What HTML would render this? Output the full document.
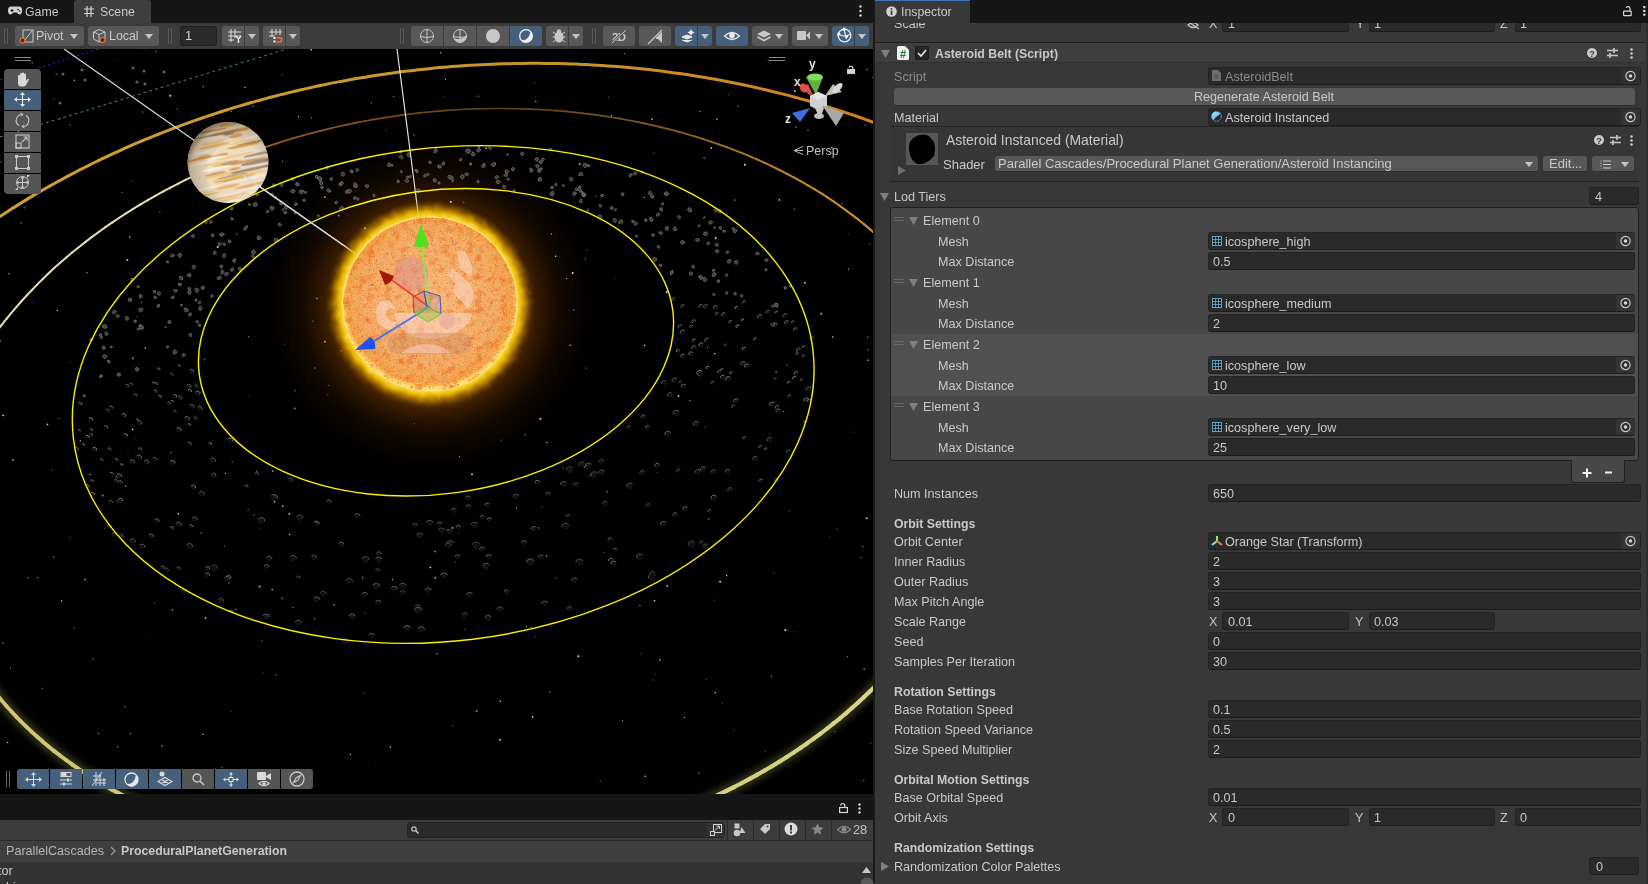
<!DOCTYPE html><html><head><meta charset="utf-8"><style>
*{margin:0;padding:0;box-sizing:border-box}
html,body{width:1648px;height:884px;overflow:hidden;background:#191919;font-family:"Liberation Sans",sans-serif;font-size:12px;color:#d2d2d2}
.a{position:absolute}
.t{position:absolute;white-space:nowrap;line-height:14px;font-size:12.6px;color:#c8c8c8}
.b{font-size:12.3px}
.b{font-weight:bold}
.fld{position:absolute;background:#2a2a2a;border:1px solid #232323;border-bottom-color:#1c1c1c;border-radius:3px}
.btn{position:absolute;background:#585858;border-radius:3px;border-bottom:1px solid #2f2f2f}
.tb{position:absolute;background:#555;border-radius:3px;top:26px;height:20px}
.tbb{position:absolute;background:#46607c;border-radius:3px;top:26px;height:20px}
svg{position:absolute;overflow:visible}
</style></head><body><div id="root" style="position:absolute;left:0;top:0;width:1648px;height:884px;overflow:hidden;will-change:transform"><div class="a" style="left:875px;top:23px;width:773px;height:861px;background:#383838;"></div>
<div class="t" style="left:894px;top:17px;">Scale</div>
<svg style="left:1186px;top:20px" width="14" height="10" viewBox="0 0 14 10"><path d="M2 5 Q7 0 12 5 Q7 10 2 5Z" fill="none" stroke="#c4c4c4" stroke-width="1.3"/><path d="M1 1 L13 9" stroke="#c4c4c4" stroke-width="1.3"/></svg>
<div class="t" style="left:1209px;top:17px;color:#c4c4c4">X</div>
<div class="fld" style="left:1222px;top:14px;width:127px;height:18px;"></div>
<div class="t" style="left:1228px;top:17px;">1</div>
<div class="t" style="left:1356px;top:17px;color:#c4c4c4">Y</div>
<div class="fld" style="left:1369px;top:14px;width:126px;height:18px;"></div>
<div class="t" style="left:1374px;top:17px;">1</div>
<div class="t" style="left:1500px;top:17px;color:#c4c4c4">Z</div>
<div class="fld" style="left:1515px;top:14px;width:126px;height:18px;"></div>
<div class="t" style="left:1520px;top:17px;">1</div>
<div class="a" style="left:875px;top:42px;width:773px;height:1px;background:#1f1f1f;"></div>
<div class="a" style="left:875px;top:43px;width:773px;height:20px;background:#3e3e3e;"></div>
<div class="a" style="left:875px;top:62px;width:773px;height:1px;background:#303030;"></div>
<svg style="left:881px;top:50px" width="9" height="8" viewBox="0 0 9 8"><path d="M0 0 H9 L4.5 8Z" fill="#7f7f7f"/></svg>
<svg style="left:897px;top:46px" width="12" height="14" viewBox="0 0 12 14"><path d="M0 1.5 Q0 0 1.5 0 H8 L12 4 V12.5 Q12 14 10.5 14 H1.5 Q0 14 0 12.5Z" fill="#f0f0f0"/><text x="6" y="12" font-family="Liberation Sans" font-weight="bold" font-size="11" fill="#1d7a2a" text-anchor="middle">#</text></svg>
<div class="a" style="left:915px;top:46px;width:14px;height:14px;background:#262626;border-radius:2px;border:1px solid #1c1c1c"></div>
<svg style="left:917px;top:49px" width="10" height="8" viewBox="0 0 10 8"><path d="M1 4 L4 7 L9 1" fill="none" stroke="#e6e6e6" stroke-width="1.6"/></svg>
<div class="t b" style="left:935px;top:47px;">Asteroid Belt (Script)</div>
<svg style="left:1587px;top:48px" width="10" height="10" viewBox="0 0 10 10"><circle cx="5" cy="5" r="5" fill="#c8c8c8"/><text x="5" y="8.6" font-family="Liberation Sans" font-weight="bold" font-size="9" fill="#3e3e3e" text-anchor="middle">?</text></svg>
<svg style="left:1607px;top:48px" width="11" height="10" viewBox="0 0 11 10"><path d="M0 2.5H11M0 7.5H11" stroke="#c8c8c8" stroke-width="1.3"/><path d="M7 0V5M3 5V10" stroke="#c8c8c8" stroke-width="1.6"/></svg>
<svg style="left:1630px;top:48px" width="3" height="11" viewBox="0 0 3 11"><circle cx="1.5" cy="1.5" r="1.3" fill="#c8c8c8"/><circle cx="1.5" cy="5.5" r="1.3" fill="#c8c8c8"/><circle cx="1.5" cy="9.5" r="1.3" fill="#c8c8c8"/></svg>
<div class="t" style="left:894px;top:70px;color:#8a8a8a">Script</div>
<div class="fld" style="left:1208px;top:67px;width:433px;height:18px;"></div>
<svg style="left:1212px;top:70px" width="9" height="11" viewBox="0 0 9 11"><path d="M0 0H6L9 3V11H0Z" fill="#6c6c6c"/><text x="4.5" y="9" font-family="Liberation Sans" font-size="7" fill="#2a5a2a" text-anchor="middle">#</text></svg>
<div class="t" style="left:1225px;top:70px;color:#8a8a8a">AsteroidBelt</div>
<div class="a" style="left:1621px;top:68px;width:19px;height:16px;background:#2f2f2f;"></div>
<svg style="left:1625px;top:70px" width="12" height="12" viewBox="0 0 12 12"><circle cx="5.5" cy="6" r="4.6" fill="none" stroke="#c8c8c8" stroke-width="1.2"/><circle cx="5.5" cy="6" r="1.7" fill="#d8d8d8"/></svg>
<div class="btn" style="left:894px;top:88px;width:741px;height:18px"></div>
<div class="t" style="left:1194px;top:90px;">Regenerate Asteroid Belt</div>
<div class="t" style="left:894px;top:111px;">Material</div>
<div class="fld" style="left:1208px;top:108px;width:433px;height:18px;"></div>
<svg style="left:1211px;top:111px" width="11" height="11" viewBox="0 0 11 11"><circle cx="5.5" cy="5.5" r="4.8" fill="#2a2a2a" stroke="#6ec4f0" stroke-width="1" stroke-dasharray="1.5 1"/><path d="M5.5 0.7 A4.8 4.8 0 0 0 0.7 5.5 Q0.7 8 2.5 9 Q4 7 5 6 L6 5.5 Q8 4 9.5 2.5 Q8 0.7 5.5 0.7Z" fill="#78ccf4"/><path d="M0.7 5.5 Q2 4 5.5 4.5 V0.7 A4.8 4.8 0 0 0 0.7 5.5Z" fill="#8ad6fa"/></svg>
<div class="t" style="left:1225px;top:111px;">Asteroid Instanced</div>
<div class="a" style="left:1621px;top:109px;width:19px;height:16px;background:#333;"></div>
<svg style="left:1625px;top:111px" width="12" height="12" viewBox="0 0 12 12"><circle cx="5.5" cy="6" r="4.6" fill="none" stroke="#c8c8c8" stroke-width="1.2"/><circle cx="5.5" cy="6" r="1.7" fill="#d8d8d8"/></svg>
<div class="a" style="left:890px;top:126px;width:749px;height:56px;background:#363636;border-top:1px solid #262626;border-bottom:1px solid #242424"></div>
<div class="a" style="left:906px;top:133px;width:32px;height:32px;background:#575757;"></div>
<svg style="left:907px;top:133px" width="31" height="31" viewBox="0 0 31 31"><path d="M6 5 Q14 -1 22 3 L27 9 Q29 16 27 23 Q22 29 15 31 L10 31 Q5 28 3 22 Q1 14 3 9Z" fill="#000"/></svg>
<svg style="left:898px;top:166px" width="8" height="9" viewBox="0 0 8 9"><path d="M0 0 L8 4.5 L0 9Z" fill="#6f6f6f"/></svg>
<div class="t" style="left:946px;top:133px;font-size:13.9px;color:#c8c8c8">Asteroid Instanced (Material)</div>
<svg style="left:1594px;top:135px" width="10" height="10" viewBox="0 0 10 10"><circle cx="5" cy="5" r="5" fill="#c8c8c8"/><text x="5" y="8.6" font-family="Liberation Sans" font-weight="bold" font-size="9" fill="#383838" text-anchor="middle">?</text></svg>
<svg style="left:1610px;top:135px" width="11" height="10" viewBox="0 0 11 10"><path d="M0 2.5H11M0 7.5H11" stroke="#c8c8c8" stroke-width="1.3"/><path d="M7 0V5M3 5V10" stroke="#c8c8c8" stroke-width="1.6"/></svg>
<svg style="left:1630px;top:135px" width="3" height="11" viewBox="0 0 3 11"><circle cx="1.5" cy="1.5" r="1.3" fill="#c8c8c8"/><circle cx="1.5" cy="5.5" r="1.3" fill="#c8c8c8"/><circle cx="1.5" cy="9.5" r="1.3" fill="#c8c8c8"/></svg>
<div class="t" style="left:943px;top:158px;font-size:13px;color:#c8c8c8">Shader</div>
<div class="btn" style="left:995px;top:156px;width:543px;height:16px"></div>
<div class="t" style="left:998px;top:157px;font-size:13px">Parallel Cascades/Procedural Planet Generation/Asteroid Instancing</div>
<svg style="left:1525px;top:162px" width="8" height="5" viewBox="0 0 8 5"><path d="M0 0H8L4 5Z" fill="#c8c8c8"/></svg>
<div class="btn" style="left:1543px;top:156px;width:44px;height:16px"></div>
<div class="t" style="left:1549px;top:157px;font-size:13px">Edit...</div>
<div class="btn" style="left:1592px;top:156px;width:42px;height:16px"></div>
<svg style="left:1600px;top:160px" width="11" height="9" viewBox="0 0 11 9"><path d="M3 1H11M3 4.5H11M3 8H11" stroke="#c8c8c8" stroke-width="1.2"/><path d="M1 0.5V8.5" stroke="#c8c8c8" stroke-width="1" stroke-dasharray="1 1.5"/></svg>
<svg style="left:1621px;top:162px" width="8" height="5" viewBox="0 0 8 5"><path d="M0 0H8L4 5Z" fill="#c8c8c8"/></svg>
<svg style="left:880px;top:193px" width="9" height="8" viewBox="0 0 9 8"><path d="M0 0 H9 L4.5 8Z" fill="#7f7f7f"/></svg>
<div class="t" style="left:894px;top:190px;">Lod Tiers</div>
<div class="fld" style="left:1589px;top:187px;width:50px;height:18px;"></div>
<div class="t" style="left:1595px;top:190px;">4</div>
<div class="a" style="left:890px;top:207px;width:749px;height:254px;background:#474747;border:1px solid #1f1f1f;border-radius:3px"></div>
<div class="a" style="left:891px;top:334px;width:747px;height:62px;background:#505050;"></div>
<svg style="left:894px;top:217px" width="10" height="4" viewBox="0 0 10 4"><path d="M0 0.5H10M0 3.5H10" stroke="#6a6a6a" stroke-width="1"/></svg>
<svg style="left:909px;top:217px" width="9" height="8" viewBox="0 0 9 8"><path d="M0 0 H9 L4.5 8Z" fill="#7f7f7f"/></svg>
<div class="t" style="left:923px;top:214px;">Element 0</div>
<div class="t" style="left:938px;top:235px;">Mesh</div>
<div class="fld" style="left:1208px;top:232px;width:427px;height:18px;"></div>
<svg style="left:1212px;top:236px" width="10" height="10" viewBox="0 0 10 10"><rect x="0.5" y="0.5" width="9" height="9" fill="#1c1c1c" stroke="#5aa0c8" stroke-width="1"/><path d="M3.5 0V10M0 3.5H10" stroke="#5aa0c8" stroke-width="0.9"/><path d="M6.5 0V10M0 6.5H10" stroke="#5aa0c8" stroke-width="0.9"/></svg>
<div class="t" style="left:1225px;top:235px;">icosphere_high</div>
<div class="a" style="left:1616px;top:233px;width:19px;height:16px;background:#333;"></div>
<svg style="left:1620px;top:235px" width="12" height="12" viewBox="0 0 12 12"><circle cx="5.5" cy="6" r="4.6" fill="none" stroke="#c8c8c8" stroke-width="1.2"/><circle cx="5.5" cy="6" r="1.7" fill="#d8d8d8"/></svg>
<div class="t" style="left:938px;top:255px;">Max Distance</div>
<div class="fld" style="left:1208px;top:252px;width:427px;height:18px;"></div>
<div class="t" style="left:1213px;top:255px;">0.5</div>
<svg style="left:894px;top:279px" width="10" height="4" viewBox="0 0 10 4"><path d="M0 0.5H10M0 3.5H10" stroke="#6a6a6a" stroke-width="1"/></svg>
<svg style="left:909px;top:279px" width="9" height="8" viewBox="0 0 9 8"><path d="M0 0 H9 L4.5 8Z" fill="#7f7f7f"/></svg>
<div class="t" style="left:923px;top:276px;">Element 1</div>
<div class="t" style="left:938px;top:297px;">Mesh</div>
<div class="fld" style="left:1208px;top:294px;width:427px;height:18px;"></div>
<svg style="left:1212px;top:298px" width="10" height="10" viewBox="0 0 10 10"><rect x="0.5" y="0.5" width="9" height="9" fill="#1c1c1c" stroke="#5aa0c8" stroke-width="1"/><path d="M3.5 0V10M0 3.5H10" stroke="#5aa0c8" stroke-width="0.9"/><path d="M6.5 0V10M0 6.5H10" stroke="#5aa0c8" stroke-width="0.9"/></svg>
<div class="t" style="left:1225px;top:297px;">icosphere_medium</div>
<div class="a" style="left:1616px;top:295px;width:19px;height:16px;background:#333;"></div>
<svg style="left:1620px;top:297px" width="12" height="12" viewBox="0 0 12 12"><circle cx="5.5" cy="6" r="4.6" fill="none" stroke="#c8c8c8" stroke-width="1.2"/><circle cx="5.5" cy="6" r="1.7" fill="#d8d8d8"/></svg>
<div class="t" style="left:938px;top:317px;">Max Distance</div>
<div class="fld" style="left:1208px;top:314px;width:427px;height:18px;"></div>
<div class="t" style="left:1213px;top:317px;">2</div>
<svg style="left:894px;top:341px" width="10" height="4" viewBox="0 0 10 4"><path d="M0 0.5H10M0 3.5H10" stroke="#6a6a6a" stroke-width="1"/></svg>
<svg style="left:909px;top:341px" width="9" height="8" viewBox="0 0 9 8"><path d="M0 0 H9 L4.5 8Z" fill="#7f7f7f"/></svg>
<div class="t" style="left:923px;top:338px;">Element 2</div>
<div class="t" style="left:938px;top:359px;">Mesh</div>
<div class="fld" style="left:1208px;top:356px;width:427px;height:18px;"></div>
<svg style="left:1212px;top:360px" width="10" height="10" viewBox="0 0 10 10"><rect x="0.5" y="0.5" width="9" height="9" fill="#1c1c1c" stroke="#5aa0c8" stroke-width="1"/><path d="M3.5 0V10M0 3.5H10" stroke="#5aa0c8" stroke-width="0.9"/><path d="M6.5 0V10M0 6.5H10" stroke="#5aa0c8" stroke-width="0.9"/></svg>
<div class="t" style="left:1225px;top:359px;">icosphere_low</div>
<div class="a" style="left:1616px;top:357px;width:19px;height:16px;background:#333;"></div>
<svg style="left:1620px;top:359px" width="12" height="12" viewBox="0 0 12 12"><circle cx="5.5" cy="6" r="4.6" fill="none" stroke="#c8c8c8" stroke-width="1.2"/><circle cx="5.5" cy="6" r="1.7" fill="#d8d8d8"/></svg>
<div class="t" style="left:938px;top:379px;">Max Distance</div>
<div class="fld" style="left:1208px;top:376px;width:427px;height:18px;"></div>
<div class="t" style="left:1213px;top:379px;">10</div>
<svg style="left:894px;top:403px" width="10" height="4" viewBox="0 0 10 4"><path d="M0 0.5H10M0 3.5H10" stroke="#6a6a6a" stroke-width="1"/></svg>
<svg style="left:909px;top:403px" width="9" height="8" viewBox="0 0 9 8"><path d="M0 0 H9 L4.5 8Z" fill="#7f7f7f"/></svg>
<div class="t" style="left:923px;top:400px;">Element 3</div>
<div class="t" style="left:938px;top:421px;">Mesh</div>
<div class="fld" style="left:1208px;top:418px;width:427px;height:18px;"></div>
<svg style="left:1212px;top:422px" width="10" height="10" viewBox="0 0 10 10"><rect x="0.5" y="0.5" width="9" height="9" fill="#1c1c1c" stroke="#5aa0c8" stroke-width="1"/><path d="M3.5 0V10M0 3.5H10" stroke="#5aa0c8" stroke-width="0.9"/><path d="M6.5 0V10M0 6.5H10" stroke="#5aa0c8" stroke-width="0.9"/></svg>
<div class="t" style="left:1225px;top:421px;">icosphere_very_low</div>
<div class="a" style="left:1616px;top:419px;width:19px;height:16px;background:#333;"></div>
<svg style="left:1620px;top:421px" width="12" height="12" viewBox="0 0 12 12"><circle cx="5.5" cy="6" r="4.6" fill="none" stroke="#c8c8c8" stroke-width="1.2"/><circle cx="5.5" cy="6" r="1.7" fill="#d8d8d8"/></svg>
<div class="t" style="left:938px;top:441px;">Max Distance</div>
<div class="fld" style="left:1208px;top:438px;width:427px;height:18px;"></div>
<div class="t" style="left:1213px;top:441px;">25</div>
<div class="a" style="left:1571px;top:460px;width:54px;height:23px;background:#474747;border:1px solid #1f1f1f;border-top:none;border-radius:0 0 3px 3px"></div>
<svg style="left:1582px;top:468px" width="10" height="10" viewBox="0 0 10 10"><path d="M5 0.5V9.5M0.5 5H9.5" stroke="#f0f0f0" stroke-width="2"/></svg>
<svg style="left:1605px;top:471px" width="8" height="3" viewBox="0 0 8 3"><path d="M0 1.5H7" stroke="#f0f0f0" stroke-width="2"/></svg>
<div class="t" style="left:894px;top:487px;">Num Instances</div>
<div class="fld" style="left:1208px;top:484px;width:433px;height:18px;"></div>
<div class="t" style="left:1213px;top:487px;">650</div>
<div class="t" style="left:894px;top:535px;">Orbit Center</div>
<div class="fld" style="left:1208px;top:532px;width:433px;height:18px;"></div>
<div class="t" style="left:1225px;top:535px;">Orange Star (Transform)</div>
<div class="t" style="left:894px;top:555px;">Inner Radius</div>
<div class="fld" style="left:1208px;top:552px;width:433px;height:18px;"></div>
<div class="t" style="left:1213px;top:555px;">2</div>
<div class="t" style="left:894px;top:575px;">Outer Radius</div>
<div class="fld" style="left:1208px;top:572px;width:433px;height:18px;"></div>
<div class="t" style="left:1213px;top:575px;">3</div>
<div class="t" style="left:894px;top:595px;">Max Pitch Angle</div>
<div class="fld" style="left:1208px;top:592px;width:433px;height:18px;"></div>
<div class="t" style="left:1213px;top:595px;">3</div>
<div class="t" style="left:894px;top:635px;">Seed</div>
<div class="fld" style="left:1208px;top:632px;width:433px;height:18px;"></div>
<div class="t" style="left:1213px;top:635px;">0</div>
<div class="t" style="left:894px;top:655px;">Samples Per Iteration</div>
<div class="fld" style="left:1208px;top:652px;width:433px;height:18px;"></div>
<div class="t" style="left:1213px;top:655px;">30</div>
<div class="t" style="left:894px;top:703px;">Base Rotation Speed</div>
<div class="fld" style="left:1208px;top:700px;width:433px;height:18px;"></div>
<div class="t" style="left:1213px;top:703px;">0.1</div>
<div class="t" style="left:894px;top:723px;">Rotation Speed Variance</div>
<div class="fld" style="left:1208px;top:720px;width:433px;height:18px;"></div>
<div class="t" style="left:1213px;top:723px;">0.5</div>
<div class="t" style="left:894px;top:743px;">Size Speed Multiplier</div>
<div class="fld" style="left:1208px;top:740px;width:433px;height:18px;"></div>
<div class="t" style="left:1213px;top:743px;">2</div>
<div class="t" style="left:894px;top:791px;">Base Orbital Speed</div>
<div class="fld" style="left:1208px;top:788px;width:433px;height:18px;"></div>
<div class="t" style="left:1213px;top:791px;">0.01</div>
<svg style="left:1211px;top:536px" width="12" height="10" viewBox="0 0 12 10"><path d="M6 0V5.5" stroke="#a8e05a" stroke-width="2"/><path d="M5.5 5.5L1 9" stroke="#7fd4f8" stroke-width="2.2"/><path d="M6.5 5.5L11 9" stroke="#f07a3a" stroke-width="2.2"/></svg>
<div class="a" style="left:1621px;top:533px;width:19px;height:16px;background:#333;"></div>
<svg style="left:1625px;top:535px" width="12" height="12" viewBox="0 0 12 12"><circle cx="5.5" cy="6" r="4.6" fill="none" stroke="#c8c8c8" stroke-width="1.2"/><circle cx="5.5" cy="6" r="1.7" fill="#d8d8d8"/></svg>
<div class="t b" style="left:894px;top:517px;">Orbit Settings</div>
<div class="t b" style="left:894px;top:685px;">Rotation Settings</div>
<div class="t b" style="left:894px;top:773px;">Orbital Motion Settings</div>
<div class="t b" style="left:894px;top:841px;">Randomization Settings</div>
<div class="t" style="left:894px;top:615px;">Scale Range</div>
<div class="t" style="left:1209px;top:615px;color:#c4c4c4">X</div>
<div class="fld" style="left:1222px;top:612px;width:127px;height:18px;"></div>
<div class="t" style="left:1228px;top:615px;">0.01</div>
<div class="t" style="left:1355px;top:615px;color:#c4c4c4">Y</div>
<div class="fld" style="left:1369px;top:612px;width:126px;height:18px;"></div>
<div class="t" style="left:1374px;top:615px;">0.03</div>
<div class="t" style="left:894px;top:811px;">Orbit Axis</div>
<div class="t" style="left:1209px;top:811px;color:#c4c4c4">X</div>
<div class="fld" style="left:1222px;top:808px;width:127px;height:18px;"></div>
<div class="t" style="left:1228px;top:811px;">0</div>
<div class="t" style="left:1355px;top:811px;color:#c4c4c4">Y</div>
<div class="fld" style="left:1369px;top:808px;width:126px;height:18px;"></div>
<div class="t" style="left:1374px;top:811px;">1</div>
<div class="t" style="left:1500px;top:811px;color:#c4c4c4">Z</div>
<div class="fld" style="left:1515px;top:808px;width:126px;height:18px;"></div>
<div class="t" style="left:1520px;top:811px;">0</div>
<svg style="left:881px;top:862px" width="8" height="9" viewBox="0 0 8 9"><path d="M0 0 L8 4.5 L0 9Z" fill="#7f7f7f"/></svg>
<div class="t" style="left:894px;top:860px;">Randomization Color Palettes</div>
<div class="fld" style="left:1589px;top:857px;width:50px;height:18px;"></div>
<div class="t" style="left:1596px;top:860px;">0</div>
<div class="a" style="left:1645px;top:23px;width:3px;height:861px;background:#3a3a3a;"></div>
<div class="a" style="left:1646px;top:23px;width:2px;height:861px;background:#2e2e2e;"></div>
<div class="a" style="left:0px;top:0px;width:1648px;height:23px;background:#161616;"></div>
<div class="a" style="left:74px;top:0px;width:77px;height:23px;background:#3e3e3e;border-radius:3px 3px 0 0"></div>
<div class="t" style="left:25px;top:5px;font-size:12.3px">Game</div>
<div class="t" style="left:100px;top:5px;font-size:12.3px">Scene</div>
<div class="a" style="left:875px;top:0px;width:95px;height:23px;background:#383838;border-radius:3px 3px 0 0"></div>
<div class="a" style="left:875px;top:0px;width:95px;height:1px;background:#3a79bb;"></div>
<div class="t" style="left:901px;top:5px;font-size:12.3px">Inspector</div>
<div class="a" style="left:0px;top:23px;width:873px;height:26px;background:#3b3b3b;"></div>
<div class="a" style="left:873px;top:0px;width:2px;height:884px;background:#191919;"></div>
<div class="a" style="left:4px;top:28px;width:1px;height:16px;background:#585858;"></div>
<div class="a" style="left:7px;top:28px;width:1px;height:16px;background:#585858;"></div>
<div class="a" style="left:15px;top:26px;width:69px;height:20px;background:#585858;border-radius:3px"></div>
<svg style="left:19px;top:29px" width="15" height="15" viewBox="0 0 15 15"><rect x="4" y="1" width="10" height="12" fill="none" stroke="#c8c8c8" stroke-width="1"/><path d="M5 12 L13 2" stroke="#c8c8c8" stroke-width="1"/><circle cx="3.5" cy="11.5" r="2.5" fill="#383838" stroke="#f26c3a" stroke-width="1.2"/></svg>
<div class="t" style="left:36px;top:29px;font-size:12.4px;color:#c8c8c8">Pivot</div>
<svg style="left:70px;top:34px" width="8" height="5" viewBox="0 0 8 5"><path d="M0 0H8L4 5Z" fill="#c4c4c4"/></svg>
<div class="a" style="left:88px;top:26px;width:71px;height:20px;background:#585858;border-radius:3px"></div>
<svg style="left:92px;top:28px" width="16" height="16" viewBox="0 0 16 16"><path d="M1.5 4 L7 1.5 L13 4 V11 L7 14 L1.5 11Z M1.5 4 L7 6.5 L13 4 M7 6.5 V14" fill="none" stroke="#c8c8c8" stroke-width="1"/><circle cx="10.5" cy="12" r="2.5" fill="#383838" stroke="#f26c3a" stroke-width="1.2"/></svg>
<div class="t" style="left:109px;top:29px;font-size:12.4px;color:#c8c8c8">Local</div>
<svg style="left:145px;top:34px" width="8" height="5" viewBox="0 0 8 5"><path d="M0 0H8L4 5Z" fill="#c4c4c4"/></svg>
<div class="a" style="left:168px;top:28px;width:1px;height:16px;background:#585858;"></div>
<div class="a" style="left:171px;top:28px;width:1px;height:16px;background:#585858;"></div>
<div class="a" style="left:180px;top:26px;width:37px;height:20px;background:#2a2a2a;border:1px solid #202020;border-radius:3px"></div>
<div class="t" style="left:185px;top:29px;font-size:13px;color:#d2d2d2">1</div>
<div class="a" style="left:222px;top:26px;width:22px;height:20px;background:#585858;border-radius:3px 0 0 3px"></div>
<div class="a" style="left:245px;top:26px;width:14px;height:20px;background:#585858;border-radius:0 3px 3px 0"></div>
<svg style="left:228px;top:29px" width="14" height="14" viewBox="0 0 14 14"><path d="M3 0V13M7 0V9M0 3H13M0 7H13M0 11H6" stroke="#d8d8d8" stroke-width="1.1"/><path d="M8 7 L10.5 10 L13 7 M10.5 10 V14" fill="none" stroke="#e8e8e8" stroke-width="1.4"/></svg>
<svg style="left:248px;top:34px" width="8" height="5" viewBox="0 0 8 5"><path d="M0 0H8L4 5Z" fill="#c4c4c4"/></svg>
<div class="a" style="left:263px;top:26px;width:22px;height:20px;background:#585858;border-radius:3px 0 0 3px"></div>
<div class="a" style="left:286px;top:26px;width:14px;height:20px;background:#585858;border-radius:0 3px 3px 0"></div>
<svg style="left:269px;top:29px" width="14" height="14" viewBox="0 0 14 14"><path d="M3 0V8M7 0V6M11 0V6M0 3H13M0 7H6" stroke="#d8d8d8" stroke-width="1.1"/><rect x="4.5" y="8" width="2" height="2" fill="#fff"/><rect x="4.5" y="11.5" width="2" height="2" fill="#fff"/><path d="M8 8.7 H10.5 A2.1 2.1 0 0 1 10.5 13 H8" fill="none" stroke="#f26c3a" stroke-width="1.7"/></svg>
<svg style="left:289px;top:34px" width="8" height="5" viewBox="0 0 8 5"><path d="M0 0H8L4 5Z" fill="#c4c4c4"/></svg>
<div class="a" style="left:400px;top:28px;width:1px;height:16px;background:#585858;"></div>
<div class="a" style="left:403px;top:28px;width:1px;height:16px;background:#585858;"></div>
<div class="a" style="left:411px;top:26px;width:32px;height:20px;background:#585858;border-radius:3px 0 0 3px"></div>
<div class="a" style="left:444px;top:26px;width:32px;height:20px;background:#585858;border-radius:0"></div>
<div class="a" style="left:477px;top:26px;width:32px;height:20px;background:#585858;border-radius:0"></div>
<div class="a" style="left:510px;top:26px;width:32px;height:20px;background:#46607c;border-radius:0 3px 3px 0"></div>
<svg style="left:420px;top:29px" width="14" height="14" viewBox="0 0 14 14"><circle cx="7" cy="7" r="6.5" fill="none" stroke="#c8c8c8" stroke-width="1"/><path d="M0.5 7.5 Q7 9.5 13.5 7.5 M7 0.5 V13.5" fill="none" stroke="#c8c8c8" stroke-width="1"/></svg>
<svg style="left:453px;top:29px" width="14" height="14" viewBox="0 0 14 14"><circle cx="7" cy="7" r="6.5" fill="none" stroke="#c8c8c8" stroke-width="1"/><path d="M0.5 7.5 Q7 9.5 13.5 7.5 M7 0.5 V13.5" fill="none" stroke="#c8c8c8" stroke-width="1"/><path d="M13.5 7 A6.5 6.5 0 0 1 1 9 Q7 12 13 7Z" fill="#c8c8c8"/></svg>
<svg style="left:486px;top:29px" width="14" height="14" viewBox="0 0 14 14"><circle cx="7" cy="7" r="7" fill="#c8c8c8"/></svg>
<svg style="left:519px;top:29px" width="14" height="14" viewBox="0 0 14 14"><circle cx="7" cy="7" r="6.3" fill="none" stroke="#f0f0f0" stroke-width="1.3"/><path d="M13.3 7 A6.3 6.3 0 0 1 2 11 Q9 12.5 11.5 3 Q13.3 5 13.3 7Z" fill="#f0f0f0"/></svg>
<div class="a" style="left:546px;top:26px;width:22px;height:20px;background:#585858;border-radius:3px 0 0 3px"></div>
<div class="a" style="left:569px;top:26px;width:14px;height:20px;background:#585858;border-radius:0 3px 3px 0"></div>
<svg style="left:552px;top:29px" width="14" height="14" viewBox="0 0 14 14"><ellipse cx="7" cy="8" rx="4.5" ry="5.5" fill="#c8c8c8"/><path d="M1 3 L4 5 M13 3 L10 5 M0.5 8H3 M11 8H13.5 M1 13 L3.5 11 M13 13 L10.5 11" stroke="#c8c8c8" stroke-width="1"/><circle cx="7" cy="2.5" r="2.2" fill="#c8c8c8"/></svg>
<svg style="left:572px;top:34px" width="8" height="5" viewBox="0 0 8 5"><path d="M0 0H8L4 5Z" fill="#c4c4c4"/></svg>
<div class="a" style="left:592px;top:28px;width:1px;height:16px;background:#585858;"></div>
<div class="a" style="left:595px;top:28px;width:1px;height:16px;background:#585858;"></div>
<div class="a" style="left:603px;top:26px;width:32px;height:20px;background:#585858;border-radius:3px"></div>
<div class="t" style="left:612px;top:30px;font-size:11.5px;font-weight:bold;color:#c8c8c8;letter-spacing:-0.6px">2D</div>
<svg style="left:610px;top:29px" width="18" height="14" viewBox="0 0 18 14"><path d="M2 14 L16 1" stroke="#555" stroke-width="2.4"/><path d="M2 14 L16 1" stroke="#c8c8c8" stroke-width="1"/></svg>
<div class="a" style="left:639px;top:26px;width:32px;height:20px;background:#585858;border-radius:3px"></div>
<svg style="left:647px;top:29px" width="16" height="15" viewBox="0 0 16 15"><rect x="9" y="5" width="3" height="5" fill="#c8c8c8"/><path d="M11 5 L15 1 V14 L11 10Z" fill="#c8c8c8"/><path d="M1 15 L15 1" stroke="#555" stroke-width="2.4"/><path d="M1 15 L15 1" stroke="#c8c8c8" stroke-width="1.2"/></svg>
<div class="a" style="left:675px;top:26px;width:22px;height:20px;background:#46607c;border-radius:3px 0 0 3px"></div>
<div class="a" style="left:698px;top:26px;width:14px;height:20px;background:#46607c;border-radius:0 3px 3px 0"></div>
<svg style="left:681px;top:29px" width="14" height="14" viewBox="0 0 14 14"><path d="M1 8 L6 6 L11 8 L6 10Z M1 11 L6 13 L11 11" fill="#e8e8e8" stroke="#e8e8e8" stroke-width="1"/><path d="M10 0 Q10.6 3 13.5 3.5 Q10.6 4 10 7 Q9.4 4 6.5 3.5 Q9.4 3 10 0Z" fill="#f0f0f0"/></svg>
<svg style="left:701px;top:34px" width="8" height="5" viewBox="0 0 8 5"><path d="M0 0H8L4 5Z" fill="#c4c4c4"/></svg>
<div class="a" style="left:716px;top:26px;width:32px;height:20px;background:#46607c;border-radius:3px"></div>
<svg style="left:724px;top:31px" width="16" height="10" viewBox="0 0 16 10"><path d="M0.5 5 Q8 -2 15.5 5 Q8 12 0.5 5Z" fill="none" stroke="#e8e8e8" stroke-width="1.2"/><circle cx="8" cy="4.5" r="2.8" fill="#e8e8e8"/></svg>
<div class="a" style="left:752px;top:26px;width:36px;height:20px;background:#585858;border-radius:3px"></div>
<svg style="left:757px;top:30px" width="14" height="12" viewBox="0 0 14 12"><path d="M0 4 L7 0.5 L14 4 L7 7.5Z" fill="#c8c8c8"/><path d="M0.5 7 L7 10.5 L13.5 7" fill="none" stroke="#c8c8c8" stroke-width="1.8"/></svg>
<svg style="left:775px;top:34px" width="8" height="5" viewBox="0 0 8 5"><path d="M0 0H8L4 5Z" fill="#c4c4c4"/></svg>
<div class="a" style="left:792px;top:26px;width:36px;height:20px;background:#585858;border-radius:3px"></div>
<svg style="left:797px;top:30px" width="13" height="11" viewBox="0 0 13 11"><rect x="0" y="1" width="9" height="9" rx="1" fill="#c8c8c8"/><path d="M9 5.5 L13 1.5 V9.5Z" fill="#c8c8c8"/></svg>
<svg style="left:815px;top:34px" width="8" height="5" viewBox="0 0 8 5"><path d="M0 0H8L4 5Z" fill="#c4c4c4"/></svg>
<div class="a" style="left:832px;top:26px;width:22px;height:20px;background:#46607c;border-radius:3px 0 0 3px"></div>
<div class="a" style="left:855px;top:26px;width:14px;height:20px;background:#46607c;border-radius:0 3px 3px 0"></div>
<svg style="left:837px;top:28px" width="15" height="15" viewBox="0 0 15 15"><circle cx="7.5" cy="7.5" r="6.3" fill="none" stroke="#f0f0f0" stroke-width="1.3"/><path d="M1.5 6 Q7.5 10 13.5 6 M7 1 L9.5 11" fill="none" stroke="#f0f0f0" stroke-width="1.2"/><circle cx="1.8" cy="6" r="1.6" fill="#fff"/><circle cx="7" cy="1.2" r="1.6" fill="#fff"/><circle cx="9.5" cy="8.5" r="1.6" fill="#fff"/></svg>
<svg style="left:858px;top:34px" width="8" height="5" viewBox="0 0 8 5"><path d="M0 0H8L4 5Z" fill="#c4c4c4"/></svg>
<svg style="left:8px;top:6px" width="14" height="9" viewBox="0 0 14 9"><path d="M3 0.5 H11 Q14 0.5 14 4.5 Q14 8.5 11.5 8.5 Q10 8.5 9 6.5 H5 Q4 8.5 2.5 8.5 Q0 8.5 0 4.5 Q0 0.5 3 0.5Z" fill="#d2d2d2"/><path d="M2.5 4.5H5.5M4 3V6" stroke="#191919" stroke-width="1"/><circle cx="10" cy="3.5" r="0.8" fill="#191919"/><circle cx="11.5" cy="5" r="0.8" fill="#191919"/></svg>
<svg style="left:84px;top:6px" width="10" height="11" viewBox="0 0 10 11"><path d="M3 0V11M7 0V11M0 3H10M0 7.5H10" stroke="#d2d2d2" stroke-width="1.2"/></svg>
<svg style="left:859px;top:5px" width="3" height="12" viewBox="0 0 3 12"><circle cx="1.5" cy="1.5" r="1.2" fill="#d8d8d8"/><circle cx="1.5" cy="6" r="1.2" fill="#d8d8d8"/><circle cx="1.5" cy="10.5" r="1.2" fill="#d8d8d8"/></svg>
<svg style="left:886px;top:6px" width="11" height="11" viewBox="0 0 11 11"><circle cx="5.5" cy="5.5" r="5.3" fill="#d2d2d2"/><rect x="4.7" y="4.5" width="1.7" height="4.5" fill="#383838"/><circle cx="5.5" cy="2.8" r="0.9" fill="#383838"/></svg>
<svg style="left:1623px;top:6px" width="9" height="10" viewBox="0 0 9 10"><rect x="0.6" y="5.1" width="7.6" height="4.6" rx="0.6" fill="none" stroke="#d8d8d8" stroke-width="1.2"/><path d="M7 5 V2.6 A2.1 2.1 0 0 0 3 1.8" fill="none" stroke="#d8d8d8" stroke-width="1.2"/></svg>
<svg style="left:1643px;top:6px" width="3" height="10" viewBox="0 0 3 10"><rect x="0.2" y="0" width="2.2" height="2.2" fill="#d8d8d8"/><rect x="0.2" y="3.8" width="2.2" height="2.2" fill="#d8d8d8"/><rect x="0.2" y="7.6" width="2.2" height="2.2" fill="#d8d8d8"/></svg>
<div class="a" style="left:0;top:49px;width:873px;height:745px;background:#000;overflow:hidden"><svg style="left:0;top:0" width="873" height="745" viewBox="0 0 873 745"><defs><radialGradient id="glow" cx="430" cy="257" r="175" gradientUnits="userSpaceOnUse"><stop offset="0.5" stop-color="#9a5000" stop-opacity="0.85"/><stop offset="0.6" stop-color="#6a3400" stop-opacity="0.55"/><stop offset="0.75" stop-color="#3a1c00" stop-opacity="0.3"/><stop offset="0.9" stop-color="#1a0c00" stop-opacity="0.12"/><stop offset="1" stop-color="#000" stop-opacity="0"/></radialGradient><radialGradient id="corona" cx="430" cy="255" r="104" gradientUnits="userSpaceOnUse"><stop offset="0.82" stop-color="#ffe860" stop-opacity="1"/><stop offset="0.88" stop-color="#f8c800" stop-opacity="0.9"/><stop offset="0.94" stop-color="#c08800" stop-opacity="0.45"/><stop offset="1" stop-color="#503000" stop-opacity="0"/></radialGradient><radialGradient id="sund" cx="430" cy="251" r="88" gradientUnits="userSpaceOnUse"><stop offset="0" stop-color="#f6b878"/><stop offset="0.75" stop-color="#f3aa62"/><stop offset="0.95" stop-color="#f0a244"/><stop offset="1" stop-color="#ffe070"/></radialGradient><filter id="noise" x="0" y="0" width="100%" height="100%" filterUnits="objectBoundingBox" color-interpolation-filters="sRGB"><feTurbulence type="fractalNoise" baseFrequency="0.12" numOctaves="3" seed="4" result="m"/><feColorMatrix in="m" type="matrix" values="0 0 0 0 0.92  0 0 0 0 0.42  0 0 0 0 0.14  2.2 0 0 0 -1.1" result="patch"/><feTurbulence type="fractalNoise" baseFrequency="0.45" numOctaves="2" seed="3" result="n"/><feColorMatrix in="n" type="matrix" values="0 0 0 0 0.9  0 0 0 0 0.34  0 0 0 0 0.1  3.2 0 0 0 -1.95" result="dark"/><feTurbulence type="fractalNoise" baseFrequency="0.9" numOctaves="1" seed="11" result="n2"/><feColorMatrix in="n2" type="matrix" values="0 0 0 0 1  0 0 0 0 0.86  0 0 0 0 0.72  3.2 0 0 0 -1.85" result="light"/><feMerge><feMergeNode in="patch"/><feMergeNode in="dark"/><feMergeNode in="light"/></feMerge></filter><filter id="blur06"><feGaussianBlur stdDeviation="0.7"/></filter><filter id="corfx" x="-20%" y="-20%" width="140%" height="140%"><feTurbulence type="fractalNoise" baseFrequency="0.12" numOctaves="2" seed="9" result="t"/><feDisplacementMap in="SourceGraphic" in2="t" scale="5" xChannelSelector="R" yChannelSelector="G"/><feGaussianBlur stdDeviation="0.8"/></filter><filter id="blur1"><feGaussianBlur stdDeviation="1.2"/></filter><filter id="blur3"><feGaussianBlur stdDeviation="3"/></filter><radialGradient id="planet" cx="215" cy="96" r="55" gradientUnits="userSpaceOnUse"><stop offset="0" stop-color="#f4ead8"/><stop offset="0.6" stop-color="#e8d2b0"/><stop offset="1" stop-color="#b89060"/></radialGradient><linearGradient id="ringD" x1="0" y1="0" x2="873" y2="0" gradientUnits="userSpaceOnUse"><stop offset="0" stop-color="#ece6bc"/><stop offset="0.22" stop-color="#e8dcae"/><stop offset="0.3" stop-color="#8a5418"/><stop offset="0.6" stop-color="#8a5a1c"/><stop offset="0.85" stop-color="#c88a2c"/><stop offset="1" stop-color="#d8a030"/></linearGradient><linearGradient id="ringC" x1="0" y1="10" x2="0" y2="750" gradientUnits="userSpaceOnUse"><stop offset="0" stop-color="#d8a02c"/><stop offset="0.25" stop-color="#d4a83a"/><stop offset="0.7" stop-color="#d8cf78"/><stop offset="1" stop-color="#e0da8c"/></linearGradient><radialGradient id="plshade" cx="236" cy="122" r="50" gradientUnits="userSpaceOnUse"><stop offset="0.55" stop-color="#000" stop-opacity="0"/><stop offset="0.9" stop-color="#3a2a10" stop-opacity="0.25"/><stop offset="1" stop-color="#2a1a08" stop-opacity="0.5"/></radialGradient><clipPath id="sunclip"><circle cx="430" cy="304" r="87"/></clipPath><clipPath id="plclip"><circle cx="228" cy="113.5" r="40.5"/></clipPath></defs><rect x="0" y="0" width="873" height="745" fill="#000"/><rect x="0" y="0" width="873" height="745" fill="url(#glow)"/><circle cx="282.7" cy="112.4" r="0.55" fill="#b8b0a0"/><circle cx="717.0" cy="70.1" r="1.0" fill="#7a7a7a"/><circle cx="794.2" cy="160.0" r="0.55" fill="#e0d8c8"/><circle cx="365.1" cy="179.3" r="1.0" fill="#e0d8c8"/><circle cx="51.6" cy="421.3" r="0.65" fill="#7a7a7a"/><circle cx="503.8" cy="295.5" r="0.65" fill="#7a7a7a"/><circle cx="486.0" cy="99.2" r="0.85" fill="#c8c8b8"/><circle cx="472.0" cy="425.3" r="1.0" fill="#c8c8b8"/><circle cx="90.0" cy="425.5" r="0.65" fill="#d8d8d8"/><circle cx="85.1" cy="530.5" r="1.0" fill="#7a7a7a"/><circle cx="540.4" cy="369.8" r="1.0" fill="#e0d8c8"/><circle cx="678.5" cy="346.9" r="0.85" fill="#d8d8d8"/><circle cx="261.7" cy="591.8" r="0.65" fill="#b8b0a0"/><circle cx="501.5" cy="391.3" r="0.75" fill="#605850"/><circle cx="251.4" cy="730.2" r="0.55" fill="#505050"/><circle cx="365.0" cy="564.1" r="0.65" fill="#605850"/><circle cx="368.1" cy="716.7" r="0.55" fill="#505050"/><circle cx="500.3" cy="652.2" r="0.75" fill="#d8d8d8"/><circle cx="607.0" cy="442.8" r="1.0" fill="#605850"/><circle cx="60.0" cy="69.7" r="0.75" fill="#605850"/><circle cx="608.5" cy="48.4" r="0.75" fill="#605850"/><circle cx="248.5" cy="287.4" r="0.75" fill="#7a7a7a"/><circle cx="821.2" cy="264.8" r="1.0" fill="#b8b0a0"/><circle cx="431.0" cy="162.6" r="0.75" fill="#c8c8b8"/><circle cx="644.6" cy="296.4" r="0.85" fill="#b8b0a0"/><circle cx="145.2" cy="299.2" r="0.75" fill="#c8c8b8"/><circle cx="715.2" cy="643.7" r="0.75" fill="#e0d8c8"/><circle cx="861.2" cy="508.6" r="0.85" fill="#3a5aa0"/><circle cx="131.8" cy="131.3" r="0.65" fill="#3a5aa0"/><circle cx="10.5" cy="619.2" r="0.65" fill="#908070"/><circle cx="246.1" cy="108.5" r="1.0" fill="#d8d8d8"/><circle cx="532.4" cy="237.4" r="0.65" fill="#505050"/><circle cx="829.5" cy="488.0" r="0.55" fill="#605850"/><circle cx="785.3" cy="581.1" r="1.0" fill="#e0d8c8"/><circle cx="347.5" cy="293.6" r="0.85" fill="#e0d8c8"/><circle cx="54.3" cy="50.2" r="0.65" fill="#605850"/><circle cx="141.7" cy="253.3" r="0.55" fill="#b8b0a0"/><circle cx="0.2" cy="112.7" r="0.55" fill="#d8d8d8"/><circle cx="535.8" cy="52.4" r="0.65" fill="#e0d8c8"/><circle cx="129.7" cy="187.9" r="0.75" fill="#d8d8d8"/><circle cx="413.9" cy="85.9" r="0.85" fill="#605850"/><circle cx="419.4" cy="232.3" r="0.65" fill="#b8b0a0"/><circle cx="654.5" cy="551.6" r="0.85" fill="#c8c8b8"/><circle cx="450.8" cy="152.9" r="1.0" fill="#d8d8d8"/><circle cx="128.0" cy="404.7" r="0.55" fill="#505050"/><circle cx="260.2" cy="479.0" r="0.55" fill="#908070"/><circle cx="452.6" cy="676.7" r="0.75" fill="#3a5aa0"/><circle cx="465.0" cy="580.4" r="0.75" fill="#3a5aa0"/><circle cx="535.3" cy="587.4" r="0.65" fill="#3a5aa0"/><circle cx="714.4" cy="551.2" r="0.65" fill="#3a5aa0"/><circle cx="451.9" cy="264.9" r="0.55" fill="#7a7a7a"/><circle cx="689.8" cy="351.8" r="0.65" fill="#d8d8d8"/><circle cx="390.4" cy="698.1" r="0.75" fill="#d8d8d8"/><circle cx="70.3" cy="76.1" r="0.85" fill="#3a5aa0"/><circle cx="294.8" cy="359.6" r="1.0" fill="#7a7a7a"/><circle cx="418.6" cy="486.5" r="0.55" fill="#b8b0a0"/><circle cx="794.2" cy="582.8" r="0.65" fill="#605850"/><circle cx="776.1" cy="323.3" r="0.75" fill="#b8b0a0"/><circle cx="699.1" cy="723.9" r="0.85" fill="#605850"/><circle cx="350.4" cy="705.4" r="0.65" fill="#c8c8b8"/><circle cx="867.0" cy="20.5" r="1.0" fill="#605850"/><circle cx="704.1" cy="108.9" r="1.0" fill="#605850"/><circle cx="573.8" cy="261.1" r="1.0" fill="#505050"/><circle cx="114.3" cy="10.6" r="0.55" fill="#505050"/><circle cx="654.3" cy="103.7" r="0.65" fill="#3a5aa0"/><circle cx="24.4" cy="158.5" r="1.0" fill="#3a5aa0"/><circle cx="666.7" cy="242.9" r="1.0" fill="#e0d8c8"/><circle cx="728.3" cy="45.4" r="0.75" fill="#605850"/><circle cx="578.3" cy="607.2" r="1.0" fill="#e0d8c8"/><circle cx="722.1" cy="654.2" r="0.65" fill="#505050"/><circle cx="132.6" cy="380.4" r="0.85" fill="#c8c8b8"/><circle cx="531.3" cy="578.1" r="0.65" fill="#c8c8b8"/><circle cx="123.6" cy="461.2" r="0.55" fill="#505050"/><circle cx="53.9" cy="508.3" r="1.0" fill="#505050"/><circle cx="421.2" cy="578.5" r="1.0" fill="#7a7a7a"/><circle cx="216.9" cy="206.3" r="0.55" fill="#505050"/><circle cx="394.7" cy="20.8" r="0.55" fill="#605850"/><circle cx="284.3" cy="725.2" r="1.0" fill="#505050"/><circle cx="174.1" cy="206.5" r="1.0" fill="#505050"/><circle cx="704.8" cy="378.3" r="0.65" fill="#505050"/><circle cx="765.2" cy="701.9" r="0.75" fill="#505050"/><circle cx="779.4" cy="150.9" r="0.85" fill="#c8c8b8"/><circle cx="363.7" cy="292.3" r="0.75" fill="#b8b0a0"/><circle cx="585.9" cy="319.1" r="0.65" fill="#908070"/><circle cx="684.4" cy="668.3" r="0.65" fill="#d8d8d8"/><circle cx="124.8" cy="657.7" r="0.85" fill="#3a5aa0"/><circle cx="651.9" cy="70.1" r="0.85" fill="#c8c8b8"/><circle cx="864.2" cy="620.2" r="0.65" fill="#e0d8c8"/><circle cx="867.8" cy="300.8" r="0.85" fill="#3a5aa0"/><circle cx="311.3" cy="68.7" r="0.75" fill="#7a7a7a"/><circle cx="295.1" cy="341.7" r="0.55" fill="#e0d8c8"/><circle cx="289.4" cy="464.8" r="1.0" fill="#b8b0a0"/><circle cx="98.5" cy="684.3" r="0.65" fill="#b8b0a0"/><circle cx="73.4" cy="202.6" r="0.65" fill="#908070"/><circle cx="659.8" cy="610.7" r="0.75" fill="#e0d8c8"/><circle cx="130.4" cy="684.8" r="1.0" fill="#605850"/><circle cx="611.5" cy="66.6" r="0.55" fill="#c8c8b8"/><circle cx="371.3" cy="53.9" r="0.55" fill="#b8b0a0"/><circle cx="699.8" cy="62.4" r="0.65" fill="#b8b0a0"/><circle cx="230.9" cy="90.6" r="0.55" fill="#d8d8d8"/><circle cx="868.0" cy="311.2" r="0.75" fill="#c8c8b8"/><circle cx="37.7" cy="528.6" r="0.55" fill="#c8c8b8"/><circle cx="228.6" cy="135.0" r="0.75" fill="#908070"/><circle cx="463.6" cy="153.4" r="0.85" fill="#505050"/><circle cx="586.8" cy="201.5" r="0.55" fill="#908070"/><circle cx="32.3" cy="13.7" r="1.0" fill="#505050"/><circle cx="853.8" cy="383.1" r="0.65" fill="#605850"/><circle cx="92.8" cy="610.1" r="0.85" fill="#605850"/><circle cx="476.6" cy="662.1" r="1.0" fill="#908070"/><circle cx="600.4" cy="731.9" r="0.75" fill="#3a5aa0"/><circle cx="726.6" cy="526.5" r="0.65" fill="#e0d8c8"/><circle cx="863.8" cy="731.5" r="0.65" fill="#7a7a7a"/><circle cx="61.7" cy="552.0" r="0.75" fill="#e0d8c8"/><circle cx="142.5" cy="62.9" r="0.85" fill="#505050"/><circle cx="585.4" cy="210.0" r="0.65" fill="#908070"/><circle cx="39.5" cy="138.1" r="0.75" fill="#605850"/><circle cx="3.2" cy="271.3" r="0.75" fill="#505050"/><circle cx="282.4" cy="25.7" r="0.75" fill="#3a5aa0"/><circle cx="311.3" cy="0.8" r="0.85" fill="#b8b0a0"/><circle cx="414.4" cy="374.6" r="0.65" fill="#3a5aa0"/><circle cx="440.6" cy="3.7" r="0.75" fill="#b8b0a0"/><circle cx="125.6" cy="437.2" r="0.85" fill="#7a7a7a"/><circle cx="261.6" cy="469.1" r="0.55" fill="#505050"/><circle cx="744.9" cy="115.7" r="1.0" fill="#e0d8c8"/><circle cx="667.2" cy="536.9" r="0.85" fill="#c8c8b8"/><circle cx="248.1" cy="460.9" r="0.65" fill="#7a7a7a"/><circle cx="720.1" cy="532.7" r="1.0" fill="#e0d8c8"/><circle cx="640.7" cy="605.1" r="0.65" fill="#505050"/><circle cx="657.3" cy="423.5" r="0.55" fill="#3a5aa0"/><circle cx="74.3" cy="31.2" r="0.75" fill="#b8b0a0"/><circle cx="328.8" cy="336.3" r="0.55" fill="#7a7a7a"/><circle cx="546.7" cy="507.1" r="0.85" fill="#908070"/><circle cx="2.9" cy="594.3" r="1.0" fill="#505050"/><circle cx="80.3" cy="391.9" r="0.85" fill="#908070"/><circle cx="706.4" cy="630.4" r="0.65" fill="#3a5aa0"/><circle cx="201.4" cy="484.2" r="0.85" fill="#605850"/><circle cx="738.1" cy="57.2" r="0.75" fill="#7a7a7a"/><circle cx="538.6" cy="478.9" r="0.55" fill="#c8c8b8"/><circle cx="289.6" cy="485.4" r="0.75" fill="#c8c8b8"/><circle cx="10.9" cy="45.2" r="0.75" fill="#b8b0a0"/><circle cx="604.3" cy="503.4" r="0.75" fill="#505050"/><circle cx="249.3" cy="347.1" r="0.55" fill="#505050"/><circle cx="173.9" cy="728.7" r="0.85" fill="#7a7a7a"/><circle cx="252.8" cy="57.0" r="1.0" fill="#605850"/><circle cx="867.7" cy="288.2" r="0.65" fill="#b8b0a0"/><circle cx="507.6" cy="105.6" r="1.0" fill="#908070"/><circle cx="831.7" cy="98.8" r="1.0" fill="#908070"/><circle cx="774.2" cy="524.0" r="0.65" fill="#605850"/><circle cx="783.7" cy="362.2" r="0.55" fill="#c8c8b8"/><circle cx="3.1" cy="366.3" r="0.85" fill="#e0d8c8"/><circle cx="263.6" cy="104.8" r="0.75" fill="#e0d8c8"/><circle cx="275.9" cy="626.0" r="0.55" fill="#d8d8d8"/><circle cx="655.4" cy="625.1" r="0.55" fill="#3a5aa0"/><circle cx="622.5" cy="671.7" r="0.75" fill="#908070"/><circle cx="324.9" cy="292.7" r="1.0" fill="#b8b0a0"/><circle cx="314.9" cy="318.9" r="0.75" fill="#7a7a7a"/><circle cx="245.0" cy="38.5" r="0.75" fill="#c8c8b8"/><circle cx="217.7" cy="198.0" r="1.0" fill="#d8d8d8"/><circle cx="165.7" cy="278.1" r="0.85" fill="#7a7a7a"/><circle cx="708.8" cy="470.0" r="1.0" fill="#505050"/><circle cx="177.6" cy="60.0" r="0.85" fill="#605850"/><circle cx="536.8" cy="103.2" r="0.75" fill="#605850"/><circle cx="42.8" cy="690.4" r="0.65" fill="#c8c8b8"/><circle cx="412.2" cy="256.0" r="0.75" fill="#908070"/><circle cx="645.2" cy="727.3" r="0.75" fill="#e0d8c8"/><circle cx="572.7" cy="224.1" r="1.0" fill="#e0d8c8"/><circle cx="104.5" cy="479.2" r="0.55" fill="#3a5aa0"/><circle cx="437.0" cy="604.8" r="1.0" fill="#3a5aa0"/><circle cx="395.5" cy="248.0" r="0.85" fill="#e0d8c8"/><circle cx="121.9" cy="143.3" r="0.55" fill="#c8c8b8"/><circle cx="298.5" cy="67.9" r="0.65" fill="#d8d8d8"/><circle cx="225.5" cy="424.4" r="0.55" fill="#e0d8c8"/><circle cx="334.2" cy="555.7" r="0.65" fill="#e0d8c8"/><circle cx="235.9" cy="560.3" r="0.85" fill="#908070"/><circle cx="501.3" cy="268.3" r="1.0" fill="#505050"/><circle cx="549.7" cy="642.8" r="0.65" fill="#b8b0a0"/><circle cx="236.6" cy="185.1" r="0.85" fill="#605850"/><circle cx="377.0" cy="232.5" r="0.55" fill="#c8c8b8"/><circle cx="28.1" cy="528.6" r="0.85" fill="#605850"/><circle cx="0.2" cy="291.7" r="1.0" fill="#605850"/><circle cx="848.8" cy="185.1" r="0.55" fill="#3a5aa0"/><circle cx="134.8" cy="389.2" r="0.55" fill="#605850"/><circle cx="74.2" cy="578.8" r="0.55" fill="#c8c8b8"/><circle cx="203.0" cy="685.3" r="0.75" fill="#c8c8b8"/><circle cx="546.9" cy="393.5" r="0.85" fill="#b8b0a0"/><circle cx="86.8" cy="223.8" r="1.0" fill="#3a5aa0"/><circle cx="338.8" cy="166.6" r="1.0" fill="#7a7a7a"/><circle cx="9.1" cy="224.6" r="0.85" fill="#908070"/><circle cx="837.2" cy="480.2" r="0.65" fill="#605850"/><circle cx="459.4" cy="407.5" r="0.55" fill="#e0d8c8"/><circle cx="615.2" cy="229.0" r="0.55" fill="#3a5aa0"/><circle cx="435.0" cy="502.5" r="0.85" fill="#b8b0a0"/><circle cx="224.6" cy="497.2" r="0.75" fill="#3a5aa0"/><circle cx="430.3" cy="518.4" r="0.85" fill="#d8d8d8"/><circle cx="595.9" cy="147.6" r="0.75" fill="#505050"/><circle cx="58.9" cy="369.3" r="0.65" fill="#908070"/><circle cx="668.6" cy="144.5" r="0.85" fill="#3a5aa0"/><circle cx="231.4" cy="662.6" r="0.55" fill="#605850"/><circle cx="532.6" cy="667.9" r="0.85" fill="#e0d8c8"/><circle cx="794.8" cy="42.0" r="1.0" fill="#c8c8b8"/><circle cx="804.8" cy="40.5" r="0.55" fill="#c8c8b8"/><circle cx="362.6" cy="528.8" r="0.65" fill="#e0d8c8"/><circle cx="392.5" cy="530.5" r="0.75" fill="#b8b0a0"/><circle cx="870.8" cy="694.0" r="0.75" fill="#3a5aa0"/><circle cx="162.0" cy="697.2" r="0.85" fill="#7a7a7a"/><circle cx="272.2" cy="540.4" r="0.75" fill="#d8d8d8"/><circle cx="386.2" cy="81.2" r="0.55" fill="#908070"/><circle cx="70.5" cy="313.0" r="0.55" fill="#505050"/><circle cx="841.8" cy="154.5" r="0.75" fill="#908070"/><circle cx="717.6" cy="322.2" r="0.55" fill="#605850"/><circle cx="170.9" cy="403.4" r="0.85" fill="#3a5aa0"/><circle cx="282.2" cy="549.3" r="0.85" fill="#7a7a7a"/><circle cx="551.4" cy="184.8" r="0.85" fill="#7a7a7a"/><circle cx="327.9" cy="345.7" r="0.55" fill="#908070"/><circle cx="170.2" cy="46.8" r="1.0" fill="#d8d8d8"/><circle cx="316.9" cy="249.6" r="1.0" fill="#7a7a7a"/><circle cx="228.9" cy="533.9" r="0.75" fill="#908070"/><circle cx="259.6" cy="537.6" r="1.0" fill="#b8b0a0"/><circle cx="21.2" cy="174.2" r="0.85" fill="#605850"/><circle cx="832.8" cy="288.0" r="0.75" fill="#e0d8c8"/><circle cx="711.3" cy="98.9" r="0.85" fill="#c8c8b8"/><circle cx="7.6" cy="693.6" r="0.75" fill="#c8c8b8"/><circle cx="530.1" cy="244.2" r="0.75" fill="#605850"/><circle cx="315.9" cy="582.8" r="0.55" fill="#505050"/><circle cx="172.3" cy="560.9" r="0.65" fill="#e0d8c8"/><circle cx="56.5" cy="25.2" r="1.0" fill="#505050"/><circle cx="284.4" cy="730.3" r="0.55" fill="#b8b0a0"/><circle cx="231.3" cy="62.6" r="0.55" fill="#e0d8c8"/><circle cx="435.2" cy="528.8" r="0.85" fill="#c8c8b8"/><circle cx="204.5" cy="310.5" r="1.0" fill="#3a5aa0"/><circle cx="653.0" cy="631.0" r="0.55" fill="#908070"/><circle cx="256.5" cy="422.3" r="0.75" fill="#908070"/><circle cx="644.3" cy="148.4" r="0.65" fill="#c8c8b8"/><circle cx="214.2" cy="114.2" r="1.0" fill="#3a5aa0"/><circle cx="284.9" cy="295.1" r="0.65" fill="#505050"/><circle cx="459.5" cy="484.0" r="0.55" fill="#605850"/><circle cx="865.1" cy="76.2" r="0.85" fill="#3a5aa0"/><circle cx="733.8" cy="681.2" r="0.55" fill="#908070"/><circle cx="203.3" cy="37.5" r="1.0" fill="#3a5aa0"/><circle cx="812.0" cy="277.3" r="0.65" fill="#605850"/><circle cx="526.5" cy="577.4" r="0.55" fill="#b8b0a0"/><circle cx="556.5" cy="528.7" r="0.75" fill="#3a5aa0"/><circle cx="32.7" cy="253.3" r="0.55" fill="#3a5aa0"/><circle cx="872.9" cy="28.5" r="0.65" fill="#7a7a7a"/><circle cx="714.8" cy="304.7" r="0.75" fill="#c8c8b8"/><circle cx="542.1" cy="58.1" r="0.55" fill="#605850"/><circle cx="478.4" cy="47.1" r="0.55" fill="#e0d8c8"/><circle cx="579.7" cy="115.1" r="1.0" fill="#b8b0a0"/><circle cx="570.1" cy="296.3" r="0.75" fill="#e0d8c8"/><circle cx="862.7" cy="497.5" r="0.85" fill="#7a7a7a"/><circle cx="272.7" cy="422.1" r="0.75" fill="#e0d8c8"/><circle cx="363.6" cy="643.9" r="0.75" fill="#3a5aa0"/><circle cx="341.1" cy="301.7" r="0.55" fill="#e0d8c8"/><circle cx="787.1" cy="315.7" r="0.55" fill="#e0d8c8"/><circle cx="504.4" cy="271.7" r="0.65" fill="#c8c8b8"/><circle cx="13.0" cy="410.9" r="0.85" fill="#b8b0a0"/><circle cx="500.1" cy="690.8" r="1.0" fill="#c8c8b8"/><circle cx="127.4" cy="211.1" r="1.0" fill="#c8c8b8"/><circle cx="808.0" cy="81.1" r="0.85" fill="#3a5aa0"/><circle cx="263.3" cy="623.8" r="0.55" fill="#605850"/><circle cx="274.6" cy="452.7" r="0.85" fill="#b8b0a0"/><circle cx="789.4" cy="462.2" r="0.65" fill="#3a5aa0"/><circle cx="542.2" cy="458.0" r="0.65" fill="#605850"/><circle cx="159.7" cy="162.5" r="0.85" fill="#505050"/><circle cx="136.6" cy="267.6" r="0.65" fill="#3a5aa0"/><circle cx="847.4" cy="607.7" r="0.65" fill="#7a7a7a"/><circle cx="771.6" cy="627.7" r="0.55" fill="#d8d8d8"/><circle cx="102.8" cy="446.6" r="1.0" fill="#908070"/><circle cx="566.6" cy="229.6" r="0.65" fill="#e0d8c8"/><circle cx="339.8" cy="273.8" r="1.0" fill="#605850"/><circle cx="156.1" cy="2.6" r="0.85" fill="#605850"/><circle cx="205.4" cy="568.9" r="0.85" fill="#c8c8b8"/><circle cx="707.6" cy="298.3" r="0.55" fill="#c8c8b8"/><circle cx="313.0" cy="272.2" r="0.85" fill="#505050"/><circle cx="445.4" cy="30.4" r="0.65" fill="#b8b0a0"/><circle cx="805.0" cy="233.7" r="1.0" fill="#b8b0a0"/><circle cx="47.4" cy="375.4" r="0.85" fill="#c8c8b8"/><circle cx="22.6" cy="49.5" r="1.0" fill="#b8b0a0"/><circle cx="169.1" cy="731.4" r="0.85" fill="#908070"/><circle cx="835.1" cy="682.5" r="0.65" fill="#3a5aa0"/><circle cx="57.2" cy="261.4" r="0.75" fill="#c8c8b8"/><circle cx="282.7" cy="457.1" r="0.85" fill="#c8c8b8"/><circle cx="221.9" cy="718.4" r="0.85" fill="#3a5aa0"/><circle cx="516.7" cy="458.8" r="0.65" fill="#d8d8d8"/><circle cx="325.0" cy="148.2" r="0.85" fill="#c8c8b8"/><circle cx="555.7" cy="207.3" r="0.75" fill="#e0d8c8"/><circle cx="147.3" cy="584.7" r="0.55" fill="#505050"/><circle cx="42.4" cy="639.4" r="0.85" fill="#505050"/><circle cx="455.2" cy="513.1" r="0.55" fill="#908070"/><circle cx="866.8" cy="469.2" r="0.85" fill="#d8d8d8"/><circle cx="231.1" cy="737.9" r="1.0" fill="#c8c8b8"/><circle cx="314.5" cy="569.7" r="0.85" fill="#3a5aa0"/><circle cx="154.3" cy="554.0" r="0.55" fill="#908070"/><circle cx="715.7" cy="189.0" r="1.0" fill="#d8d8d8"/><circle cx="639.9" cy="556.6" r="0.65" fill="#c8c8b8"/><circle cx="254.0" cy="466.1" r="0.85" fill="#505050"/><circle cx="317.9" cy="35.6" r="0.85" fill="#3a5aa0"/><circle cx="534.7" cy="34.0" r="0.55" fill="#7a7a7a"/><circle cx="495.1" cy="226.3" r="1.0" fill="#d8d8d8"/><circle cx="466.3" cy="307.9" r="0.75" fill="#c8c8b8"/><circle cx="178.3" cy="464.8" r="0.85" fill="#c8c8b8"/><circle cx="117.6" cy="697.8" r="0.65" fill="#c8c8b8"/><circle cx="393.6" cy="47.4" r="0.65" fill="#908070"/><circle cx="350.9" cy="196.9" r="0.55" fill="#7a7a7a"/><circle cx="563.0" cy="418.9" r="0.75" fill="#605850"/><circle cx="525.4" cy="385.6" r="0.85" fill="#3a5aa0"/><circle cx="144.1" cy="0.3" r="0.55" fill="#505050"/><circle cx="22.0" cy="138.3" r="0.65" fill="#7a7a7a"/><circle cx="796.0" cy="78.2" r="1.0" fill="#505050"/><circle cx="573.4" cy="147.0" r="0.85" fill="#3a5aa0"/><circle cx="452.4" cy="478.8" r="0.85" fill="#c8c8b8"/><circle cx="444.0" cy="47.5" r="0.55" fill="#605850"/><circle cx="624.5" cy="4.7" r="0.85" fill="#605850"/><circle cx="70.3" cy="488.4" r="0.65" fill="#3a5aa0"/><circle cx="870.0" cy="194.8" r="0.55" fill="#b8b0a0"/><circle cx="292.9" cy="558.5" r="0.75" fill="#7a7a7a"/><circle cx="232.2" cy="412.6" r="0.85" fill="#505050"/><circle cx="848.5" cy="220.2" r="0.65" fill="#b8b0a0"/><circle cx="768.3" cy="11.3" r="0.75" fill="#3a5aa0"/><circle cx="734.8" cy="151.1" r="0.65" fill="#d8d8d8"/><path d="M568.9 475.9 L568.6 479.6 L565.4 480.9 L562.8 479.2 L562.8 476.0 L565.6 475.2Z" fill="#121211"/><path d="M562.0 478.0 A3.5 3.0 0 0 1 568.7 476.3" fill="none" stroke="rgb(84,82,70)" stroke-width="1.0"/><path d="M809.8 338.3 L811.5 339.7 L811.0 342.0 L808.8 342.2 L807.6 340.9 L808.0 339.1Z" fill="#121211"/><path d="M807.0 341.4 A2.5 2.1 0 0 1 811.1 338.6" fill="none" stroke="rgb(97,95,83)" stroke-width="1.0"/><path d="M235.3 211.9 L234.6 213.5 L233.1 212.6 L232.7 211.4 L233.5 210.4 L235.4 209.9Z" fill="#3c3a36" stroke="rgb(134,132,120)" stroke-width="0.8"/><path d="M433.7 129.9 L435.6 129.9 L436.6 131.6 L435.5 132.9 L434.0 132.8 L433.4 131.6Z" fill="#3c3a36" stroke="rgb(133,131,119)" stroke-width="0.8"/><path d="M808.6 352.6 L806.5 353.6 L804.7 352.4 L805.0 350.4 L806.6 348.9 L808.6 350.2Z" fill="#121211"/><path d="M804.4 352.3 A2.4 2.0 0 0 1 808.3 349.7" fill="none" stroke="rgb(125,123,111)" stroke-width="1.0"/><path d="M434.4 101.7 L434.7 99.9 L436.6 99.6 L437.1 101.3 L437.0 102.8 L435.4 102.7Z" fill="#3c3a36" stroke="rgb(125,123,111)" stroke-width="0.8"/><path d="M200.5 357.9 L201.4 359.7 L200.6 361.5 L198.5 361.7 L197.6 359.9 L198.3 357.8Z" fill="#121211"/><path d="M197.7 358.3 A2.3 2.0 0 0 1 201.7 360.6" fill="none" stroke="rgb(111,109,97)" stroke-width="1.0"/><path d="M299.2 134.9 L298.8 136.6 L297.2 136.7 L295.6 135.9 L296.0 133.8 L297.9 134.0Z" fill="#3c3a36" stroke="rgb(134,132,120)" stroke-width="0.8"/><path d="M649.6 527.8 L651.7 525.8 L654.2 527.1 L655.7 530.2 L652.6 532.6 L649.3 531.0Z" fill="#121211"/><path d="M648.5 529.3 A3.6 3.1 0 0 1 655.3 527.1" fill="none" stroke="rgb(89,87,75)" stroke-width="1.0"/><path d="M362.7 508.2 L366.3 508.4 L368.9 510.3 L367.9 513.8 L364.4 514.5 L362.9 511.7Z" fill="#121211"/><path d="M361.9 510.1 A3.7 3.2 0 0 1 369.2 510.9" fill="none" stroke="rgb(76,74,62)" stroke-width="1.0"/><path d="M157.0 256.5 L158.0 255.4 L159.6 255.8 L159.6 257.4 L158.6 258.2 L157.2 257.9Z" fill="#3c3a36" stroke="rgb(130,128,116)" stroke-width="0.8"/><path d="M212.7 184.6 L214.0 185.6 L214.1 187.1 L212.6 188.1 L211.3 187.1 L211.4 185.5Z" fill="#3c3a36" stroke="rgb(113,111,99)" stroke-width="0.8"/><path d="M301.9 469.3 L301.0 472.2 L297.9 471.8 L296.6 469.5 L297.8 467.1 L300.6 466.8Z" fill="#121211"/><path d="M296.0 467.9 A3.5 3.0 0 0 1 302.7 469.6" fill="none" stroke="rgb(82,80,68)" stroke-width="1.0"/><path d="M662.7 184.0 L661.4 185.3 L660.0 185.0 L658.7 183.7 L660.2 182.6 L661.4 183.0Z" fill="#3c3a36" stroke="rgb(130,128,116)" stroke-width="0.8"/><path d="M489.7 566.6 L491.0 569.4 L489.4 572.2 L486.2 571.7 L485.0 569.0 L486.9 566.9Z" fill="#121211"/><path d="M484.8 568.9 A3.2 2.7 0 0 1 491.1 568.4" fill="none" stroke="rgb(89,87,75)" stroke-width="1.0"/><path d="M565.7 434.0 L566.2 436.6 L564.1 438.7 L561.7 437.0 L560.6 434.3 L563.3 432.7Z" fill="#121211"/><path d="M560.5 435.9 A3.2 2.7 0 0 1 566.5 434.1" fill="none" stroke="rgb(80,78,66)" stroke-width="1.0"/><path d="M798.3 323.1 L798.4 325.2 L797.1 326.2 L795.1 326.4 L794.4 324.2 L796.2 323.2Z" fill="#121211"/><path d="M794.7 325.7 A2.2 1.9 0 0 1 798.2 323.2" fill="none" stroke="rgb(110,108,96)" stroke-width="1.0"/><path d="M456.9 480.8 L456.2 478.5 L457.6 477.0 L459.6 477.0 L460.1 478.9 L459.4 481.0Z" fill="#121211"/><path d="M456.0 478.5 A2.4 2.1 0 0 1 460.8 478.2" fill="none" stroke="rgb(101,99,87)" stroke-width="1.0"/><path d="M262.3 475.0 L258.9 475.1 L257.7 471.7 L259.8 469.1 L263.0 469.5 L263.8 472.4Z" fill="#121211"/><path d="M258.0 470.5 A3.4 2.9 0 0 1 264.5 472.5" fill="none" stroke="rgb(92,90,78)" stroke-width="1.0"/><path d="M706.8 186.0 L705.4 186.6 L703.6 185.8 L703.9 183.6 L706.0 182.8 L707.7 184.2Z" fill="#3c3a36" stroke="rgb(121,119,107)" stroke-width="0.8"/><path d="M189.1 375.0 L190.2 375.8 L189.8 377.3 L188.2 377.7 L187.5 376.4 L187.7 375.1Z" fill="#121211"/><path d="M187.5 375.2 A1.6 1.3 0 0 1 190.2 376.7" fill="none" stroke="rgb(125,123,111)" stroke-width="1.0"/><path d="M585.0 114.2 L587.1 115.4 L586.6 117.6 L584.8 118.9 L583.4 117.3 L582.9 115.2Z" fill="#3c3a36" stroke="rgb(109,107,95)" stroke-width="0.8"/><path d="M274.6 134.8 L275.4 136.3 L275.1 137.9 L273.5 137.9 L272.4 136.9 L272.9 135.3Z" fill="#3c3a36" stroke="rgb(121,119,107)" stroke-width="0.8"/><path d="M168.6 274.3 L167.7 272.7 L168.9 271.6 L170.2 271.8 L171.0 272.9 L170.3 274.4Z" fill="#3c3a36" stroke="rgb(133,131,119)" stroke-width="0.8"/><path d="M118.1 265.7 L119.3 266.5 L119.0 268.0 L117.5 268.6 L116.2 267.5 L116.3 265.6Z" fill="#3c3a36" stroke="rgb(99,97,85)" stroke-width="0.8"/><path d="M759.4 432.0 L760.3 430.6 L762.1 430.0 L763.2 431.9 L762.0 433.3 L760.4 433.4Z" fill="#121211"/><path d="M759.1 432.6 A2.2 1.8 0 0 1 762.8 430.7" fill="none" stroke="rgb(104,102,90)" stroke-width="1.0"/><path d="M152.7 486.0 L152.5 488.1 L150.9 489.1 L149.0 488.5 L148.7 486.2 L150.7 485.5Z" fill="#121211"/><path d="M148.8 486.0 A2.4 2.0 0 0 1 153.1 487.8" fill="none" stroke="rgb(102,100,88)" stroke-width="1.0"/><path d="M320.3 546.6 L320.8 543.7 L323.2 543.0 L325.2 544.1 L325.3 546.7 L323.0 547.2Z" fill="#121211"/><path d="M320.4 544.3 A2.8 2.4 0 0 1 325.9 545.2" fill="none" stroke="rgb(82,80,68)" stroke-width="1.0"/><path d="M774.6 356.9 L772.5 358.2 L770.9 356.5 L771.0 354.5 L772.8 353.4 L774.4 354.8Z" fill="#121211"/><path d="M770.3 356.6 A2.6 2.2 0 0 1 774.5 353.9" fill="none" stroke="rgb(126,124,112)" stroke-width="1.0"/><path d="M469.9 116.0 L469.5 114.9 L470.0 113.9 L471.2 113.9 L471.9 115.1 L471.1 116.1Z" fill="#3c3a36" stroke="rgb(132,130,118)" stroke-width="0.8"/><path d="M792.2 273.4 L792.7 272.4 L794.0 272.0 L794.4 273.3 L794.2 274.8 L792.8 274.4Z" fill="#121211"/><path d="M792.0 274.1 A1.5 1.3 0 0 1 794.3 272.2" fill="none" stroke="rgb(106,104,92)" stroke-width="1.0"/><path d="M729.5 272.7 L730.7 272.1 L731.9 272.7 L732.4 274.2 L730.9 274.9 L729.3 274.3Z" fill="#121211"/><path d="M729.3 274.2 A1.7 1.5 0 0 1 732.0 272.0" fill="none" stroke="rgb(115,113,101)" stroke-width="1.0"/><path d="M732.7 356.4 L734.5 356.3 L734.8 358.0 L734.1 359.0 L732.6 359.3 L731.8 357.8Z" fill="#121211"/><path d="M731.8 358.6 A1.8 1.5 0 0 1 734.8 356.7" fill="none" stroke="rgb(98,96,84)" stroke-width="1.0"/><path d="M616.9 500.2 L617.4 502.2 L615.4 502.5 L613.9 501.6 L613.8 499.6 L615.7 498.6Z" fill="#121211"/><path d="M613.4 501.1 A2.2 1.8 0 0 1 617.4 499.9" fill="none" stroke="rgb(86,84,72)" stroke-width="1.0"/><path d="M138.6 277.1 L139.9 275.6 L141.5 276.1 L142.4 277.6 L141.1 278.7 L139.8 278.2Z" fill="#3c3a36" stroke="rgb(132,130,118)" stroke-width="0.8"/><path d="M282.3 155.7 L280.3 155.7 L279.8 154.1 L280.1 152.6 L282.1 152.0 L283.0 153.9Z" fill="#3c3a36" stroke="rgb(135,133,121)" stroke-width="0.8"/><path d="M230.1 394.0 L227.8 393.6 L227.5 391.2 L229.2 389.4 L231.6 390.3 L232.4 392.8Z" fill="#121211"/><path d="M227.4 390.3 A2.8 2.4 0 0 1 232.4 392.7" fill="none" stroke="rgb(121,119,107)" stroke-width="1.0"/><path d="M683.6 195.1 L681.7 194.9 L680.5 193.7 L681.2 192.0 L683.1 191.6 L684.6 193.1Z" fill="#3c3a36" stroke="rgb(124,122,110)" stroke-width="0.8"/><path d="M637.4 186.5 L637.7 187.8 L636.7 188.5 L635.7 188.1 L635.2 187.0 L636.1 185.9Z" fill="#3c3a36" stroke="rgb(92,90,78)" stroke-width="0.8"/><path d="M580.5 123.1 L582.0 124.1 L583.2 126.1 L581.0 126.6 L578.7 126.7 L579.3 124.5Z" fill="#3c3a36" stroke="rgb(105,103,91)" stroke-width="0.8"/><path d="M512.4 121.8 L511.4 120.6 L511.6 119.2 L512.9 118.4 L514.3 119.4 L514.1 121.2Z" fill="#3c3a36" stroke="rgb(126,124,112)" stroke-width="0.8"/><path d="M139.0 238.6 L137.7 238.5 L136.7 237.6 L137.6 236.7 L138.6 236.5 L139.3 237.3Z" fill="#3c3a36" stroke="rgb(123,121,109)" stroke-width="0.8"/><path d="M450.8 130.5 L450.1 129.2 L450.2 127.2 L452.4 127.2 L453.6 128.9 L452.4 130.4Z" fill="#3c3a36" stroke="rgb(111,109,97)" stroke-width="0.8"/><path d="M692.8 492.6 L695.3 494.9 L694.0 498.0 L690.9 498.7 L688.7 496.4 L689.7 493.4Z" fill="#121211"/><path d="M688.4 496.4 A3.5 3.0 0 0 1 694.8 493.9" fill="none" stroke="rgb(79,77,65)" stroke-width="1.0"/><path d="M209.2 520.8 L207.7 522.3 L205.5 521.6 L205.4 519.3 L207.1 518.5 L208.9 518.8Z" fill="#121211"/><path d="M205.3 519.0 A2.3 2.0 0 0 1 209.7 520.4" fill="none" stroke="rgb(113,111,99)" stroke-width="1.0"/><path d="M131.9 310.0 L132.0 308.9 L132.7 307.9 L133.8 308.7 L134.0 309.8 L133.0 310.3Z" fill="#3c3a36" stroke="rgb(106,104,92)" stroke-width="0.8"/><path d="M514.3 450.2 L513.1 447.3 L515.4 445.5 L518.3 445.3 L518.9 448.2 L517.4 450.8Z" fill="#121211"/><path d="M513.2 447.9 A3.1 2.6 0 0 1 519.1 446.7" fill="none" stroke="rgb(80,78,66)" stroke-width="1.0"/><path d="M224.5 224.4 L226.2 223.6 L228.4 223.8 L228.0 225.9 L226.6 226.7 L224.9 226.4Z" fill="#3c3a36" stroke="rgb(100,98,86)" stroke-width="0.8"/><path d="M157.6 246.1 L157.2 243.9 L158.3 242.7 L159.7 242.8 L160.7 244.0 L160.0 245.9Z" fill="#3c3a36" stroke="rgb(96,94,82)" stroke-width="0.8"/><path d="M92.4 398.9 L94.8 398.6 L95.7 400.5 L95.2 402.3 L93.3 402.6 L92.3 401.1Z" fill="#121211"/><path d="M92.2 399.3 A2.4 2.0 0 0 1 96.2 401.6" fill="none" stroke="rgb(128,126,114)" stroke-width="1.0"/><path d="M696.1 192.3 L695.1 190.6 L696.8 189.6 L699.0 189.3 L699.7 191.7 L697.7 192.5Z" fill="#3c3a36" stroke="rgb(99,97,85)" stroke-width="0.8"/><path d="M198.1 276.4 L199.0 275.0 L200.5 275.4 L200.8 276.6 L200.2 277.6 L199.2 277.3Z" fill="#3c3a36" stroke="rgb(132,130,118)" stroke-width="0.8"/><path d="M572.0 532.1 L572.8 529.5 L575.5 529.1 L577.2 531.1 L576.4 533.7 L573.5 534.6Z" fill="#121211"/><path d="M571.4 531.7 A3.2 2.7 0 0 1 577.5 530.4" fill="none" stroke="rgb(85,83,71)" stroke-width="1.0"/><path d="M735.5 180.5 L737.4 181.5 L736.0 183.1 L734.4 184.1 L733.2 182.4 L733.5 180.3Z" fill="#3c3a36" stroke="rgb(112,110,98)" stroke-width="0.8"/><path d="M479.9 97.8 L479.6 99.5 L478.0 98.7 L477.6 97.5 L478.4 96.6 L479.7 96.6Z" fill="#3c3a36" stroke="rgb(132,130,118)" stroke-width="0.8"/><path d="M110.2 455.1 L108.5 454.6 L108.7 452.8 L110.2 451.5 L111.6 452.7 L111.6 454.4Z" fill="#121211"/><path d="M108.5 452.4 A2.1 1.8 0 0 1 112.2 454.2" fill="none" stroke="rgb(90,88,76)" stroke-width="1.0"/><path d="M152.9 408.9 L155.1 408.3 L156.3 410.1 L155.9 412.2 L153.9 412.1 L152.3 411.0Z" fill="#121211"/><path d="M152.7 409.2 A2.2 1.8 0 0 1 156.5 411.2" fill="none" stroke="rgb(91,89,77)" stroke-width="1.0"/><path d="M726.6 245.4 L725.5 244.9 L725.6 243.7 L726.4 242.5 L728.0 243.2 L727.5 244.6Z" fill="#3c3a36" stroke="rgb(102,100,88)" stroke-width="0.8"/><path d="M228.1 193.2 L228.3 191.2 L230.1 191.1 L231.3 192.0 L230.8 193.3 L229.7 194.0Z" fill="#3c3a36" stroke="rgb(113,111,99)" stroke-width="0.8"/><path d="M416.3 478.6 L413.9 478.6 L412.7 476.3 L414.2 474.3 L416.7 474.4 L417.2 476.6Z" fill="#121211"/><path d="M412.9 476.0 A2.5 2.1 0 0 1 417.7 476.1" fill="none" stroke="rgb(87,85,73)" stroke-width="1.0"/><path d="M677.7 466.1 L676.4 467.9 L674.0 468.0 L672.9 465.8 L674.4 464.0 L676.5 464.3Z" fill="#121211"/><path d="M673.1 466.5 A2.4 2.0 0 0 1 677.4 464.7" fill="none" stroke="rgb(81,79,67)" stroke-width="1.0"/><path d="M402.7 542.0 L405.0 542.9 L404.4 545.3 L402.4 546.6 L399.8 545.4 L400.9 543.0Z" fill="#121211"/><path d="M399.8 543.5 A2.8 2.4 0 0 1 405.3 543.7" fill="none" stroke="rgb(73,71,59)" stroke-width="1.0"/><path d="M323.8 138.1 L323.0 139.5 L322.0 140.2 L321.0 139.4 L320.6 137.9 L322.3 137.0Z" fill="#3c3a36" stroke="rgb(129,127,115)" stroke-width="0.8"/><path d="M478.3 103.0 L476.5 102.1 L477.3 100.1 L479.0 100.1 L481.0 100.9 L479.8 102.6Z" fill="#3c3a36" stroke="rgb(116,114,102)" stroke-width="0.8"/><path d="M465.8 457.1 L468.2 456.2 L470.6 456.2 L471.0 458.9 L468.9 460.1 L466.4 459.8Z" fill="#121211"/><path d="M465.9 457.8 A2.6 2.2 0 0 1 471.0 457.3" fill="none" stroke="rgb(75,73,61)" stroke-width="1.0"/><path d="M223.4 196.1 L222.8 195.0 L223.5 193.9 L225.0 193.9 L225.7 195.3 L224.8 196.8Z" fill="#3c3a36" stroke="rgb(101,99,87)" stroke-width="0.8"/><path d="M648.1 380.8 L646.3 379.9 L646.1 378.1 L647.5 376.5 L649.0 377.8 L649.7 379.5Z" fill="#121211"/><path d="M645.7 379.4 A2.1 1.8 0 0 1 649.5 377.5" fill="none" stroke="rgb(97,95,83)" stroke-width="1.0"/><path d="M306.5 143.5 L306.4 144.5 L305.4 144.7 L304.3 143.9 L304.8 142.7 L306.2 142.3Z" fill="#3c3a36" stroke="rgb(118,116,104)" stroke-width="0.8"/><path d="M89.7 290.1 L90.8 289.5 L92.3 289.6 L92.3 291.2 L91.2 292.5 L89.7 291.7Z" fill="#3c3a36" stroke="rgb(105,103,91)" stroke-width="0.8"/><path d="M692.2 279.5 L690.8 278.9 L690.2 277.6 L691.2 276.5 L693.0 276.5 L693.2 278.3Z" fill="#121211"/><path d="M690.2 278.7 A1.7 1.5 0 0 1 692.9 276.7" fill="none" stroke="rgb(97,95,83)" stroke-width="1.0"/><path d="M806.7 372.2 L807.3 373.6 L806.2 374.7 L804.7 374.4 L804.1 373.0 L805.3 372.2Z" fill="#121211"/><path d="M804.2 373.9 A1.6 1.3 0 0 1 806.8 372.2" fill="none" stroke="rgb(125,123,111)" stroke-width="1.0"/><path d="M784.0 238.0 L785.3 237.7 L786.4 238.3 L786.6 239.6 L785.2 240.4 L784.1 239.4Z" fill="#3c3a36" stroke="rgb(131,129,117)" stroke-width="0.8"/><path d="M417.0 556.1 L419.3 556.3 L420.4 558.7 L418.6 560.5 L415.8 560.5 L415.4 557.8Z" fill="#121211"/><path d="M414.9 557.7 A2.9 2.4 0 0 1 420.6 557.8" fill="none" stroke="rgb(79,77,65)" stroke-width="1.0"/><path d="M101.7 413.0 L99.9 413.0 L99.6 411.2 L100.4 409.7 L101.9 410.4 L103.0 411.7Z" fill="#121211"/><path d="M99.7 410.3 A1.8 1.5 0 0 1 102.8 412.0" fill="none" stroke="rgb(89,87,75)" stroke-width="1.0"/><path d="M614.4 160.3 L615.3 159.7 L616.5 159.8 L616.6 161.1 L615.8 162.1 L614.7 161.4Z" fill="#3c3a36" stroke="rgb(93,91,79)" stroke-width="0.8"/><path d="M440.9 117.0 L440.9 118.8 L439.2 119.0 L438.0 118.3 L437.8 116.5 L439.5 116.1Z" fill="#3c3a36" stroke="rgb(135,133,121)" stroke-width="0.8"/><path d="M553.9 144.7 L553.3 146.6 L551.1 146.7 L549.9 144.8 L551.2 143.1 L552.9 143.4Z" fill="#3c3a36" stroke="rgb(129,127,115)" stroke-width="0.8"/><path d="M582.6 142.1 L582.8 143.3 L582.2 144.2 L581.1 144.1 L580.5 143.1 L581.2 142.0Z" fill="#3c3a36" stroke="rgb(118,116,104)" stroke-width="0.8"/><path d="M274.8 192.8 L274.1 191.0 L275.5 189.2 L277.6 190.2 L278.0 192.1 L276.5 193.3Z" fill="#3c3a36" stroke="rgb(124,122,110)" stroke-width="0.8"/><path d="M540.4 132.0 L538.5 131.7 L538.4 129.5 L540.2 128.3 L541.4 129.8 L541.6 131.2Z" fill="#3c3a36" stroke="rgb(134,132,120)" stroke-width="0.8"/><path d="M644.6 170.4 L646.0 169.6 L647.2 170.8 L646.6 172.2 L645.3 172.7 L644.6 171.6Z" fill="#3c3a36" stroke="rgb(115,113,101)" stroke-width="0.8"/><path d="M283.3 161.9 L282.2 161.5 L282.0 160.2 L283.0 159.2 L283.9 160.2 L284.1 161.1Z" fill="#3c3a36" stroke="rgb(91,89,77)" stroke-width="0.8"/><path d="M192.1 436.4 L194.2 437.3 L195.1 439.1 L193.8 440.7 L191.9 440.2 L191.0 438.4Z" fill="#121211"/><path d="M190.9 437.4 A2.5 2.1 0 0 1 195.4 439.3" fill="none" stroke="rgb(116,114,102)" stroke-width="1.0"/><path d="M263.0 567.6 L265.2 565.9 L268.0 565.6 L268.6 568.4 L266.8 570.1 L264.3 570.2Z" fill="#121211"/><path d="M263.2 566.9 A3.0 2.5 0 0 1 269.0 568.2" fill="none" stroke="rgb(107,105,93)" stroke-width="1.0"/><path d="M705.4 420.9 L704.6 423.3 L702.0 422.9 L700.4 420.6 L702.3 418.6 L704.6 419.0Z" fill="#121211"/><path d="M700.7 421.6 A2.8 2.4 0 0 1 705.7 419.1" fill="none" stroke="rgb(105,103,91)" stroke-width="1.0"/><path d="M678.4 277.1 L680.3 275.7 L682.2 276.9 L682.1 278.8 L680.7 279.8 L678.8 279.3Z" fill="#121211"/><path d="M678.5 279.1 A2.3 1.9 0 0 1 682.1 276.4" fill="none" stroke="rgb(96,94,82)" stroke-width="1.0"/><path d="M650.2 456.1 L649.9 457.9 L648.1 458.4 L646.5 457.3 L647.0 455.4 L648.9 454.7Z" fill="#121211"/><path d="M646.5 457.1 A2.0 1.7 0 0 1 650.2 455.6" fill="none" stroke="rgb(75,73,61)" stroke-width="1.0"/><path d="M200.8 253.6 L199.8 255.0 L198.1 254.7 L198.3 253.1 L198.9 252.3 L200.3 252.2Z" fill="#3c3a36" stroke="rgb(101,99,87)" stroke-width="0.8"/><path d="M708.7 292.4 L707.6 293.7 L705.8 293.2 L705.4 291.4 L706.6 289.8 L708.4 290.7Z" fill="#121211"/><path d="M705.1 292.9 A2.3 2.0 0 0 1 708.7 290.2" fill="none" stroke="rgb(105,103,91)" stroke-width="1.0"/><path d="M797.9 307.0 L796.2 306.1 L796.8 304.5 L797.9 303.4 L799.4 304.3 L799.3 306.0Z" fill="#121211"/><path d="M796.3 305.9 A1.8 1.5 0 0 1 799.1 303.8" fill="none" stroke="rgb(110,108,96)" stroke-width="1.0"/><path d="M203.3 446.7 L201.3 448.0 L199.6 446.5 L198.8 443.9 L201.5 443.0 L203.6 444.3Z" fill="#121211"/><path d="M198.9 443.9 A3.0 2.5 0 0 1 204.3 446.2" fill="none" stroke="rgb(80,78,66)" stroke-width="1.0"/><path d="M203.8 172.2 L205.2 170.9 L206.9 171.7 L207.4 173.5 L205.9 174.6 L204.5 173.8Z" fill="#3c3a36" stroke="rgb(110,108,96)" stroke-width="0.8"/><path d="M506.5 129.8 L507.7 128.9 L509.0 129.3 L509.6 130.6 L508.3 131.3 L507.2 131.0Z" fill="#3c3a36" stroke="rgb(96,94,82)" stroke-width="0.8"/><path d="M522.3 494.1 L522.6 491.7 L525.2 491.5 L527.0 493.4 L526.1 496.0 L523.4 496.1Z" fill="#121211"/><path d="M521.7 493.8 A2.6 2.2 0 0 1 526.7 493.0" fill="none" stroke="rgb(89,87,75)" stroke-width="1.0"/><path d="M110.6 479.5 L108.4 480.1 L107.4 478.4 L107.3 476.3 L109.6 475.8 L111.2 477.4Z" fill="#121211"/><path d="M107.1 476.6 A2.3 1.9 0 0 1 111.2 478.5" fill="none" stroke="rgb(99,97,85)" stroke-width="1.0"/><path d="M775.3 328.9 L776.7 329.3 L776.8 330.6 L775.9 331.4 L774.5 331.4 L774.6 330.0Z" fill="#121211"/><path d="M774.3 330.9 A1.5 1.2 0 0 1 776.7 329.3" fill="none" stroke="rgb(93,91,79)" stroke-width="1.0"/><path d="M724.1 181.2 L725.2 181.4 L725.8 182.6 L724.6 183.3 L723.4 182.9 L722.8 181.6Z" fill="#3c3a36" stroke="rgb(125,123,111)" stroke-width="0.8"/><path d="M133.5 412.7 L133.4 414.8 L131.4 416.1 L129.4 414.5 L129.5 411.9 L131.9 411.7Z" fill="#121211"/><path d="M129.7 411.9 A2.5 2.2 0 0 1 134.1 414.3" fill="none" stroke="rgb(113,111,99)" stroke-width="1.0"/><path d="M330.3 141.2 L330.6 142.4 L329.5 143.1 L328.0 142.8 L328.3 141.3 L329.3 140.2Z" fill="#3c3a36" stroke="rgb(135,133,121)" stroke-width="0.8"/><path d="M190.7 475.8 L192.4 476.5 L192.8 478.5 L191.0 479.4 L189.6 478.5 L189.3 476.8Z" fill="#121211"/><path d="M189.2 476.6 A2.0 1.7 0 0 1 192.8 478.0" fill="none" stroke="rgb(108,106,94)" stroke-width="1.0"/><path d="M81.0 354.8 L81.2 356.6 L79.4 357.3 L77.7 356.2 L78.0 354.2 L79.8 353.6Z" fill="#121211"/><path d="M78.2 354.1 A1.9 1.6 0 0 1 81.4 356.2" fill="none" stroke="rgb(121,119,107)" stroke-width="1.0"/><path d="M291.8 131.2 L291.3 130.0 L291.5 128.7 L292.8 128.9 L293.7 129.8 L293.2 131.2Z" fill="#3c3a36" stroke="rgb(121,119,107)" stroke-width="0.8"/><path d="M222.8 217.2 L222.4 218.5 L221.1 219.1 L219.9 218.2 L220.1 216.5 L221.8 216.1Z" fill="#3c3a36" stroke="rgb(114,112,100)" stroke-width="0.8"/><path d="M111.9 357.3 L112.5 359.2 L111.4 360.4 L109.5 360.8 L108.6 358.8 L109.9 357.3Z" fill="#121211"/><path d="M109.2 357.6 A2.0 1.7 0 0 1 112.6 359.8" fill="none" stroke="rgb(100,98,86)" stroke-width="1.0"/><path d="M578.2 435.8 L577.7 437.7 L575.8 437.9 L574.1 436.7 L575.1 434.9 L577.0 433.9Z" fill="#121211"/><path d="M573.9 436.5 A2.4 2.1 0 0 1 578.5 435.1" fill="none" stroke="rgb(80,78,66)" stroke-width="1.0"/><path d="M138.9 374.0 L140.1 373.9 L140.6 375.1 L139.7 375.9 L138.5 376.0 L138.0 374.7Z" fill="#121211"/><path d="M138.3 374.0 A1.4 1.2 0 0 1 140.6 375.4" fill="none" stroke="rgb(120,118,106)" stroke-width="1.0"/><path d="M133.3 490.8 L134.3 493.1 L133.3 495.6 L130.8 494.8 L129.2 492.9 L130.9 491.1Z" fill="#121211"/><path d="M129.4 491.3 A3.0 2.6 0 0 1 134.9 493.7" fill="none" stroke="rgb(87,85,73)" stroke-width="1.0"/><path d="M647.0 170.9 L646.9 172.2 L645.5 172.6 L644.7 171.5 L644.9 170.1 L646.2 170.2Z" fill="#3c3a36" stroke="rgb(95,93,81)" stroke-width="0.8"/><path d="M85.5 439.8 L84.7 437.7 L85.5 435.7 L87.9 435.5 L88.7 437.7 L87.8 439.8Z" fill="#121211"/><path d="M84.7 436.2 A2.4 2.0 0 0 1 88.9 438.4" fill="none" stroke="rgb(107,105,93)" stroke-width="1.0"/><path d="M397.2 541.7 L394.4 542.4 L392.0 541.6 L392.2 539.0 L394.3 537.4 L397.3 538.3Z" fill="#121211"/><path d="M391.2 539.4 A3.2 2.7 0 0 1 397.5 539.8" fill="none" stroke="rgb(94,92,80)" stroke-width="1.0"/><path d="M83.9 345.7 L85.1 345.9 L85.2 347.2 L84.4 348.1 L83.3 347.5 L83.1 346.5Z" fill="#3c3a36" stroke="rgb(121,119,107)" stroke-width="0.8"/><path d="M703.3 495.2 L701.4 496.1 L699.7 494.8 L700.4 492.9 L701.9 492.6 L703.2 493.4Z" fill="#121211"/><path d="M699.8 494.4 A2.0 1.7 0 0 1 703.4 492.9" fill="none" stroke="rgb(84,82,70)" stroke-width="1.0"/><path d="M157.6 474.0 L155.6 474.2 L153.9 472.8 L154.9 470.7 L157.3 469.8 L158.9 472.0Z" fill="#121211"/><path d="M154.2 471.0 A2.5 2.2 0 0 1 158.8 473.0" fill="none" stroke="rgb(105,103,91)" stroke-width="1.0"/><path d="M173.4 362.1 L174.7 361.8 L175.5 362.7 L175.3 363.8 L174.3 364.1 L173.2 363.6Z" fill="#121211"/><path d="M173.4 362.2 A1.4 1.2 0 0 1 175.9 363.6" fill="none" stroke="rgb(104,102,90)" stroke-width="1.0"/><path d="M615.6 173.6 L613.5 173.1 L613.1 171.4 L613.5 169.3 L615.8 169.6 L616.7 171.6Z" fill="#3c3a36" stroke="rgb(91,89,77)" stroke-width="0.8"/><path d="M137.6 400.6 L139.0 399.5 L140.6 399.7 L141.3 401.4 L139.9 402.3 L138.1 402.5Z" fill="#121211"/><path d="M137.9 399.7 A2.0 1.7 0 0 1 141.4 401.6" fill="none" stroke="rgb(108,106,94)" stroke-width="1.0"/><path d="M365.5 137.8 L365.3 136.1 L366.9 135.8 L368.6 136.1 L368.3 138.0 L366.8 138.9Z" fill="#3c3a36" stroke="rgb(120,118,106)" stroke-width="0.8"/><path d="M575.8 145.7 L573.9 145.9 L572.4 144.5 L573.7 142.9 L575.2 142.8 L576.4 144.0Z" fill="#3c3a36" stroke="rgb(124,122,110)" stroke-width="0.8"/><path d="M442.4 485.4 L439.3 484.0 L439.3 481.0 L441.2 478.7 L444.3 479.7 L444.3 482.8Z" fill="#121211"/><path d="M438.4 481.4 A3.4 2.9 0 0 1 445.1 481.2" fill="none" stroke="rgb(76,74,62)" stroke-width="1.0"/><path d="M148.0 412.3 L148.4 414.7 L146.2 415.9 L144.0 414.9 L144.5 412.7 L146.0 411.3Z" fill="#121211"/><path d="M144.2 412.0 A2.4 2.1 0 0 1 148.4 414.2" fill="none" stroke="rgb(114,112,100)" stroke-width="1.0"/><path d="M92.1 370.3 L91.6 372.0 L89.9 372.6 L88.6 371.2 L88.9 369.2 L90.8 369.3Z" fill="#121211"/><path d="M88.9 369.4 A2.0 1.7 0 0 1 92.2 371.5" fill="none" stroke="rgb(133,131,119)" stroke-width="1.0"/><path d="M190.2 358.5 L190.1 357.0 L191.3 355.5 L193.4 356.3 L193.2 358.5 L191.6 359.3Z" fill="#121211"/><path d="M189.8 356.2 A2.2 1.8 0 0 1 193.5 358.4" fill="none" stroke="rgb(103,101,89)" stroke-width="1.0"/><path d="M700.4 259.0 L699.3 257.3 L700.7 255.6 L702.7 255.9 L702.9 257.8 L702.1 259.1Z" fill="#121211"/><path d="M699.6 258.6 A2.1 1.8 0 0 1 702.8 256.0" fill="none" stroke="rgb(96,94,82)" stroke-width="1.0"/><path d="M486.9 516.4 L488.4 518.4 L487.4 520.7 L484.8 521.2 L483.8 518.9 L484.1 516.2Z" fill="#121211"/><path d="M483.0 518.4 A2.9 2.5 0 0 1 488.7 517.9" fill="none" stroke="rgb(81,79,67)" stroke-width="1.0"/><path d="M472.6 497.9 L473.6 494.4 L476.7 493.8 L479.1 495.4 L478.5 498.3 L475.7 500.6Z" fill="#121211"/><path d="M472.4 496.2 A3.8 3.2 0 0 1 479.9 495.5" fill="none" stroke="rgb(70,68,56)" stroke-width="1.0"/><path d="M652.2 149.2 L650.4 148.0 L650.9 146.3 L652.2 145.3 L653.2 146.4 L654.1 148.1Z" fill="#3c3a36" stroke="rgb(128,126,114)" stroke-width="0.8"/><path d="M140.9 375.1 L139.1 376.4 L137.1 375.3 L136.8 373.0 L138.8 371.6 L140.8 372.9Z" fill="#121211"/><path d="M137.2 372.6 A2.3 2.0 0 0 1 141.1 374.9" fill="none" stroke="rgb(90,88,76)" stroke-width="1.0"/><path d="M187.5 394.9 L188.6 393.7 L190.4 393.7 L190.7 395.4 L189.9 397.1 L187.9 396.7Z" fill="#121211"/><path d="M187.5 393.9 A2.0 1.7 0 0 1 191.1 395.7" fill="none" stroke="rgb(105,103,91)" stroke-width="1.0"/><path d="M311.8 509.1 L312.6 507.3 L314.9 506.5 L316.2 508.7 L315.2 510.9 L312.8 511.2Z" fill="#121211"/><path d="M311.4 508.0 A2.5 2.2 0 0 1 316.3 509.0" fill="none" stroke="rgb(83,81,69)" stroke-width="1.0"/><path d="M725.0 267.3 L723.1 267.8 L721.8 266.2 L722.9 264.7 L724.3 264.4 L725.5 265.5Z" fill="#121211"/><path d="M722.1 266.8 A1.9 1.7 0 0 1 725.1 264.4" fill="none" stroke="rgb(116,114,102)" stroke-width="1.0"/><path d="M200.3 261.8 L198.9 260.4 L198.9 259.0 L200.0 257.1 L201.6 258.6 L201.7 260.3Z" fill="#3c3a36" stroke="rgb(126,124,112)" stroke-width="0.8"/><path d="M582.8 147.6 L581.8 145.8 L582.7 143.9 L584.9 144.0 L585.7 145.8 L585.0 147.8Z" fill="#3c3a36" stroke="rgb(130,128,116)" stroke-width="0.8"/><path d="M551.8 99.6 L551.8 100.9 L550.8 101.7 L549.4 101.5 L549.0 99.9 L550.4 99.1Z" fill="#3c3a36" stroke="rgb(97,95,83)" stroke-width="0.8"/><path d="M135.6 273.4 L134.2 273.0 L134.0 271.8 L134.6 271.0 L135.7 271.0 L136.6 272.2Z" fill="#3c3a36" stroke="rgb(134,132,120)" stroke-width="0.8"/><path d="M292.3 143.7 L290.6 142.6 L291.8 140.7 L293.9 140.3 L295.1 142.2 L293.9 143.7Z" fill="#3c3a36" stroke="rgb(132,130,118)" stroke-width="0.8"/><path d="M682.5 285.8 L681.2 284.2 L681.4 282.3 L683.3 281.9 L684.7 283.0 L684.2 284.8Z" fill="#121211"/><path d="M680.7 284.7 A2.5 2.1 0 0 1 684.6 281.8" fill="none" stroke="rgb(107,105,93)" stroke-width="1.0"/><path d="M765.9 402.2 L765.1 401.0 L765.0 399.8 L766.3 399.4 L767.4 400.1 L767.5 401.6Z" fill="#121211"/><path d="M764.6 401.2 A1.7 1.4 0 0 1 767.4 399.5" fill="none" stroke="rgb(110,108,96)" stroke-width="1.0"/><path d="M744.7 317.3 L742.2 317.1 L741.8 315.0 L742.5 313.1 L744.9 313.1 L746.2 315.2Z" fill="#121211"/><path d="M741.4 316.1 A2.4 2.0 0 0 1 745.2 313.4" fill="none" stroke="rgb(113,111,99)" stroke-width="1.0"/><path d="M165.0 520.0 L166.9 519.8 L168.3 521.3 L167.4 523.4 L165.3 523.0 L164.5 521.6Z" fill="#121211"/><path d="M164.1 520.4 A2.2 1.9 0 0 1 168.3 521.9" fill="none" stroke="rgb(79,77,65)" stroke-width="1.0"/><path d="M539.5 510.5 L538.1 508.1 L540.0 506.5 L542.5 505.9 L543.4 508.5 L541.9 510.2Z" fill="#121211"/><path d="M538.2 508.3 A2.7 2.3 0 0 1 543.4 507.3" fill="none" stroke="rgb(82,80,68)" stroke-width="1.0"/><path d="M166.8 211.9 L168.0 211.9 L168.8 212.8 L168.3 213.9 L167.1 213.9 L166.4 213.1Z" fill="#3c3a36" stroke="rgb(112,110,98)" stroke-width="0.8"/><path d="M422.5 486.6 L421.9 489.6 L418.8 489.8 L416.1 487.5 L417.5 484.1 L421.1 483.9Z" fill="#121211"/><path d="M416.5 486.3 A3.5 3.0 0 0 1 423.3 486.4" fill="none" stroke="rgb(73,71,59)" stroke-width="1.0"/><path d="M464.0 126.4 L464.1 128.6 L462.3 129.9 L460.6 128.8 L460.6 127.0 L461.9 125.6Z" fill="#3c3a36" stroke="rgb(118,116,104)" stroke-width="0.8"/><path d="M733.7 178.8 L734.9 179.3 L734.2 180.4 L733.1 181.3 L731.9 180.2 L732.4 178.7Z" fill="#3c3a36" stroke="rgb(108,106,94)" stroke-width="0.8"/><path d="M668.2 179.6 L667.5 181.4 L665.7 180.5 L665.1 179.0 L666.3 177.6 L668.1 177.9Z" fill="#3c3a36" stroke="rgb(120,118,106)" stroke-width="0.8"/><path d="M403.3 580.0 L404.8 576.7 L408.4 576.0 L409.6 579.1 L408.8 581.7 L406.1 581.8Z" fill="#121211"/><path d="M403.6 578.8 A3.5 2.9 0 0 1 410.4 579.0" fill="none" stroke="rgb(103,101,89)" stroke-width="1.0"/><path d="M797.0 300.9 L798.6 300.7 L799.5 301.6 L799.7 303.1 L798.1 303.8 L796.8 302.6Z" fill="#121211"/><path d="M796.9 302.8 A1.7 1.4 0 0 1 799.5 300.8" fill="none" stroke="rgb(101,99,87)" stroke-width="1.0"/><path d="M779.1 360.3 L776.9 360.5 L775.6 358.9 L776.6 357.4 L778.4 356.5 L779.2 358.3Z" fill="#121211"/><path d="M775.7 359.4 A2.1 1.8 0 0 1 779.2 357.2" fill="none" stroke="rgb(103,101,89)" stroke-width="1.0"/><path d="M415.9 120.9 L417.5 120.9 L418.3 122.0 L418.1 123.7 L416.4 123.8 L415.7 122.4Z" fill="#3c3a36" stroke="rgb(108,106,94)" stroke-width="0.8"/><path d="M251.4 206.9 L253.0 205.8 L254.1 207.1 L255.0 208.7 L253.2 209.0 L252.0 208.5Z" fill="#3c3a36" stroke="rgb(97,95,83)" stroke-width="0.8"/><path d="M790.6 238.1 L789.4 237.7 L789.3 236.5 L790.1 235.4 L791.3 236.2 L791.7 237.4Z" fill="#3c3a36" stroke="rgb(114,112,100)" stroke-width="0.8"/><path d="M673.3 223.4 L672.6 224.8 L670.9 225.8 L670.4 223.9 L670.6 222.4 L672.6 221.3Z" fill="#3c3a36" stroke="rgb(134,132,120)" stroke-width="0.8"/><path d="M536.8 435.4 L535.4 433.9 L536.5 432.1 L538.5 432.0 L539.8 433.7 L539.1 436.1Z" fill="#121211"/><path d="M535.1 434.0 A2.5 2.1 0 0 1 539.9 432.8" fill="none" stroke="rgb(103,101,89)" stroke-width="1.0"/><path d="M405.8 132.8 L404.9 131.4 L406.3 130.0 L408.2 130.6 L408.7 132.6 L407.1 133.7Z" fill="#3c3a36" stroke="rgb(109,107,95)" stroke-width="0.8"/><path d="M489.5 516.6 L487.8 519.6 L484.9 519.1 L482.8 517.0 L484.7 514.8 L487.5 513.9Z" fill="#121211"/><path d="M482.7 516.6 A3.4 2.9 0 0 1 489.2 516.0" fill="none" stroke="rgb(93,91,79)" stroke-width="1.0"/><path d="M191.9 471.4 L192.6 469.0 L194.9 468.2 L196.6 470.1 L195.9 472.3 L193.7 473.1Z" fill="#121211"/><path d="M192.0 469.3 A2.7 2.3 0 0 1 197.0 471.3" fill="none" stroke="rgb(96,94,82)" stroke-width="1.0"/><path d="M209.6 527.4 L207.4 528.3 L205.4 527.7 L205.0 525.4 L207.0 524.6 L209.2 524.9Z" fill="#121211"/><path d="M205.1 525.2 A2.4 2.0 0 0 1 209.6 526.7" fill="none" stroke="rgb(108,106,94)" stroke-width="1.0"/><path d="M232.7 158.4 L233.1 159.9 L232.5 161.1 L231.0 161.0 L230.0 159.7 L231.3 158.9Z" fill="#3c3a36" stroke="rgb(125,123,111)" stroke-width="0.8"/><path d="M426.9 126.4 L426.8 125.1 L427.4 123.9 L428.5 124.5 L429.5 125.6 L428.3 126.8Z" fill="#3c3a36" stroke="rgb(100,98,86)" stroke-width="0.8"/><path d="M211.8 171.8 L212.3 173.1 L211.4 174.4 L210.0 173.9 L209.6 172.6 L210.4 171.3Z" fill="#3c3a36" stroke="rgb(105,103,91)" stroke-width="0.8"/><path d="M157.9 322.0 L157.1 320.9 L157.1 319.5 L158.6 319.1 L159.4 320.3 L159.3 321.6Z" fill="#121211"/><path d="M157.1 319.5 A1.6 1.4 0 0 1 159.7 321.3" fill="none" stroke="rgb(120,118,106)" stroke-width="1.0"/><path d="M693.1 271.7 L695.0 271.0 L696.0 272.6 L695.8 274.4 L694.1 274.5 L692.8 273.5Z" fill="#121211"/><path d="M692.6 274.0 A2.1 1.8 0 0 1 695.8 271.5" fill="none" stroke="rgb(112,110,98)" stroke-width="1.0"/><path d="M189.6 245.2 L188.0 244.4 L188.0 242.4 L189.8 241.4 L191.0 242.7 L191.0 244.3Z" fill="#3c3a36" stroke="rgb(115,113,101)" stroke-width="0.8"/><path d="M700.3 226.2 L701.8 227.1 L702.9 228.8 L701.2 230.6 L699.3 229.3 L698.7 227.3Z" fill="#3c3a36" stroke="rgb(126,124,112)" stroke-width="0.8"/><path d="M452.5 482.4 L451.0 485.2 L448.4 485.0 L446.8 483.2 L447.2 480.3 L450.1 480.7Z" fill="#121211"/><path d="M446.1 482.4 A3.2 2.7 0 0 1 452.3 482.2" fill="none" stroke="rgb(74,72,60)" stroke-width="1.0"/><path d="M172.9 412.1 L174.6 413.2 L174.3 415.6 L171.8 416.1 L170.4 414.4 L170.5 411.9Z" fill="#121211"/><path d="M170.5 412.4 A2.4 2.0 0 0 1 174.7 414.5" fill="none" stroke="rgb(122,120,108)" stroke-width="1.0"/><path d="M488.3 472.9 L487.1 471.0 L488.4 469.3 L490.6 468.6 L491.8 470.9 L490.3 472.5Z" fill="#121211"/><path d="M486.8 470.8 A2.6 2.2 0 0 1 491.8 470.2" fill="none" stroke="rgb(101,99,87)" stroke-width="1.0"/><path d="M91.4 385.1 L92.2 386.3 L91.8 388.0 L90.0 387.9 L88.9 386.5 L89.7 384.8Z" fill="#121211"/><path d="M89.3 385.2 A1.8 1.5 0 0 1 92.4 387.0" fill="none" stroke="rgb(100,98,86)" stroke-width="1.0"/><path d="M224.9 208.5 L222.8 208.2 L222.5 206.3 L223.3 204.7 L225.4 204.7 L225.9 206.7Z" fill="#3c3a36" stroke="rgb(99,97,85)" stroke-width="0.8"/><path d="M177.0 521.2 L176.5 519.4 L178.0 518.2 L179.6 518.8 L180.0 520.4 L178.8 522.0Z" fill="#121211"/><path d="M176.5 518.9 A2.2 1.8 0 0 1 180.5 520.3" fill="none" stroke="rgb(89,87,75)" stroke-width="1.0"/><path d="M728.5 202.7 L728.5 203.9 L727.4 204.6 L726.2 203.7 L726.3 202.3 L727.6 202.3Z" fill="#3c3a36" stroke="rgb(122,120,108)" stroke-width="0.8"/><path d="M787.1 403.7 L787.3 402.2 L788.8 401.1 L790.2 402.4 L789.8 404.1 L788.2 405.0Z" fill="#121211"/><path d="M786.7 403.8 A1.9 1.6 0 0 1 790.0 401.9" fill="none" stroke="rgb(83,81,69)" stroke-width="1.0"/><path d="M581.6 150.0 L582.2 151.7 L582.2 153.6 L579.9 153.9 L579.3 152.0 L579.8 150.5Z" fill="#3c3a36" stroke="rgb(97,95,83)" stroke-width="0.8"/><path d="M352.8 123.8 L350.9 123.8 L350.1 122.3 L350.9 120.8 L352.4 121.0 L353.0 122.1Z" fill="#3c3a36" stroke="rgb(127,125,113)" stroke-width="0.8"/><path d="M698.6 327.2 L698.7 325.0 L700.7 324.6 L702.1 325.5 L702.2 327.2 L700.5 328.4Z" fill="#121211"/><path d="M698.7 327.1 A2.1 1.8 0 0 1 702.2 324.8" fill="none" stroke="rgb(113,111,99)" stroke-width="1.0"/><path d="M665.2 146.2 L663.9 145.0 L664.8 143.5 L666.6 142.5 L667.8 144.4 L666.7 145.9Z" fill="#3c3a36" stroke="rgb(122,120,108)" stroke-width="0.8"/><path d="M713.0 244.3 L714.4 244.6 L715.0 245.5 L714.5 246.5 L713.3 246.7 L712.5 245.7Z" fill="#3c3a36" stroke="rgb(98,96,84)" stroke-width="0.8"/><path d="M721.3 320.2 L722.7 320.4 L723.7 321.4 L722.8 322.6 L721.4 323.1 L720.3 321.7Z" fill="#121211"/><path d="M720.5 322.3 A1.8 1.5 0 0 1 723.4 320.3" fill="none" stroke="rgb(113,111,99)" stroke-width="1.0"/><path d="M651.6 185.0 L653.1 184.7 L654.3 185.1 L654.5 186.7 L653.1 187.5 L651.5 186.7Z" fill="#3c3a36" stroke="rgb(103,101,89)" stroke-width="0.8"/><path d="M182.4 256.3 L181.9 257.1 L180.9 257.2 L180.5 256.3 L180.9 255.3 L182.0 255.2Z" fill="#3c3a36" stroke="rgb(117,115,103)" stroke-width="0.8"/><path d="M588.4 115.4 L589.5 116.0 L589.7 117.3 L588.4 117.7 L587.5 117.2 L587.0 115.8Z" fill="#3c3a36" stroke="rgb(123,121,109)" stroke-width="0.8"/><path d="M171.4 477.6 L172.9 478.4 L173.3 480.0 L171.9 480.7 L170.7 480.1 L170.1 478.7Z" fill="#121211"/><path d="M170.1 478.4 A1.8 1.5 0 0 1 173.4 479.7" fill="none" stroke="rgb(112,110,98)" stroke-width="1.0"/><path d="M563.3 137.6 L562.4 137.3 L562.1 136.1 L563.2 135.6 L564.1 136.1 L564.4 137.2Z" fill="#3c3a36" stroke="rgb(102,100,88)" stroke-width="0.8"/><path d="M706.0 318.5 L707.6 317.3 L709.4 318.0 L709.6 319.8 L708.2 320.7 L706.9 320.1Z" fill="#121211"/><path d="M706.3 320.0 A1.9 1.6 0 0 1 709.3 317.9" fill="none" stroke="rgb(125,123,111)" stroke-width="1.0"/><path d="M643.6 366.4 L645.0 367.1 L645.6 368.9 L643.8 370.2 L642.1 368.9 L641.9 367.0Z" fill="#121211"/><path d="M641.7 368.6 A2.1 1.8 0 0 1 645.3 366.6" fill="none" stroke="rgb(104,102,90)" stroke-width="1.0"/><path d="M277.8 175.7 L279.1 173.8 L280.8 174.7 L281.7 176.0 L280.6 177.1 L279.2 177.1Z" fill="#3c3a36" stroke="rgb(101,99,87)" stroke-width="0.8"/><path d="M452.9 130.3 L453.7 131.1 L453.8 132.1 L452.8 133.1 L451.6 132.2 L452.2 131.1Z" fill="#3c3a36" stroke="rgb(104,102,90)" stroke-width="0.8"/><path d="M478.4 131.0 L479.0 132.3 L479.1 133.7 L477.6 133.9 L476.6 132.8 L477.4 131.8Z" fill="#3c3a36" stroke="rgb(114,112,100)" stroke-width="0.8"/><path d="M798.7 302.0 L797.6 300.8 L798.7 299.6 L800.4 299.1 L800.8 300.8 L800.2 302.2Z" fill="#121211"/><path d="M797.7 301.7 A1.9 1.6 0 0 1 800.7 299.4" fill="none" stroke="rgb(92,90,78)" stroke-width="1.0"/><path d="M175.4 476.1 L176.9 473.7 L179.4 473.9 L181.1 475.8 L179.6 477.9 L177.4 477.8Z" fill="#121211"/><path d="M175.9 474.4 A2.9 2.4 0 0 1 181.1 476.5" fill="none" stroke="rgb(102,100,88)" stroke-width="1.0"/><path d="M110.1 426.0 L109.6 424.4 L111.0 423.5 L112.5 423.9 L112.8 425.5 L111.6 426.5Z" fill="#121211"/><path d="M110.0 423.9 A1.7 1.4 0 0 1 112.9 425.5" fill="none" stroke="rgb(115,113,101)" stroke-width="1.0"/><path d="M253.7 200.8 L255.1 202.3 L255.4 204.1 L253.7 205.1 L251.6 204.3 L252.0 202.1Z" fill="#3c3a36" stroke="rgb(126,124,112)" stroke-width="0.8"/><path d="M755.9 205.7 L755.5 203.8 L757.2 203.0 L758.7 203.6 L759.5 205.4 L757.6 206.0Z" fill="#3c3a36" stroke="rgb(93,91,79)" stroke-width="0.8"/><path d="M253.2 156.4 L253.3 154.6 L254.9 153.4 L257.1 154.4 L256.8 156.9 L254.6 157.5Z" fill="#3c3a36" stroke="rgb(120,118,106)" stroke-width="0.8"/><path d="M191.8 286.2 L191.1 287.9 L189.6 286.9 L188.5 285.5 L189.9 284.5 L191.5 284.7Z" fill="#3c3a36" stroke="rgb(108,106,94)" stroke-width="0.8"/><path d="M472.0 478.1 L471.7 475.2 L473.8 473.4 L476.7 474.2 L477.8 477.5 L475.0 480.0Z" fill="#121211"/><path d="M470.7 475.9 A3.7 3.1 0 0 1 477.8 475.2" fill="none" stroke="rgb(82,80,68)" stroke-width="1.0"/><path d="M704.9 228.5 L706.7 229.9 L706.2 232.3 L703.9 232.3 L703.1 230.9 L702.6 228.8Z" fill="#3c3a36" stroke="rgb(105,103,91)" stroke-width="0.8"/><path d="M666.7 382.4 L669.7 382.8 L671.0 385.4 L669.4 387.7 L666.9 387.0 L665.3 385.0Z" fill="#121211"/><path d="M665.4 386.1 A2.9 2.4 0 0 1 670.4 383.4" fill="none" stroke="rgb(103,101,89)" stroke-width="1.0"/><path d="M456.9 510.3 L455.1 508.9 L455.8 506.5 L458.3 505.6 L460.1 507.7 L458.8 509.6Z" fill="#121211"/><path d="M455.0 508.0 A2.5 2.2 0 0 1 460.0 507.7" fill="none" stroke="rgb(80,78,66)" stroke-width="1.0"/><path d="M247.8 176.9 L247.6 178.1 L247.1 178.9 L246.1 178.6 L245.6 177.6 L246.5 177.0Z" fill="#3c3a36" stroke="rgb(122,120,108)" stroke-width="0.8"/><path d="M191.0 226.6 L189.6 227.7 L188.3 227.6 L186.9 226.4 L188.2 225.1 L190.1 224.7Z" fill="#3c3a36" stroke="rgb(133,131,119)" stroke-width="0.8"/><path d="M610.6 489.3 L612.4 490.1 L612.0 492.2 L610.1 492.7 L608.0 491.9 L608.6 489.5Z" fill="#121211"/><path d="M608.0 491.2 A2.4 2.0 0 0 1 612.5 489.9" fill="none" stroke="rgb(94,92,80)" stroke-width="1.0"/><path d="M74.8 403.0 L73.8 401.0 L74.9 399.4 L76.8 398.9 L78.4 400.7 L76.9 402.4Z" fill="#121211"/><path d="M74.1 399.3 A2.4 2.0 0 0 1 78.1 401.7" fill="none" stroke="rgb(106,104,92)" stroke-width="1.0"/><path d="M503.2 136.1 L505.1 136.5 L506.2 138.1 L504.9 139.7 L503.2 139.2 L502.3 137.8Z" fill="#3c3a36" stroke="rgb(104,102,90)" stroke-width="0.8"/><path d="M418.2 583.1 L418.3 579.7 L420.9 577.9 L424.2 578.8 L424.1 582.4 L421.4 583.7Z" fill="#121211"/><path d="M417.5 580.3 A3.7 3.1 0 0 1 424.8 580.4" fill="none" stroke="rgb(90,88,76)" stroke-width="1.0"/><path d="M717.5 197.5 L716.0 196.8 L715.2 195.9 L715.7 194.5 L717.3 194.4 L718.4 195.8Z" fill="#3c3a36" stroke="rgb(113,111,99)" stroke-width="0.8"/><path d="M356.9 138.4 L355.2 138.4 L353.6 137.7 L354.0 135.6 L356.0 135.5 L357.6 136.5Z" fill="#3c3a36" stroke="rgb(127,125,113)" stroke-width="0.8"/><path d="M229.2 561.7 L231.1 560.8 L232.7 562.1 L232.6 564.3 L230.7 564.5 L229.4 563.6Z" fill="#121211"/><path d="M229.0 562.1 A2.1 1.7 0 0 1 232.9 563.1" fill="none" stroke="rgb(106,104,92)" stroke-width="1.0"/><path d="M358.0 119.6 L358.9 121.2 L357.7 122.4 L356.2 122.4 L355.7 121.1 L356.2 119.5Z" fill="#3c3a36" stroke="rgb(96,94,82)" stroke-width="0.8"/><path d="M356.1 148.3 L355.9 149.6 L354.8 150.6 L353.1 149.7 L354.0 148.2 L355.0 147.8Z" fill="#3c3a36" stroke="rgb(124,122,110)" stroke-width="0.8"/><path d="M185.3 258.8 L186.7 259.5 L187.0 261.0 L185.7 261.4 L184.6 261.1 L184.0 259.8Z" fill="#3c3a36" stroke="rgb(110,108,96)" stroke-width="0.8"/><path d="M809.1 353.8 L807.6 352.6 L808.3 350.8 L810.0 350.0 L811.4 351.4 L811.0 353.3Z" fill="#121211"/><path d="M807.8 352.8 A1.9 1.6 0 0 1 810.9 350.6" fill="none" stroke="rgb(126,124,112)" stroke-width="1.0"/><path d="M180.8 230.9 L179.4 229.5 L179.9 227.3 L182.0 227.8 L182.8 229.0 L182.7 230.8Z" fill="#3c3a36" stroke="rgb(118,116,104)" stroke-width="0.8"/><path d="M121.9 433.6 L121.2 435.4 L119.4 435.3 L118.0 434.2 L118.8 432.4 L120.6 432.1Z" fill="#121211"/><path d="M118.2 432.6 A2.1 1.8 0 0 1 122.0 434.5" fill="none" stroke="rgb(104,102,90)" stroke-width="1.0"/><path d="M369.1 585.9 L371.2 584.8 L373.6 585.1 L373.6 587.5 L371.9 589.1 L370.0 588.0Z" fill="#121211"/><path d="M369.1 586.1 A2.4 2.1 0 0 1 373.9 586.5" fill="none" stroke="rgb(88,86,74)" stroke-width="1.0"/><path d="M715.7 226.3 L714.4 227.7 L712.4 227.1 L712.4 225.1 L713.6 223.6 L715.6 224.3Z" fill="#3c3a36" stroke="rgb(121,119,107)" stroke-width="0.8"/><path d="M120.0 486.7 L121.3 486.2 L122.9 487.0 L122.1 488.5 L120.7 489.6 L119.8 488.0Z" fill="#121211"/><path d="M119.5 486.5 A1.9 1.6 0 0 1 122.9 488.0" fill="none" stroke="rgb(107,105,93)" stroke-width="1.0"/><path d="M474.0 106.9 L471.8 106.6 L471.7 104.5 L472.6 102.8 L474.2 103.9 L475.4 105.3Z" fill="#3c3a36" stroke="rgb(124,122,110)" stroke-width="0.8"/><path d="M240.5 218.3 L241.4 219.8 L240.4 221.1 L238.8 221.1 L238.0 219.7 L238.9 218.4Z" fill="#3c3a36" stroke="rgb(106,104,92)" stroke-width="0.8"/><path d="M391.6 114.9 L392.7 115.5 L393.3 116.6 L392.2 117.3 L390.9 117.2 L390.8 115.9Z" fill="#3c3a36" stroke="rgb(109,107,95)" stroke-width="0.8"/><path d="M720.2 164.0 L718.9 163.2 L718.7 161.5 L720.2 160.3 L721.4 161.8 L721.5 163.2Z" fill="#3c3a36" stroke="rgb(129,127,115)" stroke-width="0.8"/><path d="M540.1 123.2 L538.0 122.8 L537.5 121.3 L538.1 120.1 L539.9 119.4 L540.7 121.2Z" fill="#3c3a36" stroke="rgb(125,123,111)" stroke-width="0.8"/><path d="M789.4 332.9 L790.5 333.6 L790.4 335.1 L788.9 335.6 L787.9 334.5 L788.1 333.1Z" fill="#121211"/><path d="M787.8 334.7 A1.5 1.3 0 0 1 790.2 333.0" fill="none" stroke="rgb(129,127,115)" stroke-width="1.0"/><path d="M116.9 430.3 L115.4 430.2 L115.4 428.8 L116.1 427.6 L117.6 427.9 L117.8 429.4Z" fill="#121211"/><path d="M115.3 428.2 A1.5 1.3 0 0 1 117.9 429.5" fill="none" stroke="rgb(124,122,110)" stroke-width="1.0"/><path d="M104.8 275.5 L106.7 276.6 L106.7 279.0 L104.6 279.2 L102.7 278.6 L102.6 276.2Z" fill="#3c3a36" stroke="rgb(121,119,107)" stroke-width="0.8"/><path d="M772.2 275.2 L773.9 274.3 L775.4 275.5 L775.3 277.6 L773.3 278.6 L771.4 277.2Z" fill="#121211"/><path d="M771.6 277.3 A2.3 1.9 0 0 1 775.1 274.6" fill="none" stroke="rgb(112,110,98)" stroke-width="1.0"/><path d="M755.4 289.0 L756.5 289.8 L757.0 291.2 L755.6 291.7 L754.6 291.1 L754.2 289.9Z" fill="#121211"/><path d="M754.1 291.2 A1.6 1.3 0 0 1 756.6 289.3" fill="none" stroke="rgb(123,121,109)" stroke-width="1.0"/><path d="M160.8 518.5 L162.1 517.5 L163.4 518.2 L163.9 519.6 L162.7 520.6 L160.9 520.3Z" fill="#121211"/><path d="M160.8 518.1 A1.8 1.5 0 0 1 164.2 519.4" fill="none" stroke="rgb(108,106,94)" stroke-width="1.0"/><path d="M433.6 102.5 L434.6 101.7 L435.8 101.8 L436.6 103.0 L435.4 103.8 L433.9 103.9Z" fill="#3c3a36" stroke="rgb(95,93,81)" stroke-width="0.8"/><path d="M662.4 332.5 L664.7 331.9 L666.5 333.3 L666.1 335.6 L663.9 336.4 L662.3 334.8Z" fill="#121211"/><path d="M662.0 335.0 A2.4 2.1 0 0 1 666.1 332.5" fill="none" stroke="rgb(85,83,71)" stroke-width="1.0"/><path d="M265.9 162.4 L267.0 161.5 L268.3 161.2 L269.0 162.5 L268.1 163.7 L266.5 163.9Z" fill="#3c3a36" stroke="rgb(100,98,86)" stroke-width="0.8"/><path d="M233.5 221.0 L232.2 222.4 L230.2 221.3 L231.1 219.5 L232.3 218.6 L233.6 219.4Z" fill="#3c3a36" stroke="rgb(114,112,100)" stroke-width="0.8"/><path d="M379.0 522.6 L377.6 524.1 L375.5 523.1 L375.9 520.9 L377.5 519.8 L379.7 520.5Z" fill="#121211"/><path d="M375.2 521.2 A2.4 2.0 0 0 1 379.9 521.6" fill="none" stroke="rgb(82,80,68)" stroke-width="1.0"/><path d="M708.5 192.5 L709.7 193.2 L709.7 194.5 L708.5 196.0 L706.7 194.9 L707.3 193.1Z" fill="#3c3a36" stroke="rgb(100,98,86)" stroke-width="0.8"/><path d="M720.0 180.7 L719.1 179.6 L719.0 177.8 L721.0 177.2 L721.6 179.0 L721.5 180.4Z" fill="#3c3a36" stroke="rgb(93,91,79)" stroke-width="0.8"/><path d="M591.2 425.4 L593.8 424.7 L595.3 426.7 L595.2 429.3 L592.7 429.2 L590.7 428.0Z" fill="#121211"/><path d="M590.4 427.8 A2.8 2.3 0 0 1 595.5 426.0" fill="none" stroke="rgb(96,94,82)" stroke-width="1.0"/><path d="M513.3 142.7 L512.7 141.8 L513.4 141.0 L514.7 140.5 L515.1 141.9 L514.4 143.0Z" fill="#3c3a36" stroke="rgb(125,123,111)" stroke-width="0.8"/><path d="M679.9 332.5 L681.5 332.1 L682.4 333.6 L681.4 334.9 L679.8 335.1 L679.0 333.7Z" fill="#121211"/><path d="M679.1 334.3 A1.7 1.4 0 0 1 681.9 332.5" fill="none" stroke="rgb(91,89,77)" stroke-width="1.0"/><path d="M258.3 186.7 L259.9 187.5 L261.2 189.3 L259.3 190.6 L257.2 190.0 L257.3 188.1Z" fill="#3c3a36" stroke="rgb(124,122,110)" stroke-width="0.8"/><path d="M694.3 217.3 L694.5 218.8 L692.8 219.1 L691.7 217.9 L692.1 216.4 L693.7 215.9Z" fill="#3c3a36" stroke="rgb(108,106,94)" stroke-width="0.8"/><path d="M258.3 426.1 L256.8 427.1 L255.2 426.3 L255.2 424.5 L256.6 423.3 L258.4 424.1Z" fill="#121211"/><path d="M255.1 424.3 A1.9 1.6 0 0 1 258.6 425.6" fill="none" stroke="rgb(97,95,83)" stroke-width="1.0"/><path d="M795.2 282.1 L794.3 280.9 L794.8 279.3 L796.4 279.6 L797.3 280.7 L796.7 282.0Z" fill="#121211"/><path d="M794.2 281.6 A1.8 1.5 0 0 1 797.0 279.4" fill="none" stroke="rgb(129,127,115)" stroke-width="1.0"/><path d="M298.7 527.1 L300.0 528.5 L299.6 530.2 L298.0 530.6 L296.5 529.7 L296.7 527.6Z" fill="#121211"/><path d="M296.3 528.3 A2.1 1.8 0 0 1 300.4 529.2" fill="none" stroke="rgb(75,73,61)" stroke-width="1.0"/><path d="M213.3 246.4 L212.8 247.9 L211.6 248.6 L210.7 247.6 L210.7 246.4 L211.9 245.5Z" fill="#3c3a36" stroke="rgb(104,102,90)" stroke-width="0.8"/><path d="M275.6 451.7 L272.2 452.0 L271.6 448.9 L272.4 446.1 L275.7 445.9 L277.3 448.9Z" fill="#121211"/><path d="M271.0 447.4 A3.3 2.8 0 0 1 277.2 449.3" fill="none" stroke="rgb(107,105,93)" stroke-width="1.0"/><path d="M584.4 146.0 L584.0 147.1 L582.7 147.0 L582.2 145.9 L582.8 144.7 L584.1 144.8Z" fill="#3c3a36" stroke="rgb(131,129,117)" stroke-width="0.8"/><path d="M700.5 421.8 L699.9 424.3 L698.0 424.9 L696.3 424.0 L696.4 422.0 L698.2 420.9Z" fill="#121211"/><path d="M695.6 423.8 A2.5 2.2 0 0 1 700.1 421.6" fill="none" stroke="rgb(92,90,78)" stroke-width="1.0"/><path d="M137.1 346.7 L135.8 348.1 L134.3 347.9 L133.2 346.7 L134.2 345.5 L135.9 345.1Z" fill="#121211"/><path d="M133.5 345.4 A2.0 1.7 0 0 1 136.8 347.4" fill="none" stroke="rgb(100,98,86)" stroke-width="1.0"/><path d="M154.1 335.8 L154.8 334.0 L156.5 334.1 L157.9 335.0 L157.2 336.7 L155.6 336.7Z" fill="#121211"/><path d="M154.7 334.1 A1.8 1.6 0 0 1 157.7 336.1" fill="none" stroke="rgb(95,93,81)" stroke-width="1.0"/><path d="M327.0 140.2 L328.9 139.6 L330.1 141.2 L329.6 142.9 L328.0 142.7 L326.6 142.0Z" fill="#3c3a36" stroke="rgb(102,100,88)" stroke-width="0.8"/><path d="M459.2 111.7 L459.4 110.0 L460.4 109.4 L462.0 109.3 L462.2 111.0 L460.9 112.1Z" fill="#3c3a36" stroke="rgb(97,95,83)" stroke-width="0.8"/><path d="M339.4 160.0 L340.3 158.2 L342.0 156.9 L343.6 158.6 L342.7 160.3 L341.1 160.8Z" fill="#3c3a36" stroke="rgb(111,109,97)" stroke-width="0.8"/><path d="M606.9 452.5 L607.9 454.9 L606.2 456.5 L603.7 456.8 L603.4 454.4 L604.5 452.5Z" fill="#121211"/><path d="M602.8 455.0 A2.6 2.2 0 0 1 607.6 453.4" fill="none" stroke="rgb(75,73,61)" stroke-width="1.0"/><path d="M771.6 257.9 L771.7 256.4 L772.9 255.6 L773.8 256.5 L774.3 257.9 L772.9 258.1Z" fill="#3c3a36" stroke="rgb(92,90,78)" stroke-width="0.8"/><path d="M536.1 117.8 L535.5 116.3 L536.9 115.5 L538.4 115.9 L539.1 117.6 L537.6 119.0Z" fill="#3c3a36" stroke="rgb(112,110,98)" stroke-width="0.8"/><path d="M644.7 425.3 L642.5 426.6 L640.7 425.1 L640.4 422.9 L642.4 422.0 L644.1 423.0Z" fill="#121211"/><path d="M640.0 424.6 A2.6 2.2 0 0 1 644.6 422.6" fill="none" stroke="rgb(81,79,67)" stroke-width="1.0"/><path d="M399.3 103.6 L399.4 102.1 L400.9 101.5 L401.5 102.7 L401.8 103.9 L400.6 104.0Z" fill="#3c3a36" stroke="rgb(123,121,109)" stroke-width="0.8"/><path d="M362.1 545.9 L363.3 543.5 L365.9 543.8 L367.2 545.8 L366.0 548.1 L363.5 548.0Z" fill="#121211"/><path d="M362.0 545.1 A2.8 2.4 0 0 1 367.5 545.6" fill="none" stroke="rgb(90,88,76)" stroke-width="1.0"/><path d="M198.9 240.6 L198.2 242.4 L196.2 243.6 L195.2 241.6 L195.1 239.5 L197.4 239.0Z" fill="#3c3a36" stroke="rgb(108,106,94)" stroke-width="0.8"/><path d="M301.4 573.1 L300.2 576.1 L297.4 576.7 L294.6 575.0 L295.5 571.6 L298.6 571.7Z" fill="#121211"/><path d="M295.0 572.9 A3.3 2.8 0 0 1 301.3 574.1" fill="none" stroke="rgb(84,82,70)" stroke-width="1.0"/><path d="M741.7 245.8 L742.9 246.2 L742.7 247.5 L741.7 248.2 L740.7 247.6 L740.3 246.2Z" fill="#3c3a36" stroke="rgb(109,107,95)" stroke-width="0.8"/><path d="M194.2 186.0 L194.5 187.7 L193.2 188.7 L191.7 188.2 L191.5 186.7 L192.5 185.5Z" fill="#3c3a36" stroke="rgb(96,94,82)" stroke-width="0.8"/><path d="M539.6 114.2 L538.8 112.6 L540.4 111.7 L542.2 112.1 L542.1 113.9 L540.9 114.9Z" fill="#3c3a36" stroke="rgb(121,119,107)" stroke-width="0.8"/><path d="M139.6 245.6 L141.1 245.6 L142.4 246.7 L141.8 248.6 L139.6 249.0 L139.2 247.0Z" fill="#3c3a36" stroke="rgb(107,105,93)" stroke-width="0.8"/><path d="M680.8 168.2 L679.5 169.8 L678.1 168.8 L677.5 167.6 L678.4 166.6 L679.7 166.8Z" fill="#3c3a36" stroke="rgb(109,107,95)" stroke-width="0.8"/><path d="M705.1 168.9 L704.3 169.5 L703.4 169.1 L703.6 168.1 L704.3 167.5 L705.2 168.0Z" fill="#3c3a36" stroke="rgb(101,99,87)" stroke-width="0.8"/><path d="M407.9 107.7 L406.8 106.6 L406.9 105.1 L408.3 103.3 L409.5 105.3 L410.1 107.4Z" fill="#3c3a36" stroke="rgb(105,103,91)" stroke-width="0.8"/><path d="M133.0 229.4 L133.7 230.9 L132.7 232.0 L131.2 232.3 L130.7 230.8 L131.2 229.3Z" fill="#3c3a36" stroke="rgb(127,125,113)" stroke-width="0.8"/><path d="M684.8 335.5 L686.3 337.1 L685.1 339.0 L683.2 339.2 L682.4 337.6 L682.5 335.5Z" fill="#121211"/><path d="M681.9 338.3 A2.3 1.9 0 0 1 685.6 335.9" fill="none" stroke="rgb(100,98,86)" stroke-width="1.0"/><path d="M542.5 554.8 L544.1 553.2 L546.3 553.3 L547.0 555.4 L545.9 557.6 L543.5 556.9Z" fill="#121211"/><path d="M542.0 555.1 A2.9 2.5 0 0 1 547.7 554.1" fill="none" stroke="rgb(95,93,81)" stroke-width="1.0"/><path d="M356.6 134.5 L355.8 136.0 L354.5 135.6 L354.0 134.7 L354.2 133.6 L355.4 133.6Z" fill="#3c3a36" stroke="rgb(99,97,85)" stroke-width="0.8"/><path d="M319.8 135.3 L319.8 133.4 L321.0 131.9 L322.6 133.1 L322.8 134.7 L321.5 135.8Z" fill="#3c3a36" stroke="rgb(122,120,108)" stroke-width="0.8"/><path d="M481.2 470.6 L480.1 468.8 L480.9 466.8 L483.1 466.8 L484.1 468.5 L483.2 470.1Z" fill="#121211"/><path d="M480.0 468.5 A2.1 1.8 0 0 1 484.2 468.0" fill="none" stroke="rgb(78,76,64)" stroke-width="1.0"/><path d="M745.0 388.0 L746.0 389.2 L745.6 390.9 L743.8 391.3 L743.0 389.8 L743.3 388.2Z" fill="#121211"/><path d="M742.8 390.1 A1.7 1.5 0 0 1 745.8 388.4" fill="none" stroke="rgb(98,96,84)" stroke-width="1.0"/><path d="M102.5 327.8 L101.1 328.3 L99.5 328.5 L99.8 326.9 L100.5 325.5 L102.3 326.0Z" fill="#3c3a36" stroke="rgb(123,121,109)" stroke-width="0.8"/><path d="M196.5 271.7 L197.9 271.8 L198.4 272.9 L198.0 273.9 L196.9 273.7 L196.0 273.0Z" fill="#3c3a36" stroke="rgb(121,119,107)" stroke-width="0.8"/><path d="M341.8 123.3 L344.0 123.2 L344.6 125.1 L344.0 127.2 L341.7 126.9 L340.9 125.1Z" fill="#3c3a36" stroke="rgb(92,90,78)" stroke-width="0.8"/><path d="M483.9 498.9 L484.4 501.3 L482.4 502.4 L479.8 502.3 L479.3 499.4 L481.6 497.8Z" fill="#121211"/><path d="M479.4 500.2 A2.7 2.3 0 0 1 484.7 499.7" fill="none" stroke="rgb(93,91,79)" stroke-width="1.0"/><path d="M543.2 109.1 L544.5 110.1 L543.8 111.5 L542.5 112.2 L541.6 110.9 L541.7 109.5Z" fill="#3c3a36" stroke="rgb(108,106,94)" stroke-width="0.8"/><path d="M749.3 317.0 L748.3 318.8 L746.3 319.4 L744.8 317.7 L745.8 315.6 L748.0 315.3Z" fill="#121211"/><path d="M745.1 318.3 A2.3 1.9 0 0 1 748.8 315.7" fill="none" stroke="rgb(122,120,108)" stroke-width="1.0"/><path d="M677.7 304.1 L676.6 302.6 L677.6 301.2 L679.2 300.8 L680.0 302.2 L679.3 303.5Z" fill="#121211"/><path d="M676.9 303.1 A1.8 1.5 0 0 1 679.7 301.1" fill="none" stroke="rgb(127,125,113)" stroke-width="1.0"/><path d="M654.7 208.4 L656.7 209.4 L656.3 211.7 L654.3 212.4 L653.3 210.9 L652.7 209.0Z" fill="#3c3a36" stroke="rgb(121,119,107)" stroke-width="0.8"/><path d="M155.3 344.4 L153.9 343.7 L154.2 342.3 L155.1 341.1 L156.3 342.1 L156.4 343.4Z" fill="#121211"/><path d="M154.0 341.7 A1.6 1.4 0 0 1 156.7 343.5" fill="none" stroke="rgb(110,108,96)" stroke-width="1.0"/><path d="M465.5 101.4 L467.3 99.8 L469.6 100.4 L470.4 102.8 L468.6 104.5 L466.6 103.5Z" fill="#3c3a36" stroke="rgb(133,131,119)" stroke-width="0.8"/><path d="M117.8 428.6 L117.1 427.0 L118.0 424.9 L120.5 425.3 L120.6 427.6 L119.6 429.2Z" fill="#121211"/><path d="M117.0 425.8 A2.4 2.0 0 0 1 121.2 428.0" fill="none" stroke="rgb(121,119,107)" stroke-width="1.0"/><path d="M192.7 216.4 L194.5 215.9 L195.6 217.4 L195.2 219.4 L193.0 220.0 L191.8 218.1Z" fill="#3c3a36" stroke="rgb(93,91,79)" stroke-width="0.8"/><path d="M343.4 494.4 L343.8 497.1 L341.4 498.4 L339.7 496.6 L339.3 494.6 L341.3 493.8Z" fill="#121211"/><path d="M338.8 494.8 A2.6 2.2 0 0 1 343.9 495.6" fill="none" stroke="rgb(97,95,83)" stroke-width="1.0"/><path d="M692.4 223.6 L692.4 225.6 L690.6 226.3 L689.2 225.2 L689.4 223.6 L690.8 222.7Z" fill="#3c3a36" stroke="rgb(100,98,86)" stroke-width="0.8"/><path d="M693.9 293.1 L692.7 292.1 L693.4 290.8 L694.7 290.0 L695.8 291.2 L695.1 292.5Z" fill="#121211"/><path d="M692.8 292.4 A1.6 1.4 0 0 1 695.4 290.5" fill="none" stroke="rgb(131,129,117)" stroke-width="1.0"/><path d="M222.9 553.6 L220.8 554.9 L218.0 554.1 L218.4 551.2 L220.6 549.3 L222.9 551.1Z" fill="#121211"/><path d="M218.1 551.2 A2.9 2.5 0 0 1 223.6 552.8" fill="none" stroke="rgb(80,78,66)" stroke-width="1.0"/><path d="M417.2 142.7 L416.6 140.7 L418.4 139.9 L419.6 140.4 L420.5 141.8 L419.2 143.3Z" fill="#3c3a36" stroke="rgb(130,128,116)" stroke-width="0.8"/><path d="M736.1 350.3 L738.2 350.7 L738.4 352.8 L737.0 354.2 L735.2 353.6 L734.4 351.6Z" fill="#121211"/><path d="M734.2 353.2 A2.5 2.1 0 0 1 738.4 350.6" fill="none" stroke="rgb(118,116,104)" stroke-width="1.0"/><path d="M694.3 300.8 L692.4 300.3 L692.6 298.5 L693.9 296.9 L695.9 297.8 L696.2 300.1Z" fill="#121211"/><path d="M692.1 300.1 A2.2 1.9 0 0 1 695.6 297.5" fill="none" stroke="rgb(116,114,102)" stroke-width="1.0"/><path d="M640.2 511.1 L637.1 510.7 L636.6 507.1 L639.5 505.3 L641.9 507.1 L642.6 509.8Z" fill="#121211"/><path d="M636.6 509.0 A3.3 2.8 0 0 1 642.9 507.0" fill="none" stroke="rgb(80,78,66)" stroke-width="1.0"/><path d="M201.0 238.6 L202.1 237.7 L203.6 237.1 L204.4 238.8 L203.4 240.4 L201.6 240.0Z" fill="#3c3a36" stroke="rgb(128,126,114)" stroke-width="0.8"/><path d="M531.0 517.3 L527.9 515.3 L527.3 512.1 L530.0 510.3 L533.3 511.1 L533.5 514.6Z" fill="#121211"/><path d="M526.6 513.4 A3.8 3.2 0 0 1 534.0 512.1" fill="none" stroke="rgb(94,92,80)" stroke-width="1.0"/><path d="M376.0 511.0 L376.6 508.4 L379.4 508.0 L381.2 510.1 L380.2 512.7 L377.6 512.9Z" fill="#121211"/><path d="M375.5 509.8 A3.1 2.6 0 0 1 381.5 510.3" fill="none" stroke="rgb(96,94,82)" stroke-width="1.0"/><path d="M317.6 126.6 L317.9 128.0 L317.7 129.6 L316.0 129.3 L315.2 128.0 L315.9 126.4Z" fill="#3c3a36" stroke="rgb(120,118,106)" stroke-width="0.8"/><path d="M256.4 144.3 L257.6 144.7 L258.7 145.4 L258.0 146.6 L256.6 146.8 L256.0 145.6Z" fill="#3c3a36" stroke="rgb(118,116,104)" stroke-width="0.8"/><path d="M498.0 134.5 L496.2 133.8 L496.6 131.6 L498.7 131.3 L500.3 132.5 L499.5 134.3Z" fill="#3c3a36" stroke="rgb(115,113,101)" stroke-width="0.8"/><path d="M106.2 308.7 L104.5 309.7 L102.9 308.2 L103.0 305.9 L105.2 306.1 L107.2 306.8Z" fill="#3c3a36" stroke="rgb(105,103,91)" stroke-width="0.8"/><path d="M769.6 393.7 L767.2 392.1 L768.4 389.6 L770.7 389.3 L772.3 390.6 L772.2 393.2Z" fill="#121211"/><path d="M767.5 392.3 A2.8 2.4 0 0 1 772.3 389.4" fill="none" stroke="rgb(82,80,68)" stroke-width="1.0"/><path d="M210.9 396.9 L209.2 397.4 L208.2 395.9 L209.1 394.6 L210.6 394.0 L211.1 395.5Z" fill="#121211"/><path d="M208.5 394.6 A1.7 1.5 0 0 1 211.6 396.1" fill="none" stroke="rgb(119,117,105)" stroke-width="1.0"/><path d="M105.1 377.1 L106.6 377.6 L107.1 379.1 L105.9 380.1 L104.4 379.7 L104.1 378.3Z" fill="#121211"/><path d="M104.0 377.3 A2.0 1.7 0 0 1 107.4 379.4" fill="none" stroke="rgb(109,107,95)" stroke-width="1.0"/><path d="M196.4 369.5 L196.1 370.9 L194.7 372.0 L193.5 370.6 L193.7 369.0 L195.2 368.3Z" fill="#121211"/><path d="M193.5 368.8 A1.9 1.6 0 0 1 196.8 370.6" fill="none" stroke="rgb(94,92,80)" stroke-width="1.0"/><path d="M198.6 347.0 L196.1 346.9 L195.0 344.8 L196.1 342.7 L198.4 342.9 L199.6 344.7Z" fill="#121211"/><path d="M195.5 343.1 A2.4 2.1 0 0 1 199.6 345.6" fill="none" stroke="rgb(118,116,104)" stroke-width="1.0"/><path d="M712.7 173.6 L711.4 174.7 L709.5 175.2 L708.6 173.2 L709.9 171.6 L711.7 172.2Z" fill="#3c3a36" stroke="rgb(115,113,101)" stroke-width="0.8"/><path d="M777.8 360.7 L779.8 360.5 L780.4 362.5 L779.4 364.4 L777.2 363.9 L776.2 361.9Z" fill="#121211"/><path d="M776.5 363.0 A2.2 1.8 0 0 1 780.1 360.7" fill="none" stroke="rgb(106,104,92)" stroke-width="1.0"/><path d="M578.5 139.0 L578.5 137.6 L579.3 136.7 L580.6 137.0 L581.2 138.5 L579.8 139.0Z" fill="#3c3a36" stroke="rgb(122,120,108)" stroke-width="0.8"/><path d="M632.2 171.1 L633.4 171.5 L634.4 172.3 L633.6 173.4 L632.3 173.6 L631.6 172.4Z" fill="#3c3a36" stroke="rgb(135,133,121)" stroke-width="0.8"/><path d="M507.5 125.1 L507.2 127.2 L505.2 127.3 L503.6 126.3 L504.7 124.9 L505.9 124.2Z" fill="#3c3a36" stroke="rgb(116,114,102)" stroke-width="0.8"/><path d="M108.3 363.4 L106.6 364.1 L105.4 362.6 L106.1 360.9 L107.8 360.2 L109.1 361.8Z" fill="#121211"/><path d="M105.7 360.9 A1.9 1.7 0 0 1 109.0 362.9" fill="none" stroke="rgb(91,89,77)" stroke-width="1.0"/><path d="M789.9 348.7 L788.9 347.7 L788.8 346.4 L790.1 345.8 L791.3 346.5 L791.3 348.0Z" fill="#121211"/><path d="M788.6 347.8 A1.6 1.3 0 0 1 791.1 346.1" fill="none" stroke="rgb(98,96,84)" stroke-width="1.0"/><path d="M300.3 144.7 L299.1 143.1 L299.8 141.1 L301.6 141.8 L303.2 142.7 L302.3 144.6Z" fill="#3c3a36" stroke="rgb(103,101,89)" stroke-width="0.8"/><path d="M374.0 540.7 L372.5 537.2 L375.1 535.0 L378.3 535.0 L379.5 538.0 L377.3 540.1Z" fill="#121211"/><path d="M372.7 536.7 A3.7 3.1 0 0 1 379.9 537.3" fill="none" stroke="rgb(95,93,81)" stroke-width="1.0"/><path d="M757.0 408.7 L757.7 410.6 L756.3 412.6 L754.0 411.7 L753.0 409.3 L755.0 407.7Z" fill="#121211"/><path d="M753.3 410.9 A2.5 2.2 0 0 1 757.6 408.5" fill="none" stroke="rgb(89,87,75)" stroke-width="1.0"/><path d="M431.0 114.7 L429.5 114.2 L428.4 113.2 L429.5 112.2 L430.7 112.2 L431.1 113.2Z" fill="#3c3a36" stroke="rgb(128,126,114)" stroke-width="0.8"/><path d="M684.8 257.5 L684.4 259.1 L682.7 259.5 L681.7 258.2 L682.3 256.8 L683.8 256.2Z" fill="#121211"/><path d="M681.5 258.8 A2.0 1.7 0 0 1 684.6 256.3" fill="none" stroke="rgb(108,106,94)" stroke-width="1.0"/><path d="M244.7 181.3 L243.8 180.4 L243.8 179.3 L244.8 178.3 L246.2 179.2 L246.1 180.9Z" fill="#3c3a36" stroke="rgb(114,112,100)" stroke-width="0.8"/><path d="M89.9 432.3 L90.9 431.2 L92.3 431.2 L92.8 432.3 L92.3 433.5 L91.0 433.3Z" fill="#121211"/><path d="M90.4 431.4 A1.6 1.3 0 0 1 93.1 432.8" fill="none" stroke="rgb(111,109,97)" stroke-width="1.0"/><path d="M734.1 244.0 L735.1 242.9 L736.2 243.9 L736.4 245.2 L735.2 246.4 L733.9 245.3Z" fill="#3c3a36" stroke="rgb(103,101,89)" stroke-width="0.8"/><path d="M230.2 528.0 L230.7 530.5 L228.1 531.4 L226.5 529.8 L226.6 527.7 L228.5 526.8Z" fill="#121211"/><path d="M226.0 527.7 A2.6 2.2 0 0 1 230.9 529.2" fill="none" stroke="rgb(101,99,87)" stroke-width="1.0"/><path d="M378.8 555.7 L376.5 555.5 L375.7 553.0 L377.6 551.0 L379.9 552.2 L380.3 554.3Z" fill="#121211"/><path d="M375.6 553.0 A2.8 2.4 0 0 1 381.1 553.4" fill="none" stroke="rgb(90,88,76)" stroke-width="1.0"/><path d="M142.5 261.6 L140.9 263.3 L138.9 261.8 L139.2 259.6 L141.0 258.8 L143.0 259.6Z" fill="#3c3a36" stroke="rgb(102,100,88)" stroke-width="0.8"/><path d="M176.5 302.4 L176.6 304.1 L175.1 304.9 L173.2 304.6 L172.9 302.3 L174.9 300.6Z" fill="#3c3a36" stroke="rgb(116,114,102)" stroke-width="0.8"/><path d="M284.1 162.9 L285.2 162.5 L286.4 163.0 L286.3 164.4 L285.1 164.8 L284.1 164.1Z" fill="#3c3a36" stroke="rgb(135,133,121)" stroke-width="0.8"/><path d="M586.8 161.5 L587.0 160.3 L588.0 159.9 L588.9 160.5 L588.7 161.5 L587.8 162.5Z" fill="#3c3a36" stroke="rgb(92,90,78)" stroke-width="0.8"/><path d="M600.2 412.2 L601.6 410.8 L603.6 411.7 L604.1 414.0 L602.1 415.4 L600.2 414.1Z" fill="#121211"/><path d="M599.4 413.5 A2.4 2.1 0 0 1 603.9 411.7" fill="none" stroke="rgb(78,76,64)" stroke-width="1.0"/><path d="M649.5 169.0 L651.2 168.1 L652.3 169.3 L653.2 171.3 L651.0 172.5 L649.9 170.6Z" fill="#3c3a36" stroke="rgb(125,123,111)" stroke-width="0.8"/><path d="M707.0 259.7 L704.9 259.7 L704.2 257.5 L705.8 256.1 L707.5 256.6 L708.7 258.4Z" fill="#121211"/><path d="M704.4 259.1 A2.3 2.0 0 0 1 707.9 256.1" fill="none" stroke="rgb(92,90,78)" stroke-width="1.0"/><path d="M758.8 399.4 L759.5 397.7 L760.8 396.8 L762.5 397.7 L762.1 399.6 L760.5 400.2Z" fill="#121211"/><path d="M758.9 399.2 A1.9 1.6 0 0 1 762.1 397.3" fill="none" stroke="rgb(108,106,94)" stroke-width="1.0"/><path d="M776.5 275.0 L777.6 276.3 L777.2 277.9 L775.6 278.7 L774.0 277.4 L774.9 275.6Z" fill="#121211"/><path d="M774.1 277.8 A2.2 1.9 0 0 1 777.5 275.1" fill="none" stroke="rgb(124,122,110)" stroke-width="1.0"/><path d="M120.0 417.2 L120.1 415.8 L121.1 415.1 L122.3 415.7 L122.6 417.1 L121.3 417.7Z" fill="#121211"/><path d="M120.0 415.4 A1.6 1.3 0 0 1 122.7 416.9" fill="none" stroke="rgb(114,112,100)" stroke-width="1.0"/><path d="M732.4 325.0 L731.4 325.7 L730.3 325.1 L730.1 323.7 L731.4 323.1 L732.7 323.7Z" fill="#121211"/><path d="M729.9 325.1 A1.6 1.3 0 0 1 732.5 323.4" fill="none" stroke="rgb(121,119,107)" stroke-width="1.0"/><path d="M456.2 462.7 L454.1 464.7 L452.0 463.0 L451.8 460.9 L453.4 459.2 L455.9 460.0Z" fill="#121211"/><path d="M450.9 461.3 A2.9 2.4 0 0 1 456.5 461.0" fill="none" stroke="rgb(88,86,74)" stroke-width="1.0"/><path d="M702.2 293.9 L703.3 295.7 L703.3 297.8 L701.2 298.0 L699.9 296.7 L699.9 294.5Z" fill="#121211"/><path d="M699.6 297.2 A2.3 1.9 0 0 1 703.2 294.5" fill="none" stroke="rgb(130,128,116)" stroke-width="1.0"/><path d="M431.2 477.0 L428.3 476.8 L426.9 474.5 L427.8 471.7 L431.0 471.7 L432.3 474.3Z" fill="#121211"/><path d="M426.1 473.8 A3.5 3.0 0 0 1 433.0 473.8" fill="none" stroke="rgb(83,81,69)" stroke-width="1.0"/><path d="M699.5 175.7 L700.2 176.4 L699.8 177.3 L698.6 178.0 L698.2 176.7 L698.5 175.7Z" fill="#3c3a36" stroke="rgb(102,100,88)" stroke-width="0.8"/><path d="M131.4 249.9 L131.7 251.8 L129.7 252.5 L128.1 251.3 L128.6 249.5 L130.1 249.0Z" fill="#3c3a36" stroke="rgb(124,122,110)" stroke-width="0.8"/><path d="M270.3 511.5 L268.1 512.5 L266.1 510.6 L267.3 508.4 L269.5 507.6 L271.0 509.4Z" fill="#121211"/><path d="M266.1 508.7 A3.0 2.5 0 0 1 271.8 510.2" fill="none" stroke="rgb(96,94,82)" stroke-width="1.0"/><path d="M214.2 201.9 L215.9 202.6 L216.4 204.2 L215.2 205.1 L213.4 205.2 L213.7 203.6Z" fill="#3c3a36" stroke="rgb(107,105,93)" stroke-width="0.8"/><path d="M449.3 491.9 L452.0 493.1 L453.0 495.7 L451.0 498.3 L447.4 497.6 L446.3 493.9Z" fill="#121211"/><path d="M446.5 494.5 A3.6 3.1 0 0 1 453.6 494.2" fill="none" stroke="rgb(94,92,80)" stroke-width="1.0"/><path d="M288.2 432.5 L288.3 429.9 L290.7 428.9 L292.3 430.8 L292.4 433.1 L290.1 433.7Z" fill="#121211"/><path d="M288.1 430.4 A2.5 2.2 0 0 1 292.9 431.9" fill="none" stroke="rgb(87,85,73)" stroke-width="1.0"/><path d="M117.1 412.0 L115.9 412.9 L115.0 411.7 L115.1 410.4 L116.3 409.8 L117.4 410.6Z" fill="#121211"/><path d="M114.8 410.2 A1.7 1.4 0 0 1 117.7 411.7" fill="none" stroke="rgb(119,117,105)" stroke-width="1.0"/><path d="M699.2 226.3 L700.6 226.4 L701.1 227.3 L701.0 228.6 L699.8 228.5 L699.2 227.6Z" fill="#3c3a36" stroke="rgb(97,95,83)" stroke-width="0.8"/><path d="M567.4 420.8 L568.7 418.6 L571.5 418.4 L573.5 421.2 L571.5 424.2 L567.9 424.0Z" fill="#121211"/><path d="M566.6 421.4 A3.3 2.8 0 0 1 572.8 419.4" fill="none" stroke="rgb(77,75,63)" stroke-width="1.0"/><path d="M245.4 439.2 L244.7 437.9 L245.0 436.2 L246.7 436.4 L247.9 437.7 L247.1 439.3Z" fill="#121211"/><path d="M244.4 436.8 A2.0 1.7 0 0 1 248.0 438.2" fill="none" stroke="rgb(105,103,91)" stroke-width="1.0"/><path d="M484.8 456.5 L485.5 454.0 L487.9 454.2 L489.5 455.6 L488.7 457.7 L486.4 458.5Z" fill="#121211"/><path d="M484.8 455.9 A2.5 2.1 0 0 1 489.6 455.3" fill="none" stroke="rgb(98,96,84)" stroke-width="1.0"/><path d="M107.6 479.5 L106.6 478.1 L107.6 476.6 L109.2 476.7 L109.9 478.0 L109.4 479.6Z" fill="#121211"/><path d="M106.9 477.0 A1.9 1.6 0 0 1 110.3 478.5" fill="none" stroke="rgb(83,81,69)" stroke-width="1.0"/><path d="M126.4 335.6 L127.7 336.3 L128.5 337.6 L127.2 338.7 L125.6 338.3 L125.5 336.7Z" fill="#121211"/><path d="M125.5 335.9 A1.8 1.5 0 0 1 128.5 337.9" fill="none" stroke="rgb(104,102,90)" stroke-width="1.0"/><path d="M181.5 235.0 L180.9 236.5 L179.5 236.9 L178.3 235.9 L178.7 234.3 L180.1 234.3Z" fill="#3c3a36" stroke="rgb(134,132,120)" stroke-width="0.8"/><path d="M650.8 145.7 L649.1 146.0 L648.3 144.3 L649.2 142.1 L651.3 143.0 L652.1 144.7Z" fill="#3c3a36" stroke="rgb(94,92,80)" stroke-width="0.8"/><path d="M357.4 151.3 L356.7 150.3 L356.9 149.2 L358.1 148.6 L359.0 149.7 L358.6 150.9Z" fill="#3c3a36" stroke="rgb(114,112,100)" stroke-width="0.8"/><path d="M415.4 564.9 L414.7 561.3 L417.1 559.4 L420.3 559.4 L420.6 562.5 L418.8 564.5Z" fill="#121211"/><path d="M414.5 561.3 A3.5 3.0 0 0 1 421.5 561.4" fill="none" stroke="rgb(94,92,80)" stroke-width="1.0"/><path d="M803.0 331.3 L802.6 332.5 L801.3 332.4 L800.8 331.4 L801.3 330.4 L802.6 330.1Z" fill="#121211"/><path d="M800.6 331.9 A1.4 1.2 0 0 1 802.9 330.3" fill="none" stroke="rgb(97,95,83)" stroke-width="1.0"/><path d="M654.2 523.4 L654.6 525.5 L652.9 526.6 L650.7 526.3 L650.0 523.9 L652.1 522.4Z" fill="#121211"/><path d="M650.0 525.1 A2.6 2.2 0 0 1 654.8 523.6" fill="none" stroke="rgb(74,72,60)" stroke-width="1.0"/><path d="M529.9 119.0 L531.9 119.5 L533.1 120.9 L532.3 122.8 L530.2 122.9 L529.8 121.0Z" fill="#3c3a36" stroke="rgb(122,120,108)" stroke-width="0.8"/><path d="M775.5 254.0 L777.4 254.5 L778.0 256.0 L777.6 258.1 L775.5 257.6 L774.5 255.9Z" fill="#3c3a36" stroke="rgb(133,131,119)" stroke-width="0.8"/><path d="M579.4 414.1 L582.0 413.0 L583.9 414.7 L584.4 417.4 L581.7 417.9 L579.0 417.2Z" fill="#121211"/><path d="M578.9 416.2 A3.0 2.6 0 0 1 584.4 414.2" fill="none" stroke="rgb(75,73,61)" stroke-width="1.0"/><path d="M661.6 217.0 L660.1 217.5 L659.2 216.7 L659.2 215.6 L660.2 215.0 L661.5 215.5Z" fill="#3c3a36" stroke="rgb(118,116,104)" stroke-width="0.8"/><path d="M221.4 229.4 L219.7 230.4 L217.8 230.8 L217.0 228.7 L218.5 227.4 L220.6 227.2Z" fill="#3c3a36" stroke="rgb(107,105,93)" stroke-width="0.8"/><path d="M674.8 363.8 L676.4 362.3 L678.8 362.9 L679.3 365.4 L677.5 367.8 L674.6 366.5Z" fill="#121211"/><path d="M673.9 365.6 A3.1 2.6 0 0 1 679.2 362.6" fill="none" stroke="rgb(103,101,89)" stroke-width="1.0"/><path d="M124.0 386.2 L125.0 384.8 L126.8 385.3 L127.4 387.2 L125.8 388.0 L124.4 387.7Z" fill="#121211"/><path d="M124.1 385.5 A1.8 1.5 0 0 1 127.2 387.3" fill="none" stroke="rgb(127,125,113)" stroke-width="1.0"/><path d="M727.8 226.3 L727.1 227.4 L725.6 227.2 L725.5 225.6 L726.5 224.8 L727.8 225.0Z" fill="#3c3a36" stroke="rgb(96,94,82)" stroke-width="0.8"/><path d="M178.4 207.3 L177.9 205.7 L179.4 204.2 L181.5 205.1 L180.9 207.0 L179.8 208.6Z" fill="#3c3a36" stroke="rgb(126,124,112)" stroke-width="0.8"/><path d="M211.1 410.1 L213.6 409.5 L215.6 411.8 L213.8 414.0 L211.4 414.3 L210.2 412.2Z" fill="#121211"/><path d="M210.0 410.4 A3.0 2.5 0 0 1 215.3 412.8" fill="none" stroke="rgb(89,87,75)" stroke-width="1.0"/><path d="M404.7 535.3 L406.2 538.2 L403.5 539.8 L400.5 539.6 L399.6 536.5 L401.7 533.8Z" fill="#121211"/><path d="M399.3 536.6 A3.5 3.0 0 0 1 406.2 536.9" fill="none" stroke="rgb(80,78,66)" stroke-width="1.0"/><path d="M337.4 153.4 L337.0 154.5 L335.8 155.0 L334.9 153.8 L335.5 152.7 L336.8 152.2Z" fill="#3c3a36" stroke="rgb(121,119,107)" stroke-width="0.8"/><path d="M599.6 425.0 L600.0 422.7 L602.1 421.0 L604.7 422.7 L603.7 425.4 L601.5 426.8Z" fill="#121211"/><path d="M598.8 424.5 A3.0 2.6 0 0 1 604.4 422.5" fill="none" stroke="rgb(84,82,70)" stroke-width="1.0"/><path d="M581.8 511.1 L583.4 514.4 L580.6 516.9 L577.7 515.5 L576.4 512.7 L578.5 509.8Z" fill="#121211"/><path d="M575.9 513.7 A3.7 3.2 0 0 1 583.0 512.0" fill="none" stroke="rgb(74,72,60)" stroke-width="1.0"/><path d="M761.2 269.8 L759.3 269.6 L757.9 268.0 L759.1 265.9 L761.2 266.6 L762.2 268.2Z" fill="#121211"/><path d="M758.2 269.2 A2.3 2.0 0 0 1 761.8 266.4" fill="none" stroke="rgb(117,115,103)" stroke-width="1.0"/><path d="M466.8 564.8 L467.1 567.2 L465.1 568.7 L462.3 568.2 L462.5 565.3 L464.5 563.9Z" fill="#121211"/><path d="M461.8 565.9 A3.1 2.6 0 0 1 467.8 565.6" fill="none" stroke="rgb(71,69,57)" stroke-width="1.0"/><path d="M805.2 297.4 L805.7 298.8 L804.6 299.9 L803.4 299.1 L802.7 297.9 L803.9 297.0Z" fill="#121211"/><path d="M802.8 299.0 A1.6 1.3 0 0 1 805.3 297.2" fill="none" stroke="rgb(101,99,87)" stroke-width="1.0"/><path d="M195.0 339.1 L193.9 338.0 L194.6 336.5 L196.1 336.5 L197.1 337.6 L196.6 339.1Z" fill="#121211"/><path d="M194.3 336.6 A1.7 1.5 0 0 1 197.2 338.4" fill="none" stroke="rgb(99,97,85)" stroke-width="1.0"/><path d="M534.6 109.9 L536.0 108.9 L537.9 108.7 L538.6 110.6 L537.2 112.2 L535.6 111.3Z" fill="#3c3a36" stroke="rgb(121,119,107)" stroke-width="0.8"/><path d="M697.9 324.2 L698.7 321.9 L701.6 321.8 L702.4 324.5 L700.9 326.1 L698.7 326.3Z" fill="#121211"/><path d="M697.4 325.5 A2.8 2.4 0 0 1 702.0 322.4" fill="none" stroke="rgb(122,120,108)" stroke-width="1.0"/><path d="M180.7 348.0 L181.4 350.0 L179.9 351.8 L178.1 350.6 L177.4 348.9 L178.9 347.9Z" fill="#121211"/><path d="M177.6 347.9 A2.3 2.0 0 0 1 181.4 350.2" fill="none" stroke="rgb(97,95,83)" stroke-width="1.0"/><path d="M380.5 506.1 L379.1 507.1 L377.5 506.4 L377.1 504.5 L378.7 502.9 L380.9 504.0Z" fill="#121211"/><path d="M376.6 504.7 A2.4 2.1 0 0 1 381.4 505.1" fill="none" stroke="rgb(88,86,74)" stroke-width="1.0"/><path d="M587.3 416.0 L589.1 417.7 L588.6 420.1 L586.4 420.9 L584.5 419.4 L584.8 416.9Z" fill="#121211"/><path d="M584.4 419.0 A2.5 2.1 0 0 1 588.9 417.3" fill="none" stroke="rgb(108,106,94)" stroke-width="1.0"/><path d="M680.2 421.6 L680.0 423.2 L678.6 424.1 L676.9 423.2 L677.2 421.4 L678.7 420.5Z" fill="#121211"/><path d="M676.7 422.9 A2.0 1.7 0 0 1 680.3 421.2" fill="none" stroke="rgb(93,91,79)" stroke-width="1.0"/><path d="M103.5 300.8 L102.4 299.1 L102.3 297.6 L103.8 296.7 L105.1 297.9 L105.2 299.6Z" fill="#3c3a36" stroke="rgb(117,115,103)" stroke-width="0.8"/><path d="M551.7 142.6 L553.0 142.0 L554.2 142.9 L553.6 144.2 L552.4 144.8 L551.9 143.7Z" fill="#3c3a36" stroke="rgb(91,89,77)" stroke-width="0.8"/><path d="M507.5 121.1 L509.1 122.4 L507.7 123.9 L506.3 124.0 L504.9 123.0 L505.5 121.1Z" fill="#3c3a36" stroke="rgb(113,111,99)" stroke-width="0.8"/><path d="M540.5 121.5 L539.8 120.3 L540.0 119.1 L541.1 118.9 L542.4 119.5 L541.8 120.8Z" fill="#3c3a36" stroke="rgb(118,116,104)" stroke-width="0.8"/><path d="M745.6 254.1 L744.7 255.1 L743.3 254.6 L743.2 253.2 L744.2 252.0 L745.8 252.6Z" fill="#121211"/><path d="M743.0 254.5 A1.6 1.4 0 0 1 745.5 252.4" fill="none" stroke="rgb(120,118,106)" stroke-width="1.0"/><path d="M294.2 164.4 L294.3 163.3 L295.5 162.9 L296.3 163.8 L295.8 164.7 L294.9 165.2Z" fill="#3c3a36" stroke="rgb(116,114,102)" stroke-width="0.8"/><path d="M556.9 134.8 L557.0 136.2 L555.7 137.0 L554.7 136.1 L554.6 134.9 L555.7 134.2Z" fill="#3c3a36" stroke="rgb(104,102,90)" stroke-width="0.8"/><path d="M765.1 220.4 L765.7 219.2 L766.6 220.1 L767.0 221.0 L766.3 222.1 L765.2 221.5Z" fill="#3c3a36" stroke="rgb(127,125,113)" stroke-width="0.8"/><path d="M281.0 135.3 L282.3 134.8 L282.7 136.1 L282.5 137.4 L281.1 137.4 L280.4 136.4Z" fill="#3c3a36" stroke="rgb(108,106,94)" stroke-width="0.8"/><path d="M716.9 163.2 L715.1 162.8 L714.0 160.9 L715.7 159.9 L717.6 159.9 L717.9 161.7Z" fill="#3c3a36" stroke="rgb(108,106,94)" stroke-width="0.8"/><path d="M154.5 335.2 L153.3 335.5 L152.3 335.2 L152.4 334.0 L153.3 333.4 L154.5 333.9Z" fill="#121211"/><path d="M152.3 333.6 A1.3 1.1 0 0 1 154.6 335.1" fill="none" stroke="rgb(116,114,102)" stroke-width="1.0"/><path d="M659.9 165.5 L658.6 166.9 L657.1 167.4 L656.4 165.9 L657.0 164.7 L658.7 163.8Z" fill="#3c3a36" stroke="rgb(105,103,91)" stroke-width="0.8"/><path d="M138.3 321.5 L136.5 322.2 L135.3 320.5 L136.0 318.5 L137.8 318.9 L138.5 320.0Z" fill="#3c3a36" stroke="rgb(129,127,115)" stroke-width="0.8"/><path d="M567.1 561.1 L567.4 558.3 L570.0 558.0 L572.5 558.9 L571.6 561.6 L569.3 562.3Z" fill="#121211"/><path d="M566.8 560.1 A2.9 2.4 0 0 1 572.3 559.0" fill="none" stroke="rgb(78,76,64)" stroke-width="1.0"/><path d="M176.8 242.8 L175.2 243.3 L174.2 242.5 L173.7 240.9 L175.4 240.6 L177.2 240.9Z" fill="#3c3a36" stroke="rgb(109,107,95)" stroke-width="0.8"/><path d="M444.7 113.3 L444.7 114.8 L443.8 116.0 L441.9 115.8 L441.9 113.9 L443.2 112.9Z" fill="#3c3a36" stroke="rgb(119,117,105)" stroke-width="0.8"/><path d="M587.3 419.5 L586.3 417.1 L587.5 415.0 L590.2 414.6 L590.9 417.2 L590.1 419.6Z" fill="#121211"/><path d="M585.7 417.7 A3.1 2.6 0 0 1 591.4 415.6" fill="none" stroke="rgb(100,98,86)" stroke-width="1.0"/><path d="M192.9 322.1 L192.6 323.8 L191.0 324.5 L189.5 323.4 L189.9 321.5 L191.6 320.8Z" fill="#121211"/><path d="M189.8 321.2 A2.1 1.8 0 0 1 193.3 323.5" fill="none" stroke="rgb(102,100,88)" stroke-width="1.0"/><path d="M101.6 286.6 L100.2 287.0 L99.0 286.1 L99.6 284.9 L100.6 284.6 L101.8 285.1Z" fill="#3c3a36" stroke="rgb(121,119,107)" stroke-width="0.8"/><path d="M569.3 465.9 L569.7 467.7 L569.1 469.3 L567.4 469.0 L566.7 467.7 L567.1 465.8Z" fill="#121211"/><path d="M566.1 467.9 A2.1 1.8 0 0 1 570.1 466.8" fill="none" stroke="rgb(88,86,74)" stroke-width="1.0"/><path d="M402.1 123.5 L401.0 123.9 L400.2 122.9 L400.5 121.6 L401.9 121.5 L402.4 122.5Z" fill="#3c3a36" stroke="rgb(94,92,80)" stroke-width="0.8"/><path d="M598.4 168.1 L597.8 166.0 L599.9 166.1 L601.9 166.5 L601.7 168.8 L599.6 169.8Z" fill="#3c3a36" stroke="rgb(92,90,78)" stroke-width="0.8"/><path d="M136.1 372.3 L135.5 371.0 L136.7 370.1 L137.9 370.6 L138.5 371.9 L137.3 372.7Z" fill="#121211"/><path d="M135.9 370.5 A1.5 1.2 0 0 1 138.4 372.0" fill="none" stroke="rgb(106,104,92)" stroke-width="1.0"/><path d="M182.0 305.9 L182.8 304.3 L184.3 304.7 L185.7 305.8 L184.6 307.3 L182.7 307.6Z" fill="#3c3a36" stroke="rgb(95,93,81)" stroke-width="0.8"/><path d="M578.6 140.3 L580.0 140.2 L581.3 140.6 L581.5 142.4 L579.8 142.7 L578.6 141.9Z" fill="#3c3a36" stroke="rgb(118,116,104)" stroke-width="0.8"/><path d="M714.0 425.2 L712.2 424.1 L711.6 422.0 L713.6 420.7 L715.5 421.7 L715.5 423.8Z" fill="#121211"/><path d="M711.6 423.6 A2.2 1.9 0 0 1 715.6 421.6" fill="none" stroke="rgb(80,78,66)" stroke-width="1.0"/><path d="M662.5 153.8 L663.9 154.0 L663.5 155.3 L662.8 156.0 L661.5 155.7 L661.7 154.5Z" fill="#3c3a36" stroke="rgb(117,115,103)" stroke-width="0.8"/><path d="M332.5 129.3 L332.6 130.5 L331.6 131.5 L330.1 130.8 L330.1 129.2 L331.5 128.4Z" fill="#3c3a36" stroke="rgb(125,123,111)" stroke-width="0.8"/><path d="M777.5 262.2 L778.0 263.4 L777.8 264.6 L776.5 265.1 L775.4 263.9 L776.3 262.8Z" fill="#121211"/><path d="M775.7 264.4 A1.5 1.2 0 0 1 777.9 262.5" fill="none" stroke="rgb(118,116,104)" stroke-width="1.0"/><path d="M116.1 453.1 L117.6 452.0 L119.1 452.3 L120.2 453.8 L118.6 454.8 L116.7 455.0Z" fill="#121211"/><path d="M116.4 452.2 A2.0 1.7 0 0 1 120.1 454.0" fill="none" stroke="rgb(96,94,82)" stroke-width="1.0"/><path d="M274.1 149.5 L274.1 148.1 L275.0 147.6 L276.3 147.4 L276.7 148.8 L275.5 149.6Z" fill="#3c3a36" stroke="rgb(105,103,91)" stroke-width="0.8"/><path d="M416.9 120.7 L417.2 121.7 L416.5 122.9 L415.5 122.0 L414.7 120.9 L416.0 120.3Z" fill="#3c3a36" stroke="rgb(128,126,114)" stroke-width="0.8"/><path d="M636.4 172.8 L637.8 174.5 L636.5 175.8 L635.2 176.1 L633.9 175.2 L634.7 173.7Z" fill="#3c3a36" stroke="rgb(110,108,96)" stroke-width="0.8"/><path d="M664.9 477.9 L662.3 477.4 L661.6 475.2 L662.6 472.8 L665.0 473.8 L666.8 475.7Z" fill="#121211"/><path d="M660.9 476.0 A2.9 2.5 0 0 1 666.2 473.9" fill="none" stroke="rgb(103,101,89)" stroke-width="1.0"/><path d="M313.7 550.0 L315.9 548.3 L318.6 548.7 L319.1 551.4 L317.2 553.3 L314.0 553.3Z" fill="#121211"/><path d="M313.4 549.6 A3.4 2.9 0 0 1 319.9 550.7" fill="none" stroke="rgb(95,93,81)" stroke-width="1.0"/><path d="M802.8 308.1 L802.7 306.7 L804.1 306.4 L804.9 307.4 L804.7 308.6 L803.5 308.9Z" fill="#121211"/><path d="M802.5 308.4 A1.5 1.3 0 0 1 804.8 306.7" fill="none" stroke="rgb(107,105,93)" stroke-width="1.0"/><path d="M171.8 249.8 L171.1 248.0 L172.7 247.2 L174.0 247.2 L174.4 248.6 L173.5 249.4Z" fill="#3c3a36" stroke="rgb(106,104,92)" stroke-width="0.8"/><path d="M668.1 146.2 L667.0 146.7 L665.5 146.3 L665.6 144.6 L667.1 143.7 L668.5 144.7Z" fill="#3c3a36" stroke="rgb(104,102,90)" stroke-width="0.8"/><path d="M509.0 543.2 L507.6 545.3 L505.1 545.3 L504.4 543.0 L505.4 541.0 L507.6 541.2Z" fill="#121211"/><path d="M504.1 542.9 A2.4 2.0 0 0 1 508.8 542.4" fill="none" stroke="rgb(87,85,73)" stroke-width="1.0"/><path d="M373.0 147.0 L372.8 145.9 L373.8 144.9 L374.8 145.8 L375.3 147.2 L373.9 147.9Z" fill="#3c3a36" stroke="rgb(108,106,94)" stroke-width="0.8"/><path d="M155.1 249.8 L154.3 248.9 L153.9 247.7 L155.2 246.9 L156.1 247.9 L156.3 249.1Z" fill="#3c3a36" stroke="rgb(118,116,104)" stroke-width="0.8"/><path d="M89.1 388.5 L87.9 389.9 L86.1 389.6 L85.5 388.0 L86.7 387.0 L88.2 386.9Z" fill="#121211"/><path d="M85.8 387.0 A1.8 1.5 0 0 1 88.9 388.9" fill="none" stroke="rgb(129,127,115)" stroke-width="1.0"/><path d="M716.6 263.9 L718.2 264.0 L719.0 265.2 L718.3 266.5 L716.9 266.5 L716.1 265.3Z" fill="#121211"/><path d="M716.0 266.1 A1.7 1.5 0 0 1 718.6 264.0" fill="none" stroke="rgb(100,98,86)" stroke-width="1.0"/><path d="M711.8 448.0 L714.1 446.9 L716.5 447.6 L716.6 450.2 L714.5 452.2 L712.3 450.5Z" fill="#121211"/><path d="M711.5 449.9 A2.8 2.4 0 0 1 716.6 447.5" fill="none" stroke="rgb(112,110,98)" stroke-width="1.0"/><path d="M180.6 542.8 L181.9 540.6 L184.1 541.4 L185.2 543.1 L183.9 544.7 L181.9 544.7Z" fill="#121211"/><path d="M180.8 541.8 A2.6 2.2 0 0 1 185.6 543.4" fill="none" stroke="rgb(78,76,64)" stroke-width="1.0"/><path d="M161.0 349.0 L159.5 349.5 L158.3 348.9 L158.3 347.6 L159.4 346.8 L160.8 347.3Z" fill="#121211"/><path d="M158.2 347.0 A1.8 1.5 0 0 1 161.1 348.8" fill="none" stroke="rgb(131,129,117)" stroke-width="1.0"/><path d="M408.7 128.1 L408.8 127.0 L409.8 126.3 L411.3 126.8 L410.9 128.3 L409.6 129.2Z" fill="#3c3a36" stroke="rgb(97,95,83)" stroke-width="0.8"/><path d="M188.7 368.7 L188.4 371.0 L186.8 372.8 L184.4 371.8 L184.1 369.2 L186.4 368.3Z" fill="#121211"/><path d="M184.5 368.6 A2.6 2.2 0 0 1 189.0 371.1" fill="none" stroke="rgb(119,117,105)" stroke-width="1.0"/><path d="M499.2 562.6 L497.1 560.8 L498.6 558.3 L501.4 557.8 L502.9 560.3 L501.8 562.9Z" fill="#121211"/><path d="M497.0 560.3 A3.2 2.7 0 0 1 503.2 559.7" fill="none" stroke="rgb(82,80,68)" stroke-width="1.0"/><path d="M185.0 260.6 L186.3 259.7 L188.1 260.1 L188.6 262.1 L186.8 262.6 L184.9 262.6Z" fill="#3c3a36" stroke="rgb(100,98,86)" stroke-width="0.8"/><path d="M125.5 267.9 L127.4 267.6 L128.5 269.0 L128.2 270.8 L126.3 271.2 L125.4 269.7Z" fill="#3c3a36" stroke="rgb(117,115,103)" stroke-width="0.8"/><path d="M737.1 257.6 L738.1 258.7 L738.0 260.2 L736.6 260.4 L735.2 259.7 L735.5 258.1Z" fill="#121211"/><path d="M735.4 260.0 A1.7 1.4 0 0 1 737.9 257.9" fill="none" stroke="rgb(130,128,116)" stroke-width="1.0"/><path d="M172.8 207.9 L170.8 207.8 L170.5 205.9 L171.6 205.1 L172.9 205.0 L174.0 206.3Z" fill="#3c3a36" stroke="rgb(103,101,89)" stroke-width="0.8"/><path d="M545.9 444.0 L548.5 443.3 L550.8 444.3 L550.4 446.7 L548.3 448.1 L546.3 446.6Z" fill="#121211"/><path d="M545.7 445.7 A2.7 2.3 0 0 1 550.8 444.4" fill="none" stroke="rgb(80,78,66)" stroke-width="1.0"/><path d="M688.8 162.5 L687.4 160.5 L689.0 158.6 L690.9 159.3 L691.7 160.8 L691.0 162.8Z" fill="#3c3a36" stroke="rgb(121,119,107)" stroke-width="0.8"/><path d="M495.6 127.1 L497.3 126.6 L498.9 128.0 L497.5 129.5 L495.9 129.9 L494.6 128.6Z" fill="#3c3a36" stroke="rgb(106,104,92)" stroke-width="0.8"/><path d="M290.0 509.7 L291.3 507.0 L294.7 506.6 L295.4 509.7 L294.4 512.3 L291.3 512.6Z" fill="#121211"/><path d="M289.7 508.3 A3.5 3.0 0 0 1 296.4 509.9" fill="none" stroke="rgb(76,74,62)" stroke-width="1.0"/><path d="M439.5 477.8 L437.9 476.2 L437.9 474.2 L439.7 473.3 L441.4 474.4 L441.5 476.6Z" fill="#121211"/><path d="M437.2 474.9 A2.5 2.1 0 0 1 442.1 474.8" fill="none" stroke="rgb(100,98,86)" stroke-width="1.0"/><path d="M687.7 461.1 L685.8 462.2 L683.8 461.7 L683.5 459.5 L685.2 458.5 L687.1 459.0Z" fill="#121211"/><path d="M683.1 460.8 A2.5 2.1 0 0 1 687.6 458.9" fill="none" stroke="rgb(107,105,93)" stroke-width="1.0"/><path d="M699.2 374.7 L698.4 377.4 L695.9 377.7 L694.0 376.3 L694.7 373.9 L697.1 372.8Z" fill="#121211"/><path d="M693.6 376.5 A3.0 2.5 0 0 1 698.7 373.7" fill="none" stroke="rgb(100,98,86)" stroke-width="1.0"/><path d="M329.1 451.6 L330.8 452.4 L330.5 454.5 L328.6 455.0 L326.9 454.0 L326.9 451.6Z" fill="#121211"/><path d="M326.7 452.3 A2.3 2.0 0 0 1 331.2 453.3" fill="none" stroke="rgb(100,98,86)" stroke-width="1.0"/><path d="M304.3 150.0 L305.1 150.7 L305.1 151.8 L304.0 152.6 L302.8 151.8 L303.1 150.5Z" fill="#3c3a36" stroke="rgb(134,132,120)" stroke-width="0.8"/><path d="M671.2 344.2 L672.4 346.0 L671.8 347.9 L669.5 348.8 L667.8 346.8 L669.1 344.8Z" fill="#121211"/><path d="M668.0 347.2 A2.6 2.2 0 0 1 672.3 344.6" fill="none" stroke="rgb(92,90,78)" stroke-width="1.0"/><path d="M195.5 250.2 L196.8 250.0 L196.9 251.3 L196.5 252.1 L195.5 252.3 L194.9 251.3Z" fill="#3c3a36" stroke="rgb(123,121,109)" stroke-width="0.8"/><path d="M734.5 214.2 L734.5 212.2 L736.2 211.4 L738.0 212.1 L737.8 213.9 L736.4 215.6Z" fill="#3c3a36" stroke="rgb(102,100,88)" stroke-width="0.8"/><path d="M465.7 449.2 L466.3 446.8 L468.8 447.0 L470.3 448.8 L469.1 450.9 L466.6 451.6Z" fill="#121211"/><path d="M465.3 448.8 A2.6 2.2 0 0 1 470.3 448.4" fill="none" stroke="rgb(92,90,78)" stroke-width="1.0"/><path d="M122.1 367.9 L121.5 365.9 L123.4 365.2 L125.5 365.6 L125.3 367.8 L123.7 369.3Z" fill="#121211"/><path d="M121.8 365.4 A2.3 1.9 0 0 1 125.7 367.8" fill="none" stroke="rgb(128,126,114)" stroke-width="1.0"/><path d="M80.2 382.9 L78.9 383.1 L78.1 382.3 L78.0 381.0 L79.4 380.7 L80.1 381.6Z" fill="#121211"/><path d="M78.1 381.0 A1.4 1.2 0 0 1 80.4 382.4" fill="none" stroke="rgb(103,101,89)" stroke-width="1.0"/><path d="M178.8 318.4 L177.7 318.0 L177.6 316.8 L178.5 315.9 L179.9 316.2 L180.0 317.8Z" fill="#121211"/><path d="M177.5 316.2 A1.6 1.3 0 0 1 180.1 317.9" fill="none" stroke="rgb(95,93,81)" stroke-width="1.0"/><path d="M610.6 158.1 L612.2 157.2 L613.4 158.7 L612.8 160.5 L611.2 160.4 L609.7 159.5Z" fill="#3c3a36" stroke="rgb(109,107,95)" stroke-width="0.8"/><path d="M536.0 482.0 L533.4 482.4 L531.5 480.8 L531.7 478.0 L534.5 477.5 L536.0 479.4Z" fill="#121211"/><path d="M531.1 480.1 A2.8 2.4 0 0 1 536.5 479.0" fill="none" stroke="rgb(95,93,81)" stroke-width="1.0"/><path d="M317.2 166.3 L318.2 165.9 L319.1 166.2 L319.3 167.3 L318.2 167.6 L317.4 167.3Z" fill="#3c3a36" stroke="rgb(103,101,89)" stroke-width="0.8"/><path d="M130.5 337.3 L129.5 336.1 L130.0 334.9 L131.2 334.7 L132.3 335.5 L131.7 336.7Z" fill="#121211"/><path d="M129.7 334.7 A1.6 1.3 0 0 1 132.4 336.5" fill="none" stroke="rgb(97,95,83)" stroke-width="1.0"/><path d="M628.5 376.7 L630.3 377.4 L630.9 379.2 L629.5 380.6 L627.9 379.7 L627.2 378.2Z" fill="#121211"/><path d="M627.1 379.2 A1.9 1.6 0 0 1 630.5 377.5" fill="none" stroke="rgb(82,80,68)" stroke-width="1.0"/><path d="M121.5 452.8 L119.8 453.8 L118.2 452.3 L118.9 450.4 L120.6 449.9 L122.3 451.0Z" fill="#121211"/><path d="M118.5 450.4 A2.1 1.8 0 0 1 122.3 452.2" fill="none" stroke="rgb(121,119,107)" stroke-width="1.0"/><path d="M318.1 130.4 L317.7 128.4 L319.8 127.7 L321.6 128.7 L321.7 131.0 L319.5 132.3Z" fill="#3c3a36" stroke="rgb(132,130,118)" stroke-width="0.8"/><path d="M438.1 134.8 L437.9 133.6 L439.0 132.7 L440.1 133.5 L440.0 134.7 L439.1 135.1Z" fill="#3c3a36" stroke="rgb(122,120,108)" stroke-width="0.8"/><path d="M620.2 170.9 L622.4 171.3 L622.5 173.7 L620.6 174.2 L618.5 174.3 L619.2 172.3Z" fill="#3c3a36" stroke="rgb(118,116,104)" stroke-width="0.8"/><path d="M91.2 382.9 L89.7 382.4 L89.5 381.0 L90.2 379.5 L91.6 380.3 L92.4 381.7Z" fill="#121211"/><path d="M89.5 380.2 A1.7 1.4 0 0 1 92.3 381.9" fill="none" stroke="rgb(111,109,97)" stroke-width="1.0"/><path d="M295.6 154.2 L297.0 154.2 L297.4 155.6 L296.4 156.6 L294.8 156.6 L294.4 155.0Z" fill="#3c3a36" stroke="rgb(123,121,109)" stroke-width="0.8"/><path d="M643.8 123.6 L642.5 124.6 L641.3 123.8 L640.3 122.5 L641.8 121.7 L643.0 122.2Z" fill="#3c3a36" stroke="rgb(97,95,83)" stroke-width="0.8"/><path d="M787.8 267.2 L786.5 269.1 L784.3 269.2 L783.7 267.3 L784.3 265.4 L786.6 265.1Z" fill="#121211"/><path d="M783.4 268.4 A2.3 2.0 0 0 1 786.9 265.5" fill="none" stroke="rgb(96,94,82)" stroke-width="1.0"/><path d="M450.2 130.1 L448.4 129.0 L447.9 127.7 L448.6 126.4 L450.4 126.4 L451.2 128.1Z" fill="#3c3a36" stroke="rgb(121,119,107)" stroke-width="0.8"/><path d="M786.7 272.6 L788.5 272.4 L789.0 274.3 L787.8 275.8 L785.9 275.4 L785.7 273.7Z" fill="#121211"/><path d="M785.4 274.9 A2.0 1.7 0 0 1 788.5 272.4" fill="none" stroke="rgb(126,124,112)" stroke-width="1.0"/><path d="M107.5 283.6 L108.3 285.0 L107.2 286.4 L105.2 286.2 L104.9 284.3 L105.9 282.7Z" fill="#3c3a36" stroke="rgb(94,92,80)" stroke-width="0.8"/><path d="M345.7 589.5 L348.2 591.5 L347.6 594.7 L344.3 596.1 L341.7 593.6 L342.7 590.4Z" fill="#121211"/><path d="M341.8 591.6 A3.4 2.9 0 0 1 348.4 592.3" fill="none" stroke="rgb(84,82,70)" stroke-width="1.0"/><path d="M346.7 145.0 L345.4 143.7 L345.0 142.3 L346.3 141.2 L348.0 141.9 L347.9 143.6Z" fill="#3c3a36" stroke="rgb(103,101,89)" stroke-width="0.8"/><path d="M427.5 544.2 L425.3 542.3 L426.4 539.6 L428.9 539.5 L430.8 540.9 L430.2 543.5Z" fill="#121211"/><path d="M425.4 541.0 A3.0 2.5 0 0 1 431.3 541.0" fill="none" stroke="rgb(102,100,88)" stroke-width="1.0"/><path d="M704.6 498.1 L703.7 496.5 L705.1 494.8 L706.8 495.9 L707.2 497.3 L706.2 498.6Z" fill="#121211"/><path d="M703.6 497.4 A2.2 1.8 0 0 1 707.5 495.8" fill="none" stroke="rgb(96,94,82)" stroke-width="1.0"/><path d="M353.7 570.4 L350.8 570.3 L349.4 568.0 L350.7 565.8 L353.0 565.8 L354.6 567.7Z" fill="#121211"/><path d="M349.2 567.0 A2.9 2.5 0 0 1 354.9 567.6" fill="none" stroke="rgb(104,102,90)" stroke-width="1.0"/><path d="M226.9 528.1 L229.1 528.7 L229.0 531.1 L227.0 532.5 L224.6 531.4 L224.8 528.8Z" fill="#121211"/><path d="M224.6 528.8 A2.6 2.2 0 0 1 229.5 530.3" fill="none" stroke="rgb(97,95,83)" stroke-width="1.0"/><path d="M224.1 223.4 L223.3 224.6 L221.2 225.2 L220.8 223.0 L221.7 220.9 L223.7 221.9Z" fill="#3c3a36" stroke="rgb(105,103,91)" stroke-width="0.8"/><path d="M656.5 415.6 L658.4 415.2 L660.0 416.9 L658.6 418.7 L656.6 419.0 L655.7 417.3Z" fill="#121211"/><path d="M655.0 417.7 A2.6 2.2 0 0 1 659.6 415.6" fill="none" stroke="rgb(110,108,96)" stroke-width="1.0"/><path d="M338.9 134.7 L340.1 133.8 L341.2 134.5 L341.4 135.6 L340.7 137.0 L339.1 136.3Z" fill="#3c3a36" stroke="rgb(121,119,107)" stroke-width="0.8"/><path d="M303.6 141.4 L304.0 142.6 L302.7 142.7 L301.4 142.5 L301.7 141.1 L302.8 140.9Z" fill="#3c3a36" stroke="rgb(110,108,96)" stroke-width="0.8"/><path d="M470.8 544.0 L472.3 545.9 L471.0 548.1 L468.2 548.8 L466.6 546.1 L468.0 543.1Z" fill="#121211"/><path d="M466.6 545.6 A3.2 2.7 0 0 1 472.8 545.3" fill="none" stroke="rgb(84,82,70)" stroke-width="1.0"/><path d="M632.6 125.8 L631.4 127.1 L629.9 128.2 L629.2 126.5 L629.6 125.1 L631.1 124.5Z" fill="#3c3a36" stroke="rgb(125,123,111)" stroke-width="0.8"/><path d="M491.2 100.4 L489.7 100.3 L488.4 99.6 L488.8 98.0 L490.4 97.9 L491.7 98.8Z" fill="#3c3a36" stroke="rgb(92,90,78)" stroke-width="0.8"/><path d="M325.7 118.5 L326.5 117.2 L328.3 117.5 L328.3 119.3 L327.2 120.5 L326.0 119.6Z" fill="#3c3a36" stroke="rgb(122,120,108)" stroke-width="0.8"/><path d="M82.2 396.8 L81.9 395.6 L83.0 394.8 L84.2 395.4 L84.3 396.7 L83.3 397.6Z" fill="#121211"/><path d="M82.0 395.2 A1.4 1.2 0 0 1 84.5 396.7" fill="none" stroke="rgb(111,109,97)" stroke-width="1.0"/><path d="M715.3 202.5 L716.1 200.5 L717.9 201.0 L718.9 202.1 L718.2 203.6 L716.6 203.8Z" fill="#3c3a36" stroke="rgb(114,112,100)" stroke-width="0.8"/><path d="M342.3 135.7 L340.8 135.3 L340.3 133.8 L341.5 132.6 L343.0 133.1 L343.1 134.6Z" fill="#3c3a36" stroke="rgb(132,130,118)" stroke-width="0.8"/><path d="M142.0 495.5 L144.1 496.8 L143.6 499.1 L141.7 500.4 L139.3 499.2 L139.9 496.7Z" fill="#121211"/><path d="M139.5 496.5 A2.7 2.3 0 0 1 144.5 498.6" fill="none" stroke="rgb(95,93,81)" stroke-width="1.0"/><path d="M221.7 194.3 L220.9 196.1 L219.5 196.9 L217.9 196.0 L218.1 194.1 L219.8 193.6Z" fill="#3c3a36" stroke="rgb(92,90,78)" stroke-width="0.8"/><path d="M116.4 262.2 L115.4 264.1 L113.8 265.1 L112.1 263.8 L113.1 262.1 L114.6 260.9Z" fill="#3c3a36" stroke="rgb(108,106,94)" stroke-width="0.8"/><path d="M796.4 329.2 L795.7 330.6 L794.0 331.0 L793.4 329.5 L793.8 328.1 L795.4 327.8Z" fill="#121211"/><path d="M793.0 330.2 A2.0 1.7 0 0 1 796.1 328.0" fill="none" stroke="rgb(125,123,111)" stroke-width="1.0"/><path d="M447.1 494.0 L449.5 495.0 L450.8 497.2 L449.1 499.5 L446.4 498.7 L445.3 496.2Z" fill="#121211"/><path d="M445.1 496.3 A3.0 2.6 0 0 1 451.0 496.1" fill="none" stroke="rgb(72,70,58)" stroke-width="1.0"/><path d="M714.2 179.6 L713.6 179.0 L713.8 178.2 L714.7 177.7 L715.5 178.5 L715.2 179.6Z" fill="#3c3a36" stroke="rgb(106,104,92)" stroke-width="0.8"/><path d="M190.8 240.8 L189.2 241.4 L187.9 240.4 L188.0 238.8 L189.5 238.4 L190.4 239.3Z" fill="#3c3a36" stroke="rgb(114,112,100)" stroke-width="0.8"/><path d="M611.9 509.5 L613.6 511.4 L612.1 513.3 L609.9 513.8 L608.6 511.8 L609.4 509.5Z" fill="#121211"/><path d="M608.4 511.9 A2.6 2.2 0 0 1 613.3 510.5" fill="none" stroke="rgb(104,102,90)" stroke-width="1.0"/><path d="M777.1 429.4 L778.0 430.8 L777.6 432.3 L776.0 432.9 L775.2 431.5 L775.6 430.1Z" fill="#121211"/><path d="M774.9 431.7 A1.8 1.5 0 0 1 778.0 430.1" fill="none" stroke="rgb(113,111,99)" stroke-width="1.0"/><path d="M270.8 146.2 L271.0 144.8 L272.3 144.3 L273.4 145.2 L273.4 146.7 L271.9 146.6Z" fill="#3c3a36" stroke="rgb(115,113,101)" stroke-width="0.8"/><path d="M579.3 141.2 L578.1 140.9 L577.7 139.4 L579.2 138.7 L580.2 139.5 L580.3 140.7Z" fill="#3c3a36" stroke="rgb(93,91,79)" stroke-width="0.8"/><path d="M115.3 487.3 L113.4 487.4 L112.2 485.8 L113.0 483.8 L115.0 484.2 L116.3 485.5Z" fill="#121211"/><path d="M112.4 484.4 A2.3 1.9 0 0 1 116.4 486.2" fill="none" stroke="rgb(114,112,100)" stroke-width="1.0"/><path d="M189.5 336.3 L190.7 337.9 L189.3 339.4 L187.1 339.6 L186.7 337.4 L187.9 336.1Z" fill="#121211"/><path d="M186.9 336.1 A2.2 1.9 0 0 1 190.6 338.5" fill="none" stroke="rgb(100,98,86)" stroke-width="1.0"/><path d="M623.7 146.0 L622.4 147.0 L621.5 145.7 L621.4 144.5 L622.6 143.7 L624.0 144.5Z" fill="#3c3a36" stroke="rgb(132,130,118)" stroke-width="0.8"/><path d="M486.1 508.1 L487.2 505.5 L489.9 506.1 L491.2 508.0 L490.5 510.6 L487.7 510.2Z" fill="#121211"/><path d="M485.9 507.8 A3.0 2.5 0 0 1 491.7 507.2" fill="none" stroke="rgb(98,96,84)" stroke-width="1.0"/><path d="M90.7 446.7 L90.6 444.8 L92.2 444.0 L94.2 444.3 L94.3 446.5 L92.5 447.1Z" fill="#121211"/><path d="M90.7 444.3 A2.1 1.8 0 0 1 94.3 446.2" fill="none" stroke="rgb(123,121,109)" stroke-width="1.0"/><path d="M424.3 125.6 L425.6 124.9 L426.0 126.3 L425.9 127.8 L424.2 128.0 L423.2 126.6Z" fill="#3c3a36" stroke="rgb(105,103,91)" stroke-width="0.8"/><path d="M403.0 108.4 L401.9 110.3 L400.3 109.2 L398.7 108.0 L400.0 106.1 L402.2 106.4Z" fill="#3c3a36" stroke="rgb(93,91,79)" stroke-width="0.8"/><path d="M406.9 127.2 L408.0 127.0 L408.9 127.8 L408.3 128.8 L407.2 129.4 L406.4 128.3Z" fill="#3c3a36" stroke="rgb(128,126,114)" stroke-width="0.8"/><path d="M136.5 409.1 L136.8 406.7 L139.1 407.0 L141.1 408.2 L139.8 410.1 L137.9 410.8Z" fill="#121211"/><path d="M136.6 407.1 A2.6 2.2 0 0 1 141.0 409.5" fill="none" stroke="rgb(118,116,104)" stroke-width="1.0"/><path d="M481.3 116.7 L482.8 115.2 L484.5 114.2 L485.2 116.1 L484.7 117.8 L482.7 118.5Z" fill="#3c3a36" stroke="rgb(129,127,115)" stroke-width="0.8"/><path d="M119.0 327.2 L117.5 326.6 L117.1 324.9 L118.5 324.0 L120.0 324.4 L120.6 326.2Z" fill="#3c3a36" stroke="rgb(134,132,120)" stroke-width="0.8"/><path d="M189.4 264.2 L190.7 263.8 L191.6 264.8 L191.2 266.1 L189.5 267.3 L188.6 265.4Z" fill="#3c3a36" stroke="rgb(114,112,100)" stroke-width="0.8"/><path d="M602.9 145.3 L603.8 146.4 L603.0 147.4 L601.8 147.7 L600.2 146.6 L601.6 145.4Z" fill="#3c3a36" stroke="rgb(120,118,106)" stroke-width="0.8"/><path d="M721.1 322.7 L720.7 324.1 L719.5 324.7 L718.2 324.0 L718.4 322.4 L719.8 321.5Z" fill="#121211"/><path d="M718.0 324.1 A1.8 1.5 0 0 1 721.0 322.1" fill="none" stroke="rgb(101,99,87)" stroke-width="1.0"/><path d="M689.9 303.9 L691.7 303.5 L693.0 304.6 L692.8 306.5 L690.8 306.9 L689.5 305.7Z" fill="#121211"/><path d="M689.3 306.1 A2.1 1.8 0 0 1 692.8 303.6" fill="none" stroke="rgb(123,121,109)" stroke-width="1.0"/><path d="M739.1 276.8 L739.6 278.1 L738.7 279.3 L737.0 279.4 L736.4 277.7 L737.5 276.3Z" fill="#121211"/><path d="M736.6 278.7 A1.8 1.5 0 0 1 739.4 276.5" fill="none" stroke="rgb(134,132,120)" stroke-width="1.0"/><path d="M491.7 114.9 L493.3 114.1 L495.4 113.7 L495.7 116.0 L494.2 117.4 L492.1 117.0Z" fill="#3c3a36" stroke="rgb(120,118,106)" stroke-width="0.8"/><path d="M591.0 426.5 L592.5 423.6 L595.8 423.0 L596.9 425.9 L596.0 428.3 L593.3 428.7Z" fill="#121211"/><path d="M591.1 426.7 A3.3 2.8 0 0 1 597.3 424.5" fill="none" stroke="rgb(85,83,71)" stroke-width="1.0"/><path d="M153.2 242.9 L153.6 241.6 L154.9 241.5 L155.5 242.5 L155.5 243.9 L154.1 243.8Z" fill="#3c3a36" stroke="rgb(120,118,106)" stroke-width="0.8"/><path d="M674.7 252.6 L672.9 252.4 L672.4 250.7 L673.4 249.2 L675.0 249.8 L675.8 251.2Z" fill="#121211"/><path d="M672.4 251.9 A1.9 1.6 0 0 1 675.3 249.5" fill="none" stroke="rgb(99,97,85)" stroke-width="1.0"/><path d="M575.4 140.8 L575.3 139.7 L576.5 138.9 L577.7 140.0 L577.5 141.6 L576.1 141.6Z" fill="#3c3a36" stroke="rgb(130,128,116)" stroke-width="0.8"/><path d="M214.6 429.0 L212.4 428.4 L210.9 426.9 L212.3 425.2 L214.5 424.6 L215.7 426.7Z" fill="#121211"/><path d="M211.3 425.5 A2.4 2.1 0 0 1 215.7 427.4" fill="none" stroke="rgb(97,95,83)" stroke-width="1.0"/><path d="M743.6 272.7 L742.3 272.5 L741.6 271.3 L742.6 270.3 L743.9 270.3 L744.7 271.6Z" fill="#121211"/><path d="M741.7 272.2 A1.5 1.3 0 0 1 744.1 270.3" fill="none" stroke="rgb(133,131,119)" stroke-width="1.0"/><path d="M273.5 160.3 L271.8 161.6 L270.5 160.0 L270.2 157.8 L272.3 157.6 L274.1 158.5Z" fill="#3c3a36" stroke="rgb(134,132,120)" stroke-width="0.8"/><path d="M143.0 280.0 L140.9 280.2 L139.8 278.3 L140.8 276.3 L142.6 277.1 L143.6 278.2Z" fill="#3c3a36" stroke="rgb(135,133,121)" stroke-width="0.8"/><path d="M676.7 181.0 L674.9 181.8 L673.4 180.9 L673.3 179.3 L674.6 177.6 L676.2 179.0Z" fill="#3c3a36" stroke="rgb(112,110,98)" stroke-width="0.8"/><path d="M390.9 116.4 L389.6 117.6 L387.8 117.3 L387.8 115.5 L388.6 113.8 L390.3 114.8Z" fill="#3c3a36" stroke="rgb(129,127,115)" stroke-width="0.8"/><path d="M191.0 342.0 L190.3 343.4 L188.8 343.8 L187.6 342.6 L188.3 341.1 L189.9 340.6Z" fill="#121211"/><path d="M187.9 341.1 A1.9 1.6 0 0 1 191.1 343.0" fill="none" stroke="rgb(128,126,114)" stroke-width="1.0"/><path d="M466.8 123.8 L468.5 124.8 L467.5 126.8 L465.6 126.3 L464.7 125.1 L465.5 123.9Z" fill="#3c3a36" stroke="rgb(109,107,95)" stroke-width="0.8"/><path d="M137.3 279.4 L138.6 279.2 L139.7 279.6 L139.7 280.9 L138.5 281.1 L137.2 280.9Z" fill="#3c3a36" stroke="rgb(114,112,100)" stroke-width="0.8"/><path d="M99.9 288.2 L100.4 286.8 L101.8 287.0 L102.8 288.0 L102.0 289.2 L100.6 289.5Z" fill="#3c3a36" stroke="rgb(104,102,90)" stroke-width="0.8"/><path d="M615.8 512.6 L616.2 515.4 L614.6 517.4 L612.3 516.5 L611.8 514.4 L612.9 512.2Z" fill="#121211"/><path d="M611.0 515.1 A2.8 2.4 0 0 1 616.3 513.6" fill="none" stroke="rgb(104,102,90)" stroke-width="1.0"/><path d="M634.4 123.0 L636.1 123.1 L636.9 124.9 L635.4 126.0 L633.8 125.8 L633.6 124.3Z" fill="#3c3a36" stroke="rgb(96,94,82)" stroke-width="0.8"/><path d="M188.9 499.9 L187.0 498.4 L187.1 495.6 L189.9 495.3 L192.2 496.8 L191.8 499.9Z" fill="#121211"/><path d="M186.8 496.1 A3.0 2.6 0 0 1 192.4 498.2" fill="none" stroke="rgb(87,85,73)" stroke-width="1.0"/><path d="M222.9 186.7 L221.5 187.2 L219.6 186.1 L220.7 184.2 L222.5 183.9 L224.5 185.1Z" fill="#3c3a36" stroke="rgb(132,130,118)" stroke-width="0.8"/><path d="M713.9 335.8 L712.0 336.0 L711.5 334.3 L712.0 332.9 L713.8 332.3 L714.4 334.1Z" fill="#121211"/><path d="M711.1 334.9 A1.9 1.6 0 0 1 714.2 332.9" fill="none" stroke="rgb(93,91,79)" stroke-width="1.0"/><path d="M599.3 157.7 L599.1 156.6 L599.7 155.1 L601.2 155.9 L601.8 157.3 L600.5 158.3Z" fill="#3c3a36" stroke="rgb(105,103,91)" stroke-width="0.8"/><path d="M676.6 332.8 L674.7 333.7 L672.7 332.5 L672.9 330.0 L675.4 328.8 L677.2 330.7Z" fill="#121211"/><path d="M672.6 332.6 A2.6 2.2 0 0 1 676.9 329.8" fill="none" stroke="rgb(89,87,75)" stroke-width="1.0"/><path d="M725.6 423.1 L726.5 420.7 L728.7 421.0 L730.2 422.4 L729.3 424.1 L727.3 424.7Z" fill="#121211"/><path d="M725.7 423.4 A2.5 2.1 0 0 1 730.1 421.2" fill="none" stroke="rgb(83,81,69)" stroke-width="1.0"/><path d="M315.2 475.4 L314.1 474.0 L315.0 472.2 L317.1 472.1 L318.3 473.9 L316.9 475.4Z" fill="#121211"/><path d="M314.2 473.2 A2.0 1.7 0 0 1 318.1 474.0" fill="none" stroke="rgb(92,90,78)" stroke-width="1.0"/><path d="M173.0 353.7 L171.6 354.0 L170.6 353.0 L171.4 352.0 L172.4 351.7 L173.3 352.4Z" fill="#121211"/><path d="M171.0 351.8 A1.4 1.2 0 0 1 173.3 353.2" fill="none" stroke="rgb(120,118,106)" stroke-width="1.0"/><path d="M318.2 476.7 L316.2 476.4 L316.0 474.6 L317.0 473.3 L318.7 473.6 L319.2 475.2Z" fill="#121211"/><path d="M315.5 474.0 A2.3 1.9 0 0 1 319.8 475.0" fill="none" stroke="rgb(102,100,88)" stroke-width="1.0"/><path d="M397.1 133.3 L397.3 132.0 L398.0 130.6 L399.1 131.8 L399.6 133.0 L398.4 133.5Z" fill="#3c3a36" stroke="rgb(123,121,109)" stroke-width="0.8"/><path d="M284.9 159.4 L284.2 157.8 L286.0 157.1 L287.0 158.3 L287.1 159.6 L285.9 161.0Z" fill="#3c3a36" stroke="rgb(108,106,94)" stroke-width="0.8"/><path d="M446.3 528.5 L443.9 529.8 L441.7 528.2 L440.8 524.9 L444.2 523.9 L447.4 525.3Z" fill="#121211"/><path d="M440.4 526.5 A3.7 3.1 0 0 1 447.6 526.3" fill="none" stroke="rgb(99,97,85)" stroke-width="1.0"/><path d="M348.1 536.0 L346.3 533.4 L347.1 530.7 L350.0 530.0 L351.8 532.2 L350.8 534.8Z" fill="#121211"/><path d="M345.7 531.8 A3.5 3.0 0 0 1 352.6 532.7" fill="none" stroke="rgb(72,70,58)" stroke-width="1.0"/><path d="M116.7 431.4 L117.7 433.1 L116.3 434.5 L114.4 434.2 L113.5 432.4 L115.0 431.0Z" fill="#121211"/><path d="M113.9 431.5 A2.1 1.8 0 0 1 117.7 433.4" fill="none" stroke="rgb(90,88,76)" stroke-width="1.0"/><path d="M726.9 296.2 L726.6 297.3 L725.4 298.1 L724.7 296.9 L724.9 295.9 L725.9 295.3Z" fill="#121211"/><path d="M724.4 297.2 A1.4 1.2 0 0 1 726.7 295.5" fill="none" stroke="rgb(90,88,76)" stroke-width="1.0"/><path d="M631.2 440.3 L627.8 439.9 L626.6 436.7 L628.8 434.0 L632.2 434.5 L632.5 437.6Z" fill="#121211"/><path d="M626.9 437.9 A3.2 2.7 0 0 1 632.7 435.6" fill="none" stroke="rgb(77,75,63)" stroke-width="1.0"/><path d="M717.1 231.5 L718.1 231.1 L719.6 231.2 L719.5 232.9 L718.2 233.6 L717.1 232.8Z" fill="#3c3a36" stroke="rgb(121,119,107)" stroke-width="0.8"/><path d="M731.0 210.8 L730.9 213.1 L729.1 214.4 L727.1 213.2 L727.7 211.3 L729.0 210.6Z" fill="#3c3a36" stroke="rgb(105,103,91)" stroke-width="0.8"/><path d="M732.2 440.9 L731.6 443.1 L729.2 443.1 L727.8 441.2 L728.9 439.1 L731.0 439.4Z" fill="#121211"/><path d="M728.0 441.7 A2.3 2.0 0 0 1 732.1 439.7" fill="none" stroke="rgb(92,90,78)" stroke-width="1.0"/><path d="M166.0 297.4 L167.5 296.8 L168.7 297.2 L168.6 298.4 L167.8 299.2 L166.6 298.8Z" fill="#3c3a36" stroke="rgb(104,102,90)" stroke-width="0.8"/><path d="M212.4 517.5 L214.8 517.1 L216.4 518.9 L216.3 522.0 L213.1 521.8 L210.5 520.0Z" fill="#121211"/><path d="M211.2 517.8 A3.2 2.7 0 0 1 217.2 519.8" fill="none" stroke="rgb(78,76,64)" stroke-width="1.0"/><path d="M712.7 220.7 L713.6 219.9 L714.8 220.5 L714.6 221.8 L713.6 222.2 L712.2 222.0Z" fill="#3c3a36" stroke="rgb(127,125,113)" stroke-width="0.8"/><path d="M569.9 128.3 L572.0 128.5 L572.9 130.1 L572.4 131.9 L570.5 131.6 L569.3 130.4Z" fill="#3c3a36" stroke="rgb(96,94,82)" stroke-width="0.8"/><path d="M169.5 356.0 L167.9 356.0 L167.4 354.7 L167.7 353.4 L169.3 353.3 L170.1 354.6Z" fill="#121211"/><path d="M167.4 353.7 A1.5 1.3 0 0 1 170.0 355.2" fill="none" stroke="rgb(108,106,94)" stroke-width="1.0"/><path d="M110.2 298.5 L110.4 297.2 L111.6 297.0 L112.4 297.6 L112.3 298.6 L111.4 299.0Z" fill="#3c3a36" stroke="rgb(116,114,102)" stroke-width="0.8"/><path d="M250.8 155.6 L250.0 156.7 L248.8 156.3 L248.2 155.2 L249.1 154.5 L250.0 154.7Z" fill="#3c3a36" stroke="rgb(127,125,113)" stroke-width="0.8"/><path d="M180.2 379.5 L180.9 381.9 L179.2 383.3 L176.9 383.2 L176.1 380.9 L177.9 379.5Z" fill="#121211"/><path d="M176.5 379.8 A2.5 2.2 0 0 1 180.9 382.2" fill="none" stroke="rgb(126,124,112)" stroke-width="1.0"/><path d="M714.7 260.2 L714.3 258.4 L715.3 256.6 L717.3 257.2 L718.1 259.1 L716.6 260.6Z" fill="#121211"/><path d="M714.1 259.8 A2.2 1.8 0 0 1 717.4 257.1" fill="none" stroke="rgb(107,105,93)" stroke-width="1.0"/><path d="M175.9 347.4 L175.4 349.0 L173.8 348.8 L172.9 347.5 L173.6 346.0 L175.3 345.9Z" fill="#121211"/><path d="M173.1 346.2 A1.9 1.6 0 0 1 176.3 348.2" fill="none" stroke="rgb(121,119,107)" stroke-width="1.0"/><path d="M657.0 198.4 L657.4 196.8 L659.0 196.5 L659.9 197.7 L659.6 199.2 L658.3 198.9Z" fill="#3c3a36" stroke="rgb(106,104,92)" stroke-width="0.8"/><path d="M107.5 400.4 L108.4 399.1 L110.2 399.4 L110.7 401.2 L109.3 402.2 L107.4 402.3Z" fill="#121211"/><path d="M107.4 399.5 A2.0 1.7 0 0 1 110.7 401.4" fill="none" stroke="rgb(97,95,83)" stroke-width="1.0"/><path d="M660.0 159.2 L662.0 158.7 L662.4 160.6 L662.1 162.1 L660.6 161.8 L659.5 160.9Z" fill="#3c3a36" stroke="rgb(127,125,113)" stroke-width="0.8"/><path d="M727.7 327.5 L730.2 328.5 L731.2 330.9 L729.2 332.5 L727.2 331.7 L726.3 329.7Z" fill="#121211"/><path d="M726.2 331.3 A2.6 2.2 0 0 1 730.4 328.5" fill="none" stroke="rgb(123,121,109)" stroke-width="1.0"/><path d="M351.3 142.7 L349.8 144.2 L347.7 143.4 L347.2 141.0 L349.3 140.4 L350.9 140.9Z" fill="#3c3a36" stroke="rgb(127,125,113)" stroke-width="0.8"/><path d="M767.7 212.3 L765.9 212.5 L764.5 211.4 L765.2 209.9 L766.6 209.5 L767.9 210.4Z" fill="#3c3a36" stroke="rgb(100,98,86)" stroke-width="0.8"/><path d="M264.2 518.3 L264.8 516.2 L267.2 515.7 L268.6 517.8 L267.3 519.6 L265.2 520.3Z" fill="#121211"/><path d="M264.0 517.0 A2.4 2.0 0 0 1 268.6 518.2" fill="none" stroke="rgb(89,87,75)" stroke-width="1.0"/><path d="M522.7 102.8 L523.8 104.2 L523.9 105.5 L522.8 106.7 L520.8 106.0 L520.8 103.8Z" fill="#3c3a36" stroke="rgb(111,109,97)" stroke-width="0.8"/><path d="M110.1 312.3 L110.0 313.5 L108.9 314.3 L107.9 313.3 L107.4 311.7 L109.1 311.4Z" fill="#3c3a36" stroke="rgb(129,127,115)" stroke-width="0.8"/><path d="M814.9 291.1 L812.9 291.9 L811.2 291.3 L810.5 289.2 L812.5 288.2 L814.1 289.1Z" fill="#121211"/><path d="M810.7 291.2 A2.2 1.9 0 0 1 814.2 288.5" fill="none" stroke="rgb(91,89,77)" stroke-width="1.0"/><path d="M357.9 469.3 L355.6 468.9 L354.7 466.5 L356.4 464.3 L359.3 464.9 L359.9 467.7Z" fill="#121211"/><path d="M354.5 466.2 A2.9 2.4 0 0 1 360.1 467.0" fill="none" stroke="rgb(94,92,80)" stroke-width="1.0"/><path d="M683.1 305.8 L684.2 306.6 L684.4 308.2 L682.8 308.7 L681.5 307.7 L681.8 306.2Z" fill="#121211"/><path d="M681.4 307.8 A1.7 1.4 0 0 1 684.2 305.9" fill="none" stroke="rgb(120,118,106)" stroke-width="1.0"/><path d="M172.3 327.1 L170.9 327.6 L170.1 326.3 L170.6 325.1 L171.9 324.7 L172.7 325.8Z" fill="#121211"/><path d="M170.3 325.0 A1.5 1.3 0 0 1 172.9 326.7" fill="none" stroke="rgb(93,91,79)" stroke-width="1.0"/><path d="M766.7 262.8 L767.9 261.3 L770.0 261.9 L769.8 263.8 L768.8 265.5 L766.8 264.7Z" fill="#121211"/><path d="M766.6 264.3 A2.1 1.8 0 0 1 769.7 261.7" fill="none" stroke="rgb(92,90,78)" stroke-width="1.0"/><path d="M231.3 168.6 L232.3 168.9 L233.3 169.7 L232.6 171.0 L231.3 170.7 L230.8 169.7Z" fill="#3c3a36" stroke="rgb(132,130,118)" stroke-width="0.8"/><path d="M551.1 137.7 L552.1 137.2 L553.1 137.5 L553.6 138.7 L552.4 139.7 L550.9 139.2Z" fill="#3c3a36" stroke="rgb(134,132,120)" stroke-width="0.8"/><path d="M708.1 463.0 L708.4 461.4 L710.0 461.2 L711.3 462.1 L710.9 463.8 L709.3 464.2Z" fill="#121211"/><path d="M707.8 463.0 A1.9 1.6 0 0 1 711.2 461.5" fill="none" stroke="rgb(93,91,79)" stroke-width="1.0"/><path d="M721.3 327.9 L722.6 326.5 L724.2 327.4 L724.6 329.1 L723.3 330.2 L721.4 329.8Z" fill="#121211"/><path d="M720.9 329.4 A2.3 1.9 0 0 1 724.6 326.9" fill="none" stroke="rgb(106,104,92)" stroke-width="1.0"/><path d="M746.1 299.7 L746.1 301.4 L744.4 302.5 L742.8 301.2 L743.3 299.5 L744.8 298.2Z" fill="#121211"/><path d="M742.8 301.3 A2.1 1.7 0 0 1 746.0 298.9" fill="none" stroke="rgb(116,114,102)" stroke-width="1.0"/><circle cx="63" cy="25" r="1.6" fill="#6a5a48"/><circle cx="82" cy="21" r="1.6" fill="#6a5a48"/><circle cx="85" cy="31" r="1.6" fill="#6a5a48"/><circle cx="60" cy="54" r="1.6" fill="#6a5a48"/><circle cx="133" cy="19" r="1.6" fill="#6a5a48"/><circle cx="137" cy="33" r="1.6" fill="#6a5a48"/><circle cx="144" cy="22" r="1.6" fill="#6a5a48"/><circle cx="164" cy="23" r="1.6" fill="#6a5a48"/><circle cx="145" cy="35" r="1.6" fill="#6a5a48"/><linearGradient id="ringCg" x1="0" y1="0" x2="873" y2="0" gradientUnits="userSpaceOnUse"><stop offset="0" stop-color="#d0a030"/><stop offset="0.45" stop-color="#c8982c"/><stop offset="0.8" stop-color="#cc8a26"/><stop offset="1" stop-color="#d47e1e"/></linearGradient><path d="M-46.6 200.7 L-42.9 197.9 L-39.1 195.0 L-35.3 192.2 L-31.5 189.4 L-27.7 186.6 L-23.8 183.8 L-19.9 181.0 L-16.0 178.3 L-12.1 175.6 L-8.1 172.9 L-4.1 170.2 L-0.1 167.5 L3.9 164.9 L8.0 162.3 L12.0 159.6 L16.1 157.1 L20.2 154.5 L24.4 151.9 L28.5 149.4 L32.7 146.9 L36.9 144.4 L41.1 142.0 L45.4 139.5 L49.6 137.1 L53.9 134.7 L58.2 132.3 L62.6 130.0 L66.9 127.6 L71.3 125.3 L75.7 123.0 L80.1 120.7 L84.5 118.5 L88.9 116.3 L93.4 114.0 L97.9 111.9 L102.4 109.7 L106.9 107.6 L111.4 105.4 L116.0 103.3 L120.5 101.3 L125.1 99.2 L129.7 97.2 L134.3 95.2 L139.0 93.2 L143.6 91.2 L148.3 89.3 L153.0 87.4 L157.7 85.5 L162.4 83.6 L167.1 81.8 L171.9 79.9 L176.7 78.1 L181.4 76.4 L186.2 74.6 L191.0 72.9 L195.9 71.2 L200.7 69.5 L205.5 67.8 L210.4 66.2 L215.3 64.6 L220.2 63.0 L225.1 61.5 L230.0 59.9 L234.9 58.4 L239.9 56.9 L244.8 55.5 L249.8 54.0 L254.7 52.6 L259.7 51.2 L264.7 49.9 L269.7 48.5 L274.7 47.2 L279.8 45.9 L284.8 44.7 L289.9 43.4 L294.9 42.2 L300.0 41.0 L305.1 39.9 L310.2 38.7 L315.2 37.6 L320.3 36.5 L325.5 35.5 L330.6 34.4 L335.7 33.4 L340.8 32.4 L346.0 31.5 L351.1 30.5 L356.3 29.6 L361.5 28.8 L366.6 27.9 L371.8 27.1 L377.0 26.3 L382.2 25.5 L387.4 24.7 L392.6 24.0 L397.8 23.3 L403.0 22.6 L408.2 22.0 L413.4 21.4 L418.6 20.8 L423.8 20.2 L429.1 19.7 L434.3 19.1 L439.5 18.6 L444.8 18.2 L450.0 17.7 L455.3 17.3 L460.5 16.9 L465.8 16.6 L471.0 16.3 L476.3 15.9 L481.5 15.7 L486.8 15.4 L492.0 15.2 L497.3 15.0 L502.5 14.8 L507.8 14.7 L513.0 14.5 L518.3 14.4 L523.6 14.4 L528.8 14.3 L534.1 14.3 L539.3 14.3 L544.6 14.4 L549.8 14.4 L555.0 14.5 L560.3 14.6 L565.5 14.8 L570.8 14.9 L576.0 15.1 L581.2 15.4 L586.5 15.6 L591.7 15.9 L596.9 16.2 L602.1 16.5 L607.3 16.9 L612.5 17.2 L617.7 17.6 L622.9 18.1 L628.1 18.5 L633.3 19.0 L638.5 19.5 L643.7 20.1 L648.8 20.6 L654.0 21.2 L659.2 21.8 L664.3 22.5 L669.4 23.2 L674.6 23.9 L679.7 24.6 L684.8 25.3 L689.9 26.1 L695.0 26.9 L700.1 27.7 L705.2 28.6 L710.3 29.4 L715.3 30.3 L720.4 31.3 L725.4 32.2 L730.5 33.2 L735.5 34.2 L740.5 35.2 L745.5 36.3 L750.5 37.4 L755.5 38.5 L760.5 39.6 L765.4 40.8 L770.4 42.0 L775.3 43.2 L780.2 44.4 L785.2 45.6 L790.1 46.9 L794.9 48.2 L799.8 49.6 L804.7 50.9 L809.5 52.3 L814.4 53.7 L819.2 55.2 L824.0 56.6 L828.8 58.1 L833.5 59.6 L838.3 61.1 L843.0 62.7 L847.8 64.3 L852.5 65.9 L857.2 67.5 L861.9 69.1 L866.5 70.8 L871.2 72.5 L875.8 74.2 L880.4 76.0 L885.0 77.8 L889.6 79.5 L894.2 81.4 L898.7 83.2 L903.3 85.1 L907.8 87.0 L912.3 88.9 L916.7 90.8 L921.2 92.8" fill="none" stroke="url(#ringCg)" stroke-width="3"/><path d="M0 88 L290 -1" stroke="#5aa0aa" stroke-width="1" stroke-dasharray="3 3" opacity="0.8"/><path d="M0 31 L105 -2" stroke="#1a22b0" stroke-width="1" stroke-dasharray="3 2"/><path d="M931.8 566.4 L929.6 569.8 L927.4 573.3 L925.1 576.7 L922.7 580.1 L920.4 583.6 L917.9 587.0 L915.5 590.3 L912.9 593.7 L910.4 597.1 L907.8 600.4 L905.1 603.7 L902.4 607.0 L899.7 610.3 L896.9 613.6 L894.1 616.8 L891.2 620.1 L888.3 623.3 L885.4 626.5 L882.4 629.7 L879.4 632.9 L876.3 636.0 L873.2 639.1 L870.1 642.2 L866.9 645.3 L863.6 648.4 L860.4 651.4 L857.1 654.5 L853.7 657.5 L850.3 660.5 L846.9 663.4 L843.4 666.4 L840.0 669.3 L836.4 672.2 L832.8 675.0 L829.2 677.9 L825.6 680.7 L821.9 683.5 L818.2 686.3 L814.5 689.1 L810.7 691.8 L806.9 694.5 L803.0 697.2 L799.1 699.8 L795.2 702.5 L791.3 705.1 L787.3 707.7 L783.3 710.2 L779.2 712.7 L775.1 715.2 L771.0 717.7 L766.9 720.2 L762.7 722.6 L758.5 725.0 L754.3 727.3 L750.0 729.7 L745.8 732.0 L741.4 734.3 L737.1 736.5 L732.7 738.7 L728.4 740.9 L723.9 743.1 L719.5 745.2 L715.0 747.3 L710.5 749.4 L706.0 751.4 L701.5 753.5 L696.9 755.4 L692.3 757.4 L687.7 759.3 L683.1 761.2 L678.4 763.1 L673.7 764.9 L669.0 766.7 L664.3 768.4 L659.6 770.2 L654.8 771.9 L650.0 773.5 L645.2 775.2 L640.4 776.8 L635.6 778.3" fill="none" stroke="#d8d480" stroke-width="12" stroke-opacity="0.22" filter="url(#blur3)"/><path d="M193.6 777.3 L189.7 775.9 L185.7 774.4 L181.8 773.0 L177.9 771.5 L174.1 770.0 L170.2 768.4 L166.4 766.9 L162.6 765.3 L158.8 763.6 L155.0 762.0 L151.3 760.3 L147.6 758.7 L143.9 756.9 L140.2 755.2 L136.6 753.4 L132.9 751.6 L129.3 749.8 L125.8 748.0 L122.2 746.1 L118.7 744.3 L115.2 742.3 L111.7 740.4 L108.3 738.5 L104.9 736.5 L101.5 734.5 L98.1 732.5 L94.8 730.4 L91.5 728.4 L88.2 726.3 L85.0 724.2 L81.7 722.0 L78.5 719.9 L75.4 717.7 L72.2 715.5 L69.1 713.3 L66.1 711.0 L63.0 708.8 L60.0 706.5 L57.0 704.2 L54.0 701.9 L51.1 699.5 L48.2 697.2 L45.3 694.8 L42.5 692.4 L39.7 690.0 L36.9 687.5 L34.2 685.0 L31.5 682.6 L28.8 680.1 L26.2 677.6 L23.6 675.0 L21.0 672.5 L18.4 669.9 L15.9 667.3 L13.5 664.7 L11.0 662.1 L8.6 659.4 L6.2 656.8 L3.9 654.1 L1.6 651.4 L-0.7 648.7 L-2.9 646.0 L-5.1 643.2 L-7.3 640.5 L-9.4 637.7 L-11.5 634.9 L-13.6 632.1 L-15.6 629.3 L-17.6 626.5 L-19.5 623.6 L-21.5 620.8 L-23.3 617.9 L-25.2 615.0 L-27.0 612.1 L-28.8 609.2 L-30.5 606.3 L-32.2 603.3 L-33.9 600.4 L-35.5 597.4 L-37.1 594.4" fill="none" stroke="#d8d480" stroke-width="12" stroke-opacity="0.22" filter="url(#blur3)"/><path d="M931.8 566.4 L927.9 572.5" stroke="rgb(218, 214, 140)" stroke-width="4.0" stroke-linecap="round"/><path d="M927.9 572.5 L923.8 578.6" stroke="rgb(218, 214, 140)" stroke-width="4.0" stroke-linecap="round"/><path d="M923.8 578.6 L919.5 584.7" stroke="rgb(218, 214, 140)" stroke-width="4.0" stroke-linecap="round"/><path d="M919.5 584.7 L915.2 590.7" stroke="rgb(217, 213, 139)" stroke-width="4.1" stroke-linecap="round"/><path d="M915.2 590.7 L910.7 596.7" stroke="rgb(217, 213, 139)" stroke-width="4.1" stroke-linecap="round"/><path d="M910.7 596.7 L906.0 602.6" stroke="rgb(217, 213, 139)" stroke-width="4.1" stroke-linecap="round"/><path d="M906.0 602.6 L901.2 608.5" stroke="rgb(217, 213, 138)" stroke-width="4.1" stroke-linecap="round"/><path d="M901.2 608.5 L896.3 614.3" stroke="rgb(217, 213, 138)" stroke-width="4.1" stroke-linecap="round"/><path d="M896.3 614.3 L891.2 620.1" stroke="rgb(217, 213, 138)" stroke-width="4.1" stroke-linecap="round"/><path d="M891.2 620.1 L886.0 625.8" stroke="rgb(216, 212, 137)" stroke-width="4.1" stroke-linecap="round"/><path d="M886.0 625.8 L880.7 631.4" stroke="rgb(216, 212, 137)" stroke-width="4.1" stroke-linecap="round"/><path d="M880.7 631.4 L875.3 637.0" stroke="rgb(216, 212, 137)" stroke-width="4.1" stroke-linecap="round"/><path d="M875.3 637.0 L869.7 642.6" stroke="rgb(216, 212, 136)" stroke-width="4.1" stroke-linecap="round"/><path d="M869.7 642.6 L864.0 648.1" stroke="rgb(216, 212, 136)" stroke-width="4.1" stroke-linecap="round"/><path d="M864.0 648.1 L858.2 653.5" stroke="rgb(216, 212, 136)" stroke-width="4.1" stroke-linecap="round"/><path d="M858.2 653.5 L852.2 658.8" stroke="rgb(215, 211, 135)" stroke-width="4.1" stroke-linecap="round"/><path d="M852.2 658.8 L846.1 664.1" stroke="rgb(215, 211, 135)" stroke-width="4.1" stroke-linecap="round"/><path d="M846.1 664.1 L840.0 669.3" stroke="rgb(215, 211, 135)" stroke-width="4.1" stroke-linecap="round"/><path d="M840.0 669.3 L833.6 674.4" stroke="rgb(215, 211, 134)" stroke-width="4.1" stroke-linecap="round"/><path d="M833.6 674.4 L827.2 679.5" stroke="rgb(215, 211, 134)" stroke-width="4.1" stroke-linecap="round"/><path d="M827.2 679.5 L820.7 684.5" stroke="rgb(215, 211, 134)" stroke-width="4.1" stroke-linecap="round"/><path d="M820.7 684.5 L814.0 689.4" stroke="rgb(214, 210, 133)" stroke-width="4.1" stroke-linecap="round"/><path d="M814.0 689.4 L807.3 694.2" stroke="rgb(214, 210, 133)" stroke-width="4.1" stroke-linecap="round"/><path d="M807.3 694.2 L800.4 699.0" stroke="rgb(214, 210, 133)" stroke-width="4.1" stroke-linecap="round"/><path d="M800.4 699.0 L793.5 703.6" stroke="rgb(214, 210, 132)" stroke-width="4.1" stroke-linecap="round"/><path d="M793.5 703.6 L786.4 708.2" stroke="rgb(214, 210, 132)" stroke-width="4.1" stroke-linecap="round"/><path d="M786.4 708.2 L779.2 712.7" stroke="rgb(214, 210, 132)" stroke-width="4.1" stroke-linecap="round"/><path d="M779.2 712.7 L771.9 717.2" stroke="rgb(214, 210, 132)" stroke-width="4.2" stroke-linecap="round"/><path d="M771.9 717.2 L764.6 721.5" stroke="rgb(213, 209, 131)" stroke-width="4.2" stroke-linecap="round"/><path d="M764.6 721.5 L757.1 725.8" stroke="rgb(213, 209, 131)" stroke-width="4.2" stroke-linecap="round"/><path d="M757.1 725.8 L749.6 729.9" stroke="rgb(213, 209, 131)" stroke-width="4.2" stroke-linecap="round"/><path d="M749.6 729.9 L741.9 734.0" stroke="rgb(213, 209, 130)" stroke-width="4.2" stroke-linecap="round"/><path d="M741.9 734.0 L734.2 738.0" stroke="rgb(213, 209, 130)" stroke-width="4.2" stroke-linecap="round"/><path d="M734.2 738.0 L726.4 741.9" stroke="rgb(213, 209, 130)" stroke-width="4.2" stroke-linecap="round"/><path d="M726.4 741.9 L718.5 745.7" stroke="rgb(212, 208, 129)" stroke-width="4.2" stroke-linecap="round"/><path d="M718.5 745.7 L710.5 749.4" stroke="rgb(212, 208, 129)" stroke-width="4.2" stroke-linecap="round"/><path d="M710.5 749.4 L702.5 753.0" stroke="rgb(212, 208, 129)" stroke-width="4.2" stroke-linecap="round"/><path d="M702.5 753.0 L694.3 756.5" stroke="rgb(212, 208, 128)" stroke-width="4.2" stroke-linecap="round"/><path d="M694.3 756.5 L686.1 759.9" stroke="rgb(212, 208, 128)" stroke-width="4.2" stroke-linecap="round"/><path d="M686.1 759.9 L677.9 763.3" stroke="rgb(212, 208, 128)" stroke-width="4.2" stroke-linecap="round"/><path d="M677.9 763.3 L669.5 766.5" stroke="rgb(211, 207, 127)" stroke-width="4.2" stroke-linecap="round"/><path d="M669.5 766.5 L661.1 769.6" stroke="rgb(211, 207, 127)" stroke-width="4.2" stroke-linecap="round"/><path d="M661.1 769.6 L652.7 772.6" stroke="rgb(211, 207, 127)" stroke-width="4.2" stroke-linecap="round"/><path d="M652.7 772.6 L644.1 775.5" stroke="rgb(211, 207, 127)" stroke-width="4.2" stroke-linecap="round"/><path d="M644.1 775.5 L635.6 778.3" stroke="rgb(211, 207, 126)" stroke-width="4.2" stroke-linecap="round"/><path d="M193.6 777.3 L185.7 774.4" stroke="rgb(207, 200, 113)" stroke-width="4.2" stroke-linecap="round"/><path d="M185.7 774.4 L177.9 771.5" stroke="rgb(207, 200, 112)" stroke-width="4.2" stroke-linecap="round"/><path d="M177.9 771.5 L170.2 768.4" stroke="rgb(207, 200, 112)" stroke-width="4.2" stroke-linecap="round"/><path d="M170.2 768.4 L162.6 765.3" stroke="rgb(207, 200, 112)" stroke-width="4.2" stroke-linecap="round"/><path d="M162.6 765.3 L155.0 762.0" stroke="rgb(207, 200, 112)" stroke-width="4.2" stroke-linecap="round"/><path d="M155.0 762.0 L147.6 758.7" stroke="rgb(207, 200, 112)" stroke-width="4.2" stroke-linecap="round"/><path d="M147.6 758.7 L140.2 755.2" stroke="rgb(207, 200, 112)" stroke-width="4.2" stroke-linecap="round"/><path d="M140.2 755.2 L132.9 751.6" stroke="rgb(207, 200, 112)" stroke-width="4.2" stroke-linecap="round"/><path d="M132.9 751.6 L125.8 748.0" stroke="rgb(207, 200, 112)" stroke-width="4.1" stroke-linecap="round"/><path d="M125.8 748.0 L118.7 744.3" stroke="rgb(207, 200, 112)" stroke-width="4.1" stroke-linecap="round"/><path d="M118.7 744.3 L111.7 740.4" stroke="rgb(207, 200, 112)" stroke-width="4.1" stroke-linecap="round"/><path d="M111.7 740.4 L104.9 736.5" stroke="rgb(207, 200, 112)" stroke-width="4.1" stroke-linecap="round"/><path d="M104.9 736.5 L98.1 732.5" stroke="rgb(207, 200, 112)" stroke-width="4.0" stroke-linecap="round"/><path d="M98.1 732.5 L91.5 728.4" stroke="rgb(207, 200, 112)" stroke-width="4.0" stroke-linecap="round"/><path d="M91.5 728.4 L85.0 724.2" stroke="rgb(207, 200, 112)" stroke-width="4.0" stroke-linecap="round"/><path d="M85.0 724.2 L78.5 719.9" stroke="rgb(207, 200, 112)" stroke-width="4.0" stroke-linecap="round"/><path d="M78.5 719.9 L72.2 715.5" stroke="rgb(207, 200, 112)" stroke-width="4.0" stroke-linecap="round"/><path d="M72.2 715.5 L66.1 711.0" stroke="rgb(207, 200, 112)" stroke-width="4.0" stroke-linecap="round"/><path d="M66.1 711.0 L60.0 706.5" stroke="rgb(207, 200, 112)" stroke-width="3.9" stroke-linecap="round"/><path d="M60.0 706.5 L54.0 701.9" stroke="rgb(207, 200, 112)" stroke-width="3.9" stroke-linecap="round"/><path d="M54.0 701.9 L48.2 697.2" stroke="rgb(207, 200, 112)" stroke-width="3.9" stroke-linecap="round"/><path d="M48.2 697.2 L42.5 692.4" stroke="rgb(207, 200, 112)" stroke-width="3.9" stroke-linecap="round"/><path d="M42.5 692.4 L36.9 687.5" stroke="rgb(207, 200, 112)" stroke-width="3.9" stroke-linecap="round"/><path d="M36.9 687.5 L31.5 682.6" stroke="rgb(207, 200, 112)" stroke-width="3.8" stroke-linecap="round"/><path d="M31.5 682.6 L26.2 677.6" stroke="rgb(207, 200, 112)" stroke-width="3.8" stroke-linecap="round"/><path d="M26.2 677.6 L21.0 672.5" stroke="rgb(207, 200, 112)" stroke-width="3.8" stroke-linecap="round"/><path d="M21.0 672.5 L15.9 667.3" stroke="rgb(207, 200, 112)" stroke-width="3.8" stroke-linecap="round"/><path d="M15.9 667.3 L11.0 662.1" stroke="rgb(207, 200, 112)" stroke-width="3.8" stroke-linecap="round"/><path d="M11.0 662.1 L6.2 656.8" stroke="rgb(207, 200, 112)" stroke-width="3.7" stroke-linecap="round"/><path d="M6.2 656.8 L1.6 651.4" stroke="rgb(207, 200, 112)" stroke-width="3.7" stroke-linecap="round"/><path d="M1.6 651.4 L-2.9 646.0" stroke="rgb(207, 200, 112)" stroke-width="3.7" stroke-linecap="round"/><path d="M-2.9 646.0 L-7.3 640.5" stroke="rgb(207, 200, 112)" stroke-width="3.7" stroke-linecap="round"/><path d="M-7.3 640.5 L-11.5 634.9" stroke="rgb(207, 200, 112)" stroke-width="3.7" stroke-linecap="round"/><path d="M-11.5 634.9 L-15.6 629.3" stroke="rgb(207, 200, 112)" stroke-width="3.6" stroke-linecap="round"/><path d="M-15.6 629.3 L-19.5 623.6" stroke="rgb(207, 200, 112)" stroke-width="3.6" stroke-linecap="round"/><path d="M-19.5 623.6 L-23.3 617.9" stroke="rgb(207, 200, 112)" stroke-width="3.6" stroke-linecap="round"/><path d="M-23.3 617.9 L-27.0 612.1" stroke="rgb(207, 200, 113)" stroke-width="3.6" stroke-linecap="round"/><path d="M-27.0 612.1 L-30.5 606.3" stroke="rgb(208, 201, 115)" stroke-width="3.5" stroke-linecap="round"/><path d="M-30.5 606.3 L-33.9 600.4" stroke="rgb(208, 201, 116)" stroke-width="3.5" stroke-linecap="round"/><path d="M-33.9 600.4 L-37.1 594.4" stroke="rgb(208, 202, 117)" stroke-width="3.5" stroke-linecap="round"/><path d="M-19.4 306.2 L-15.5 300.1" stroke="rgb(228, 222, 175)" stroke-width="2.1" stroke-linecap="round"/><path d="M-15.5 300.1 L-11.4 294.0" stroke="rgb(228, 222, 176)" stroke-width="2.1" stroke-linecap="round"/><path d="M-11.4 294.0 L-7.1 287.9" stroke="rgb(229, 223, 178)" stroke-width="2.0" stroke-linecap="round"/><path d="M-7.1 287.9 L-2.8 281.9" stroke="rgb(229, 223, 179)" stroke-width="2.0" stroke-linecap="round"/><path d="M-2.8 281.9 L1.7 275.9" stroke="rgb(230, 223, 179)" stroke-width="2.0" stroke-linecap="round"/><path d="M1.7 275.9 L6.4 270.0" stroke="rgb(230, 223, 179)" stroke-width="2.0" stroke-linecap="round"/><path d="M6.4 270.0 L11.2 264.1" stroke="rgb(230, 223, 179)" stroke-width="2.0" stroke-linecap="round"/><path d="M11.2 264.1 L16.1 258.3" stroke="rgb(230, 223, 179)" stroke-width="2.0" stroke-linecap="round"/><path d="M16.1 258.3 L21.2 252.5" stroke="rgb(230, 223, 179)" stroke-width="2.0" stroke-linecap="round"/><path d="M21.2 252.5 L26.4 246.8" stroke="rgb(230, 223, 179)" stroke-width="2.0" stroke-linecap="round"/><path d="M26.4 246.8 L31.7 241.2" stroke="rgb(230, 223, 179)" stroke-width="2.0" stroke-linecap="round"/><path d="M31.7 241.2 L37.1 235.6" stroke="rgb(231, 223, 179)" stroke-width="2.0" stroke-linecap="round"/><path d="M37.1 235.6 L42.7 230.0" stroke="rgb(231, 223, 178)" stroke-width="2.0" stroke-linecap="round"/><path d="M42.7 230.0 L48.4 224.5" stroke="rgb(231, 223, 178)" stroke-width="2.0" stroke-linecap="round"/><path d="M48.4 224.5 L54.2 219.1" stroke="rgb(231, 223, 178)" stroke-width="2.0" stroke-linecap="round"/><path d="M54.2 219.1 L60.2 213.8" stroke="rgb(231, 223, 178)" stroke-width="2.0" stroke-linecap="round"/><path d="M60.2 213.8 L66.3 208.5" stroke="rgb(231, 223, 178)" stroke-width="2.0" stroke-linecap="round"/><path d="M66.3 208.5 L72.4 203.3" stroke="rgb(231, 223, 178)" stroke-width="2.0" stroke-linecap="round"/><path d="M72.4 203.3 L78.8 198.2" stroke="rgb(231, 223, 178)" stroke-width="2.0" stroke-linecap="round"/><path d="M78.8 198.2 L85.2 193.1" stroke="rgb(232, 223, 177)" stroke-width="2.0" stroke-linecap="round"/><path d="M85.2 193.1 L91.7 188.1" stroke="rgb(232, 223, 177)" stroke-width="2.0" stroke-linecap="round"/><path d="M91.7 188.1 L98.4 183.2" stroke="rgb(232, 223, 177)" stroke-width="2.0" stroke-linecap="round"/><path d="M98.4 183.2 L105.1 178.4" stroke="rgb(232, 223, 177)" stroke-width="2.0" stroke-linecap="round"/><path d="M105.1 178.4 L112.0 173.6" stroke="rgb(232, 223, 177)" stroke-width="2.0" stroke-linecap="round"/><path d="M112.0 173.6 L118.9 169.0" stroke="rgb(232, 223, 177)" stroke-width="2.0" stroke-linecap="round"/><path d="M118.9 169.0 L126.0 164.4" stroke="rgb(232, 223, 177)" stroke-width="2.0" stroke-linecap="round"/><path d="M126.0 164.4 L133.2 159.9" stroke="rgb(233, 223, 177)" stroke-width="2.0" stroke-linecap="round"/><path d="M133.2 159.9 L140.5 155.4" stroke="rgb(233, 223, 176)" stroke-width="2.0" stroke-linecap="round"/><path d="M140.5 155.4 L147.8 151.1" stroke="rgb(233, 223, 176)" stroke-width="2.0" stroke-linecap="round"/><path d="M147.8 151.1 L155.3 146.8" stroke="rgb(233, 223, 176)" stroke-width="2.0" stroke-linecap="round"/><path d="M155.3 146.8 L162.8 142.7" stroke="rgb(233, 223, 176)" stroke-width="2.0" stroke-linecap="round"/><path d="M162.8 142.7 L170.5 138.6" stroke="rgb(233, 223, 176)" stroke-width="2.0" stroke-linecap="round"/><path d="M170.5 138.6 L178.2 134.6" stroke="rgb(233, 223, 176)" stroke-width="2.0" stroke-linecap="round"/><path d="M178.2 134.6 L186.0 130.7" stroke="rgb(233, 223, 176)" stroke-width="2.0" stroke-linecap="round"/><path d="M186.0 130.7 L193.9 126.9" stroke="rgb(229, 215, 168)" stroke-width="2.0" stroke-linecap="round"/><path d="M193.9 126.9 L201.9 123.2" stroke="rgb(221, 201, 152)" stroke-width="2.0" stroke-linecap="round"/><path d="M201.9 123.2 L209.9 119.6" stroke="rgb(213, 187, 136)" stroke-width="1.9" stroke-linecap="round"/><path d="M209.9 119.6 L218.1 116.1" stroke="rgb(205, 173, 120)" stroke-width="1.9" stroke-linecap="round"/><path d="M218.1 116.1 L226.3 112.7" stroke="rgb(197, 159, 104)" stroke-width="1.9" stroke-linecap="round"/><path d="M226.3 112.7 L234.5 109.3" stroke="rgb(188, 145, 88)" stroke-width="1.9" stroke-linecap="round"/><path d="M234.5 109.3 L242.9 106.1" stroke="rgb(180, 131, 72)" stroke-width="1.9" stroke-linecap="round"/><path d="M242.9 106.1 L251.3 103.0" stroke="rgb(172, 117, 56)" stroke-width="1.8" stroke-linecap="round"/><path d="M251.3 103.0 L259.7 100.0" stroke="rgb(164, 103, 40)" stroke-width="1.8" stroke-linecap="round"/><path d="M259.7 100.0 L268.3 97.1" stroke="rgb(158, 95, 31)" stroke-width="1.8" stroke-linecap="round"/><path d="M268.3 97.1 L276.8 94.3" stroke="rgb(156, 94, 31)" stroke-width="1.8" stroke-linecap="round"/><path d="M276.8 94.3 L285.5 91.5" stroke="rgb(153, 92, 30)" stroke-width="1.8" stroke-linecap="round"/><path d="M285.5 91.5 L294.2 88.9" stroke="rgb(151, 91, 30)" stroke-width="1.8" stroke-linecap="round"/><path d="M294.2 88.9 L302.9 86.5" stroke="rgb(148, 90, 29)" stroke-width="1.8" stroke-linecap="round"/><path d="M302.9 86.5 L311.7 84.1" stroke="rgb(146, 89, 29)" stroke-width="1.8" stroke-linecap="round"/><path d="M311.7 84.1 L320.5 81.8" stroke="rgb(144, 88, 29)" stroke-width="1.8" stroke-linecap="round"/><path d="M320.5 81.8 L329.4 79.6" stroke="rgb(141, 86, 28)" stroke-width="1.7" stroke-linecap="round"/><path d="M329.4 79.6 L338.3 77.5" stroke="rgb(139, 85, 28)" stroke-width="1.7" stroke-linecap="round"/><path d="M338.3 77.5 L347.2 75.6" stroke="rgb(136, 84, 27)" stroke-width="1.7" stroke-linecap="round"/><path d="M347.2 75.6 L356.2 73.7" stroke="rgb(134, 83, 27)" stroke-width="1.7" stroke-linecap="round"/><path d="M356.2 73.7 L365.2 72.0" stroke="rgb(131, 81, 26)" stroke-width="1.7" stroke-linecap="round"/><path d="M365.2 72.0 L374.2 70.4" stroke="rgb(129, 80, 26)" stroke-width="1.7" stroke-linecap="round"/><path d="M374.2 70.4 L383.3 68.9" stroke="rgb(126, 79, 25)" stroke-width="1.7" stroke-linecap="round"/><path d="M383.3 68.9 L392.4 67.5" stroke="rgb(124, 78, 25)" stroke-width="1.7" stroke-linecap="round"/><path d="M392.4 67.5 L401.5 66.2" stroke="rgb(121, 76, 24)" stroke-width="1.7" stroke-linecap="round"/><path d="M401.5 66.2 L410.6 65.0" stroke="rgb(119, 75, 24)" stroke-width="1.7" stroke-linecap="round"/><path d="M410.6 65.0 L419.7 63.9" stroke="rgb(116, 74, 23)" stroke-width="1.7" stroke-linecap="round"/><path d="M419.7 63.9 L428.9 63.0" stroke="rgb(114, 73, 23)" stroke-width="1.7" stroke-linecap="round"/><path d="M428.9 63.0 L438.0 62.1" stroke="rgb(112, 72, 23)" stroke-width="1.7" stroke-linecap="round"/><path d="M438.0 62.1 L447.2 61.4" stroke="rgb(109, 70, 22)" stroke-width="1.6" stroke-linecap="round"/><path d="M447.2 61.4 L456.4 60.8" stroke="rgb(107, 69, 22)" stroke-width="1.6" stroke-linecap="round"/><path d="M456.4 60.8 L465.5 60.3" stroke="rgb(104, 68, 21)" stroke-width="1.6" stroke-linecap="round"/><path d="M465.5 60.3 L474.7 59.9" stroke="rgb(102, 67, 21)" stroke-width="1.6" stroke-linecap="round"/><path d="M474.7 59.9 L483.8 59.7" stroke="rgb(99, 65, 20)" stroke-width="1.6" stroke-linecap="round"/><path d="M483.8 59.7 L493.0 59.5" stroke="rgb(97, 64, 20)" stroke-width="1.6" stroke-linecap="round"/><path d="M493.0 59.5 L502.1 59.5" stroke="rgb(97, 64, 20)" stroke-width="1.6" stroke-linecap="round"/><path d="M502.1 59.5 L511.2 59.6" stroke="rgb(99, 66, 20)" stroke-width="1.6" stroke-linecap="round"/><path d="M511.2 59.6 L520.3 59.8" stroke="rgb(101, 67, 21)" stroke-width="1.6" stroke-linecap="round"/><path d="M520.3 59.8 L529.4 60.1" stroke="rgb(103, 69, 22)" stroke-width="1.6" stroke-linecap="round"/><path d="M529.4 60.1 L538.5 60.5" stroke="rgb(105, 70, 22)" stroke-width="1.6" stroke-linecap="round"/><path d="M538.5 60.5 L547.5 61.0" stroke="rgb(107, 72, 23)" stroke-width="1.7" stroke-linecap="round"/><path d="M547.5 61.0 L556.5 61.7" stroke="rgb(109, 73, 23)" stroke-width="1.7" stroke-linecap="round"/><path d="M556.5 61.7 L565.5 62.4" stroke="rgb(111, 75, 24)" stroke-width="1.7" stroke-linecap="round"/><path d="M565.5 62.4 L574.4 63.3" stroke="rgb(113, 76, 24)" stroke-width="1.7" stroke-linecap="round"/><path d="M574.4 63.3 L583.3 64.3" stroke="rgb(115, 78, 25)" stroke-width="1.7" stroke-linecap="round"/><path d="M583.3 64.3 L592.2 65.4" stroke="rgb(117, 80, 26)" stroke-width="1.7" stroke-linecap="round"/><path d="M592.2 65.4 L601.0 66.6" stroke="rgb(119, 81, 26)" stroke-width="1.7" stroke-linecap="round"/><path d="M601.0 66.6 L609.8 68.0" stroke="rgb(121, 83, 27)" stroke-width="1.7" stroke-linecap="round"/><path d="M609.8 68.0 L618.5 69.4" stroke="rgb(123, 84, 27)" stroke-width="1.7" stroke-linecap="round"/><path d="M618.5 69.4 L627.2 71.0" stroke="rgb(125, 86, 28)" stroke-width="1.7" stroke-linecap="round"/><path d="M627.2 71.0 L635.9 72.6" stroke="rgb(127, 87, 28)" stroke-width="1.7" stroke-linecap="round"/><path d="M635.9 72.6 L644.4 74.4" stroke="rgb(129, 89, 29)" stroke-width="1.8" stroke-linecap="round"/><path d="M644.4 74.4 L653.0 76.3" stroke="rgb(131, 90, 30)" stroke-width="1.8" stroke-linecap="round"/><path d="M653.0 76.3 L661.4 78.3" stroke="rgb(133, 92, 30)" stroke-width="1.8" stroke-linecap="round"/><path d="M661.4 78.3 L669.8 80.4" stroke="rgb(135, 93, 31)" stroke-width="1.8" stroke-linecap="round"/><path d="M669.8 80.4 L678.2 82.6" stroke="rgb(137, 95, 31)" stroke-width="1.8" stroke-linecap="round"/><path d="M678.2 82.6 L686.4 85.0" stroke="rgb(139, 97, 32)" stroke-width="1.8" stroke-linecap="round"/><path d="M686.4 85.0 L694.6 87.4" stroke="rgb(143, 100, 33)" stroke-width="1.8" stroke-linecap="round"/><path d="M694.6 87.4 L702.7 89.9" stroke="rgb(147, 103, 34)" stroke-width="1.8" stroke-linecap="round"/><path d="M702.7 89.9 L710.8 92.6" stroke="rgb(150, 105, 34)" stroke-width="1.8" stroke-linecap="round"/><path d="M710.8 92.6 L718.8 95.3" stroke="rgb(154, 108, 35)" stroke-width="1.9" stroke-linecap="round"/><path d="M718.8 95.3 L726.7 98.2" stroke="rgb(157, 111, 36)" stroke-width="1.9" stroke-linecap="round"/><path d="M726.7 98.2 L734.5 101.1" stroke="rgb(161, 114, 37)" stroke-width="1.9" stroke-linecap="round"/><path d="M734.5 101.1 L742.2 104.2" stroke="rgb(165, 117, 38)" stroke-width="1.9" stroke-linecap="round"/><path d="M742.2 104.2 L749.8 107.3" stroke="rgb(168, 119, 38)" stroke-width="1.9" stroke-linecap="round"/><path d="M749.8 107.3 L757.4 110.6" stroke="rgb(172, 122, 39)" stroke-width="1.9" stroke-linecap="round"/><path d="M757.4 110.6 L764.8 113.9" stroke="rgb(175, 125, 40)" stroke-width="1.9" stroke-linecap="round"/><path d="M764.8 113.9 L772.2 117.4" stroke="rgb(179, 128, 41)" stroke-width="2.0" stroke-linecap="round"/><path d="M772.2 117.4 L779.5 121.0" stroke="rgb(183, 131, 42)" stroke-width="2.0" stroke-linecap="round"/><path d="M779.5 121.0 L786.6 124.6" stroke="rgb(186, 133, 42)" stroke-width="2.0" stroke-linecap="round"/><path d="M786.6 124.6 L793.7 128.3" stroke="rgb(190, 136, 43)" stroke-width="2.0" stroke-linecap="round"/><path d="M793.7 128.3 L800.7 132.2" stroke="rgb(192, 138, 43)" stroke-width="2.0" stroke-linecap="round"/><path d="M800.7 132.2 L807.5 136.1" stroke="rgb(193, 138, 43)" stroke-width="2.0" stroke-linecap="round"/><path d="M807.5 136.1 L814.3 140.1" stroke="rgb(194, 139, 43)" stroke-width="2.0" stroke-linecap="round"/><path d="M814.3 140.1 L820.9 144.2" stroke="rgb(195, 139, 43)" stroke-width="2.0" stroke-linecap="round"/><path d="M820.9 144.2 L827.4 148.4" stroke="rgb(196, 139, 42)" stroke-width="2.1" stroke-linecap="round"/><path d="M827.4 148.4 L833.9 152.7" stroke="rgb(197, 140, 42)" stroke-width="2.1" stroke-linecap="round"/><path d="M833.9 152.7 L840.2 157.1" stroke="rgb(198, 140, 42)" stroke-width="2.1" stroke-linecap="round"/><path d="M840.2 157.1 L846.3 161.6" stroke="rgb(200, 141, 42)" stroke-width="2.1" stroke-linecap="round"/><path d="M846.3 161.6 L852.4 166.1" stroke="rgb(201, 141, 41)" stroke-width="2.1" stroke-linecap="round"/><path d="M852.4 166.1 L858.4 170.7" stroke="rgb(202, 141, 41)" stroke-width="2.1" stroke-linecap="round"/><path d="M858.4 170.7 L864.2 175.4" stroke="rgb(203, 142, 41)" stroke-width="2.1" stroke-linecap="round"/><path d="M864.2 175.4 L869.9 180.2" stroke="rgb(204, 142, 40)" stroke-width="2.2" stroke-linecap="round"/><path d="M869.9 180.2 L875.5 185.1" stroke="rgb(205, 143, 40)" stroke-width="2.2" stroke-linecap="round"/><path d="M875.5 185.1 L880.9 190.0" stroke="rgb(206, 143, 40)" stroke-width="2.2" stroke-linecap="round"/><path d="M880.9 190.0 L886.2 195.0" stroke="rgb(207, 143, 40)" stroke-width="2.2" stroke-linecap="round"/><path d="M886.2 195.0 L891.4 200.1" stroke="rgb(208, 144, 41)" stroke-width="2.2" stroke-linecap="round"/><path d="M891.4 200.1 L896.5 205.3" stroke="rgb(208, 146, 43)" stroke-width="2.3" stroke-linecap="round"/><ellipse cx="436.0" cy="293.3" rx="238.9" ry="151.7" transform="rotate(-7.78 436.0 293.3)" fill="none" stroke="#fff000" stroke-width="1.4"/><ellipse cx="443.2" cy="345.5" rx="372.4" ry="246.5" transform="rotate(-6.94 443.2 345.5)" fill="none" stroke="#fff000" stroke-width="1.4"/><path d="M64 0 L356 205" stroke="#d8d8d8" stroke-width="1.2"/><path d="M397 0 L420 179" stroke="#e0e0e0" stroke-width="1.2"/><circle cx="228" cy="113.5" r="40.5" fill="#ecdcc0"/><g clip-path="url(#plclip)"><g transform="rotate(-12 228 113.5)" filter="url(#blur06)"><ellipse cx="243.5" cy="71.7" rx="20.3" ry="1.7" fill="#c89060" opacity="0.8"/><ellipse cx="197.9" cy="73.8" rx="14.4" ry="1.7" fill="#c89060" opacity="0.8"/><ellipse cx="206.0" cy="73.5" rx="12.7" ry="1.7" fill="#f0c070" opacity="0.8"/><ellipse cx="232.7" cy="75.9" rx="6.2" ry="0.9" fill="#d88a30" opacity="0.8"/><ellipse cx="251.5" cy="76.7" rx="13.0" ry="1.5" fill="#e8a850" opacity="0.8"/><ellipse cx="235.5" cy="78.0" rx="8.3" ry="0.7" fill="#e09a40" opacity="0.8"/><ellipse cx="209.8" cy="79.6" rx="23.7" ry="1.7" fill="#d88a30" opacity="0.8"/><ellipse cx="208.7" cy="81.3" rx="21.8" ry="1.4" fill="#f4ecde" opacity="0.8"/><ellipse cx="240.2" cy="84.0" rx="23.4" ry="1.7" fill="#d88a30" opacity="0.8"/><ellipse cx="222.6" cy="83.6" rx="22.8" ry="1.0" fill="#8a7866" opacity="0.8"/><ellipse cx="234.6" cy="85.6" rx="6.1" ry="1.4" fill="#8a7866" opacity="0.8"/><ellipse cx="218.7" cy="86.6" rx="11.5" ry="1.5" fill="#f4ecde" opacity="0.8"/><ellipse cx="241.1" cy="88.9" rx="7.0" ry="1.8" fill="#e09a40" opacity="0.8"/><ellipse cx="218.9" cy="91.2" rx="13.3" ry="1.3" fill="#f0c070" opacity="0.8"/><ellipse cx="233.0" cy="91.5" rx="6.2" ry="0.8" fill="#f4ecde" opacity="0.8"/><ellipse cx="257.1" cy="93.5" rx="8.1" ry="1.0" fill="#fbf6ee" opacity="0.8"/><ellipse cx="218.7" cy="94.4" rx="15.4" ry="1.6" fill="#e8a850" opacity="0.8"/><ellipse cx="246.0" cy="96.3" rx="12.6" ry="1.0" fill="#f0c070" opacity="0.8"/><ellipse cx="201.8" cy="98.5" rx="12.1" ry="1.4" fill="#f4ecde" opacity="0.8"/><ellipse cx="255.1" cy="98.7" rx="15.8" ry="1.0" fill="#8a7866" opacity="0.8"/><ellipse cx="247.1" cy="100.1" rx="17.3" ry="1.5" fill="#d88a30" opacity="0.8"/><ellipse cx="206.3" cy="102.9" rx="6.9" ry="1.8" fill="#e0a050" opacity="0.8"/><ellipse cx="198.0" cy="104.2" rx="19.3" ry="1.1" fill="#d88a30" opacity="0.8"/><ellipse cx="223.0" cy="104.8" rx="7.0" ry="1.7" fill="#e09a40" opacity="0.8"/><ellipse cx="217.4" cy="106.9" rx="9.7" ry="1.8" fill="#f8f2e8" opacity="0.8"/><ellipse cx="236.3" cy="108.6" rx="20.2" ry="0.8" fill="#f0c070" opacity="0.8"/><ellipse cx="199.8" cy="108.9" rx="13.6" ry="0.9" fill="#f8f2e8" opacity="0.8"/><ellipse cx="258.5" cy="111.4" rx="14.2" ry="1.2" fill="#8a7866" opacity="0.8"/><ellipse cx="214.6" cy="112.1" rx="13.3" ry="0.9" fill="#f0c070" opacity="0.8"/><ellipse cx="230.0" cy="114.2" rx="9.2" ry="1.7" fill="#8a7866" opacity="0.8"/><ellipse cx="227.5" cy="114.4" rx="15.3" ry="1.3" fill="#e0a050" opacity="0.8"/><ellipse cx="246.3" cy="116.2" rx="19.9" ry="1.5" fill="#c89060" opacity="0.8"/><ellipse cx="215.6" cy="117.0" rx="16.1" ry="1.4" fill="#fbf6ee" opacity="0.8"/><ellipse cx="258.8" cy="118.9" rx="18.9" ry="1.8" fill="#8a7866" opacity="0.8"/><ellipse cx="233.2" cy="121.1" rx="6.2" ry="1.3" fill="#d88a30" opacity="0.8"/><ellipse cx="213.5" cy="121.9" rx="11.2" ry="1.3" fill="#c89060" opacity="0.8"/><ellipse cx="218.3" cy="124.3" rx="17.6" ry="1.5" fill="#f0c070" opacity="0.8"/><ellipse cx="249.9" cy="124.9" rx="21.7" ry="1.5" fill="#8a7866" opacity="0.8"/><ellipse cx="229.2" cy="127.5" rx="15.5" ry="0.9" fill="#8a7866" opacity="0.8"/><ellipse cx="226.5" cy="128.9" rx="18.4" ry="1.5" fill="#f0c070" opacity="0.8"/><ellipse cx="245.9" cy="128.8" rx="16.5" ry="1.4" fill="#f0c070" opacity="0.8"/><ellipse cx="231.4" cy="130.6" rx="21.6" ry="1.0" fill="#e09a40" opacity="0.8"/><ellipse cx="233.5" cy="131.8" rx="17.2" ry="0.9" fill="#c89060" opacity="0.8"/><ellipse cx="242.0" cy="133.2" rx="23.8" ry="1.8" fill="#f4ecde" opacity="0.8"/><ellipse cx="204.5" cy="134.4" rx="11.7" ry="0.9" fill="#fbf6ee" opacity="0.8"/><ellipse cx="222.6" cy="136.8" rx="12.3" ry="1.4" fill="#e8a850" opacity="0.8"/><ellipse cx="211.2" cy="138.4" rx="22.3" ry="0.7" fill="#f0c070" opacity="0.8"/><ellipse cx="250.8" cy="140.6" rx="21.6" ry="1.5" fill="#e0a050" opacity="0.8"/><ellipse cx="198.3" cy="140.8" rx="17.0" ry="0.8" fill="#e0a050" opacity="0.8"/><ellipse cx="256.9" cy="142.6" rx="11.3" ry="1.1" fill="#f4ecde" opacity="0.8"/><ellipse cx="248.0" cy="143.8" rx="17.6" ry="1.1" fill="#f4ecde" opacity="0.8"/><ellipse cx="220.5" cy="144.8" rx="14.6" ry="0.9" fill="#f4ecde" opacity="0.8"/><ellipse cx="218.5" cy="147.1" rx="22.1" ry="0.7" fill="#e8a850" opacity="0.8"/><ellipse cx="254.7" cy="148.0" rx="15.7" ry="1.1" fill="#f8f2e8" opacity="0.8"/><ellipse cx="223.6" cy="149.6" rx="10.1" ry="1.0" fill="#f0c070" opacity="0.8"/><ellipse cx="250.7" cy="151.0" rx="8.9" ry="1.4" fill="#d88a30" opacity="0.8"/><ellipse cx="222.6" cy="152.7" rx="11.7" ry="1.8" fill="#fbf6ee" opacity="0.8"/><ellipse cx="205.2" cy="155.0" rx="6.4" ry="1.4" fill="#fbf6ee" opacity="0.8"/><ellipse cx="198.6" cy="155.1" rx="8.5" ry="1.1" fill="#fbf6ee" opacity="0.8"/><ellipse cx="213.5" cy="157.1" rx="22.8" ry="1.6" fill="#fbf6ee" opacity="0.8"/></g><circle cx="228" cy="113.5" r="40.5" fill="url(#plshade)"/></g><path d="M244 127 L356 205" stroke="#d8d8d8" stroke-width="1.2"/><circle cx="430" cy="255" r="104" fill="url(#corona)" filter="url(#corfx)"/><circle cx="430" cy="255" r="87.5" fill="#ffe890"/><circle cx="430" cy="255" r="86.5" fill="url(#sund)"/><g clip-path="url(#sunclip)" transform="translate(0 -49)"><rect x="340" y="214" width="180" height="180" fill="#000" filter="url(#noise)"/></g><g transform="translate(0 -49)"><circle cx="411" cy="274" r="17.5" fill="#d89090" opacity="0.5"/><path d="M457 252 Q462 250 466 253 L472 266 Q473 272 470 276 L460 268 Z" fill="#fbd8cc" opacity="0.55"/><path d="M452 268 L470 284 Q476 292 472 302 L468 308 L455 295 Q452 290 455 284 L449 276 Z" fill="#fbd8cc" opacity="0.55"/><path d="M388 300 Q376 300 376 314 Q376 328 392 330 L398 322 Q386 322 386 314 Q386 308 392 308 L398 312 Z" fill="#fbd8cc" opacity="0.6"/><path d="M394 313 L472 313 Q470 328 448 336 Q430 342 412 336 Q398 330 394 313 Z" fill="#fbd8cc" opacity="0.55"/><circle cx="447" cy="321" r="8" fill="#d898a0" opacity="0.35"/><rect x="388" y="333" width="83" height="21" rx="10" fill="#c88860" opacity="0.35"/><path d="M402 353 Q408 345 426 344 Q444 345 450 353 Z" fill="#fbd8cc" opacity="0.5"/></g><g transform="translate(0 -49)"><path d="M429 307 L421 240" stroke="#80f040" stroke-width="1.6"/><path d="M421 224 L414 246 Q422 249 429 245 Z" fill="#50e020"/><path d="M429 307 L389 278" stroke="#f04030" stroke-width="1.6"/><path d="M379 270 L385 285 Q392 283 394 276 Z" fill="#a01808"/><path d="M429 307 L371 343" stroke="#4070ff" stroke-width="1.6"/><path d="M355 350 L375 349 Q376 340 370 337 Z" fill="#2050f0"/><path d="M413 297 L424 291 L427 307 L414 313Z" fill="#c06060" fill-opacity="0.35" stroke="#c03030" stroke-width="1"/><path d="M424 291 L440 296 L441 314 L427 307Z" fill="#6080ff" fill-opacity="0.15" stroke="#4050e0" stroke-width="1"/><path d="M414 313 L427 307 L441 314 L428 322Z" fill="#a0c040" fill-opacity="0.5" stroke="#60d040" stroke-width="1"/></g><g transform="translate(0 -49)"><path d="M833 84 L842 92 L825 96 Z" fill="#c0c0c0"/><ellipse cx="837.5" cy="88" rx="3" ry="6.5" transform="rotate(45 837.5 88)" fill="#d8d8d8"/><path d="M806 77 L816 95 L823 77Z" fill="#60b040"/><ellipse cx="815" cy="77" rx="8" ry="3.5" fill="#80dc60"/><path d="M801 88 L814 98 L808 84Z" fill="#e04a40"/><ellipse cx="804" cy="88" rx="4" ry="5" transform="rotate(-40 804 88)" fill="#e05048"/><path d="M810 96 L818 92 L827 96 L827 106 L818 110 L810 106Z" fill="#d0d0d0"/><path d="M810 96 L818 100 L827 96 L818 92Z" fill="#e4e4e4"/><path d="M792 113 L810 108 L800 122Z" fill="#4070e0"/><path d="M815 108 L824 108 L820 119Z" fill="#c8c8c8"/><ellipse cx="819" cy="116" rx="5" ry="3" fill="#c0c0c0"/><path d="M822 105 L844 113 L836 126Z" fill="#a8a8a8"/></g></svg></div>
<div class="t" style="left:809px;top:57px;font-size:12px;color:#e0e0e0;font-weight:bold">y</div>
<div class="t" style="left:794px;top:75px;font-size:12px;color:#e0e0e0;font-weight:bold">x</div>
<div class="t" style="left:785px;top:112px;font-size:12px;color:#e0e0e0;font-weight:bold">z</div>
<div class="t" style="left:806px;top:144px;font-size:12.5px;color:#c0c0c0">Persp</div>
<svg style="left:793px;top:146px" width="10" height="9" viewBox="0 0 10 9"><path d="M10 0.5 L1 4.5 L10 8.5 M1 4.5 H10" fill="none" stroke="#c0c0c0" stroke-width="1"/></svg>
<svg style="left:769px;top:57px" width="16" height="4" viewBox="0 0 16 4"><path d="M0 0.5H16M0 3.5H16" stroke="#8a8a8a" stroke-width="1"/></svg>
<svg style="left:847px;top:65px" width="8" height="9" viewBox="0 0 8 9"><rect x="0" y="4" width="8" height="5" fill="#d0d0d0"/><path d="M5.8 4 V2.5 A2 2 0 0 0 2 2.5" fill="none" stroke="#d0d0d0" stroke-width="1.2"/></svg>
<svg style="left:15px;top:57px" width="16" height="4" viewBox="0 0 16 4"><path d="M0 0.5H16M0 3.5H16" stroke="#8a8a8a" stroke-width="1"/></svg>
<div class="a" style="left:4px;top:69px;width:37px;height:20px;background:#555555;border-radius:4px 4px 0 0"></div>
<div class="a" style="left:4px;top:90px;width:37px;height:20px;background:#46607c;border-radius:0"></div>
<div class="a" style="left:4px;top:111px;width:37px;height:20px;background:#555555;border-radius:0"></div>
<div class="a" style="left:4px;top:132px;width:37px;height:20px;background:#555555;border-radius:0"></div>
<div class="a" style="left:4px;top:153px;width:37px;height:20px;background:#555555;border-radius:0"></div>
<div class="a" style="left:4px;top:174px;width:37px;height:20px;background:#555555;border-radius:0 0 4px 4px"></div>
<svg style="left:15px;top:72px" width="15" height="15" viewBox="0 0 15 15"><path d="M3 8 V4 Q3 3 4 3 Q5 3 5 4 V7 V2 Q5 1 6 1 Q7 1 7 2 V7 V1.5 Q7 0.5 8 0.5 Q9 0.5 9 1.5 V7 V2.5 Q9 1.5 10 1.5 Q11 1.5 11 2.5 V9 L12.5 7 Q13.5 6.5 14 7.5 L11 13 Q10 14.5 8 14.5 H6.5 Q3 14.5 3 11Z" fill="#d8d8d8"/></svg>
<svg style="left:14px;top:92px" width="17" height="15" viewBox="0 0 17 15"><path d="M8.5 1 V14 M1 7.5 H16" stroke="#e8e8e8" stroke-width="1.1"/><path d="M8.5 0 L6 3 H11Z M8.5 15 L6 12 H11Z M0 7.5 L3 5 V10Z M17 7.5 L14 5 V10Z" fill="#e8e8e8"/></svg>
<svg style="left:15px;top:113px" width="15" height="15" viewBox="0 0 15 15"><path d="M11 2.5 A6 6 0 0 1 7 13.5 M4 12.5 A6 6 0 0 1 8 1.5" fill="none" stroke="#c8c8c8" stroke-width="1.1"/><path d="M8 1.5 L5.5 0 M8 1.5 L6 3.5 M7 13.5 L9.5 15 M7 13.5 L9 11.5" stroke="#c8c8c8" stroke-width="1"/></svg>
<svg style="left:15px;top:134px" width="15" height="15" viewBox="0 0 15 15"><rect x="1" y="1" width="13" height="13" fill="none" stroke="#c8c8c8" stroke-width="1.1"/><rect x="1" y="9" width="5" height="5" fill="none" stroke="#c8c8c8" stroke-width="1.1"/><path d="M7 8 L12 3 M8.5 3 H12 V6.5" fill="none" stroke="#c8c8c8" stroke-width="1.1"/></svg>
<svg style="left:15px;top:155px" width="15" height="15" viewBox="0 0 15 15"><path d="M3 1.5 H12 M3 13.5 H12 M1.5 3 V12 M13.5 3 V12" stroke="#c8c8c8" stroke-width="1.1"/><rect x="0" y="0" width="3" height="3" fill="#c8c8c8"/><rect x="12" y="0" width="3" height="3" fill="#c8c8c8"/><rect x="0" y="12" width="3" height="3" fill="#c8c8c8"/><rect x="12" y="12" width="3" height="3" fill="#c8c8c8"/></svg>
<svg style="left:15px;top:175px" width="15" height="15" viewBox="0 0 15 15"><circle cx="7.5" cy="7.5" r="6" fill="none" stroke="#c8c8c8" stroke-width="1"/><path d="M7.5 2 V13 M2 7.5 H13" stroke="#c8c8c8" stroke-width="1"/><path d="M7.5 1 L5.5 3.5 H9.5Z M7.5 14 L5.5 11.5 H9.5Z M1 7.5 L3.5 5.5 V9.5Z M14 7.5 L11.5 5.5 V9.5Z" fill="#c8c8c8"/><path d="M0 15 L3 12 V15Z M15 0 L12 3 V0Z" fill="#c8c8c8"/></svg>
<div class="a" style="left:6px;top:771px;width:1px;height:16px;background:#6a6a6a;"></div>
<div class="a" style="left:9px;top:771px;width:1px;height:16px;background:#6a6a6a;"></div>
<div class="a" style="left:17px;top:769px;width:32px;height:20px;background:#46607c;border-radius:3px 0 0 3px"></div>
<div class="a" style="left:50px;top:769px;width:32px;height:20px;background:#46607c;border-radius:0"></div>
<div class="a" style="left:83px;top:769px;width:32px;height:20px;background:#46607c;border-radius:0"></div>
<div class="a" style="left:116px;top:769px;width:32px;height:20px;background:#46607c;border-radius:0"></div>
<div class="a" style="left:149px;top:769px;width:32px;height:20px;background:#46607c;border-radius:0"></div>
<div class="a" style="left:182px;top:769px;width:32px;height:20px;background:#555555;border-radius:0"></div>
<div class="a" style="left:215px;top:769px;width:32px;height:20px;background:#46607c;border-radius:0"></div>
<div class="a" style="left:248px;top:769px;width:32px;height:20px;background:#555555;border-radius:0"></div>
<div class="a" style="left:281px;top:769px;width:32px;height:20px;background:#555555;border-radius:0 3px 3px 0"></div>
<svg style="left:25px;top:772px" width="17" height="15" viewBox="0 0 17 15"><path d="M8.5 1 V14 M1 7.5 H16" stroke="#d8d8d8" stroke-width="1"/><path d="M8.5 0 L6 3 H11Z M8.5 15 L6 12 H11Z M0 7.5 L3 5 V10Z M17 7.5 L14 5 V10Z" fill="#d8d8d8"/></svg>
<svg style="left:59px;top:772px" width="14" height="14" viewBox="0 0 14 14"><rect x="2" y="0.5" width="10" height="4" fill="none" stroke="#d8d8d8" stroke-width="1"/><rect x="2.5" y="1" width="5" height="3" fill="#d8d8d8"/><path d="M1 8 H13 M1 12 H13" stroke="#d8d8d8" stroke-width="1"/><rect x="8" y="6.5" width="2" height="3" fill="#d8d8d8"/><rect x="4" y="10.5" width="2" height="3" fill="#d8d8d8"/></svg>
<svg style="left:92px;top:772px" width="15" height="14" viewBox="0 0 15 14"><path d="M4 0 V14 M8 2 V14 M12 6 V14 M1 4 H9 M1 8 H14 M5 11 H14 M0 14 L10 0" stroke="#d8d8d8" stroke-width="1"/></svg>
<svg style="left:124px;top:772px" width="15" height="15" viewBox="0 0 15 15"><circle cx="7.5" cy="7.5" r="6.5" fill="none" stroke="#e8e8e8" stroke-width="1.3"/><path d="M14 7.5 A6.5 6.5 0 0 1 2.5 12 Q10 13 12 3 Q14 5 14 7.5Z" fill="#e8e8e8"/></svg>
<svg style="left:157px;top:771px" width="16" height="16" viewBox="0 0 16 16"><circle cx="5" cy="3" r="2.5" fill="#d8d8d8"/><path d="M1 10.5 L8 6.5 L15 10.5 L8 14.5Z M4.5 8.5 L11.5 12.5 M4.5 12.5 L11.5 8.5" fill="none" stroke="#d8d8d8" stroke-width="1.1"/></svg>
<svg style="left:192px;top:773px" width="13" height="13" viewBox="0 0 13 13"><circle cx="5" cy="5" r="4" fill="none" stroke="#c8c8c8" stroke-width="1.3"/><path d="M8 8 L12 12" stroke="#c8c8c8" stroke-width="1.6"/></svg>
<svg style="left:223px;top:772px" width="16" height="15" viewBox="0 0 16 15"><rect x="6" y="5.5" width="4" height="4" fill="none" stroke="#e0e0e0" stroke-width="1"/><path d="M8 0 L6 2.5 H10Z M8 15 L6 12.5 H10Z M0 7.5 L2.5 5.5 V9.5Z M16 7.5 L13.5 5.5 V9.5Z" fill="#e0e0e0"/><path d="M8 2 V5 M8 10 V13 M2.5 7.5 H6 M10 7.5 H13.5" stroke="#e0e0e0" stroke-width="1"/></svg>
<svg style="left:256px;top:771px" width="16" height="16" viewBox="0 0 16 16"><rect x="1" y="1" width="9" height="8" rx="1" fill="#d8d8d8"/><path d="M10 5 L15 2 V9 L10 6Z" fill="#d8d8d8"/><path d="M3 12.5 Q8 8 13 12.5 Q8 17 3 12.5Z" fill="#555" stroke="#d8d8d8" stroke-width="1.1"/><circle cx="8" cy="12.5" r="1.6" fill="#d8d8d8"/></svg>
<svg style="left:289px;top:771px" width="16" height="16" viewBox="0 0 16 16"><circle cx="8" cy="8" r="7" fill="none" stroke="#c8c8c8" stroke-width="1.3"/><path d="M11.5 4.5 L9 9 L4.5 11.5 L7 7Z" fill="none" stroke="#c8c8c8" stroke-width="1.1"/></svg>
<div class="a" style="left:0px;top:794px;width:873px;height:26px;background:#161616;"></div>
<svg style="left:839px;top:803px" width="9" height="10" viewBox="0 0 9 10"><rect x="0.6" y="4.5" width="7.8" height="5" fill="none" stroke="#d8d8d8" stroke-width="1.2"/><path d="M5.8 4.5 V2.6 A2.1 2.1 0 0 0 1.6 2.6" fill="none" stroke="#d8d8d8" stroke-width="1.2"/></svg>
<svg style="left:858px;top:803px" width="3" height="11" viewBox="0 0 3 11"><circle cx="1.5" cy="1.5" r="1.2" fill="#d8d8d8"/><circle cx="1.5" cy="5.5" r="1.2" fill="#d8d8d8"/><circle cx="1.5" cy="9.5" r="1.2" fill="#d8d8d8"/></svg>
<div class="a" style="left:0px;top:820px;width:873px;height:20px;background:#3c3c3c;"></div>
<div class="a" style="left:407px;top:822px;width:318px;height:16px;background:#2a2a2a;border:1px solid #232323;border-radius:4px"></div>
<svg style="left:411px;top:826px" width="8" height="8" viewBox="0 0 8 8"><circle cx="3" cy="3" r="2.2" fill="none" stroke="#c8c8c8" stroke-width="1.2"/><path d="M4.6 4.6 L7.5 7.5" stroke="#c8c8c8" stroke-width="1.4"/></svg>
<div class="a" style="left:707px;top:823px;width:17px;height:14px;background:#333333;border-radius:0 3px 3px 0"></div>
<svg style="left:710px;top:824px" width="12" height="12" viewBox="0 0 12 12"><rect x="3.5" y="0.5" width="8" height="8" fill="none" stroke="#d0d0d0" stroke-width="1"/><rect x="0.5" y="7.5" width="4" height="4" fill="#333" stroke="#d0d0d0" stroke-width="1"/><path d="M5 6.5 L9.5 2 M6.5 2 H9.5 V5" fill="none" stroke="#d0d0d0" stroke-width="1"/></svg>
<div class="a" style="left:727px;top:820px;width:1px;height:20px;background:#2a2a2a;"></div>
<div class="a" style="left:753px;top:820px;width:1px;height:20px;background:#2a2a2a;"></div>
<div class="a" style="left:779px;top:820px;width:1px;height:20px;background:#2a2a2a;"></div>
<div class="a" style="left:805px;top:820px;width:1px;height:20px;background:#2a2a2a;"></div>
<div class="a" style="left:831px;top:820px;width:1px;height:20px;background:#2a2a2a;"></div>
<svg style="left:733px;top:823px" width="14" height="14" viewBox="0 0 14 14"><rect x="1.5" y="0.5" width="5" height="5" fill="#c8c8c8"/><circle cx="4" cy="10" r="3.3" fill="#c8c8c8"/><path d="M8.5 4 L12.5 10 H6.5Z" fill="#c8c8c8"/></svg>
<svg style="left:759px;top:823px" width="12" height="12" viewBox="0 0 12 12"><path d="M1 6 L6 1 H11 V6 L6 11Z" fill="#c8c8c8"/><circle cx="8.5" cy="3.5" r="1" fill="#3c3c3c"/></svg>
<svg style="left:784px;top:822px" width="14" height="14" viewBox="0 0 14 14"><circle cx="7" cy="7" r="6.5" fill="#dcdcdc"/><rect x="6" y="3" width="2" height="5.5" fill="#3c3c3c"/><rect x="6" y="9.5" width="2" height="2" fill="#3c3c3c"/></svg>
<svg style="left:811px;top:823px" width="13" height="12" viewBox="0 0 13 12"><path d="M6.5 0.5 L8.3 4.3 L12.5 4.7 L9.3 7.5 L10.2 11.7 L6.5 9.5 L2.8 11.7 L3.7 7.5 L0.5 4.7 L4.7 4.3Z" fill="#8a8a8a"/></svg>
<svg style="left:837px;top:825px" width="14" height="9" viewBox="0 0 14 9"><path d="M0.5 4.5 Q7 -2 13.5 4.5 Q7 11 0.5 4.5Z" fill="none" stroke="#8a8a8a" stroke-width="1.1"/><circle cx="7" cy="4.2" r="2.5" fill="#8a8a8a"/></svg>
<div class="t" style="left:853px;top:823px;font-size:12.8px;color:#c4c4c4">28</div>
<div class="a" style="left:0px;top:840px;width:873px;height:1px;background:#2a2a2a;"></div>
<div class="a" style="left:0px;top:841px;width:873px;height:21px;background:#3e3e3e;"></div>
<div class="t" style="left:6px;top:844px;color:#b4b4b4">ParallelCascades</div>
<svg style="left:110px;top:846px" width="6" height="10" viewBox="0 0 6 10"><path d="M1 1 L5 5 L1 9" fill="none" stroke="#a0a0a0" stroke-width="1.1"/></svg>
<div class="t b" style="left:121px;top:844px;">ProceduralPlanetGeneration</div>
<div class="a" style="left:0px;top:862px;width:873px;height:22px;background:#333333;"></div>
<div class="t" style="left:-2px;top:864px;">tor</div>
<div class="t" style="left:-1px;top:880px;">phics</div>
<svg style="left:862px;top:867px" width="9" height="6" viewBox="0 0 9 6"><path d="M0 6 L4.5 0 L9 6Z" fill="#c8c8c8"/></svg>
<svg style="left:860px;top:877px" width="14" height="14" viewBox="0 0 14 14"><circle cx="7" cy="7" r="6.5" fill="#5a5a5a"/></svg></div></body></html>
